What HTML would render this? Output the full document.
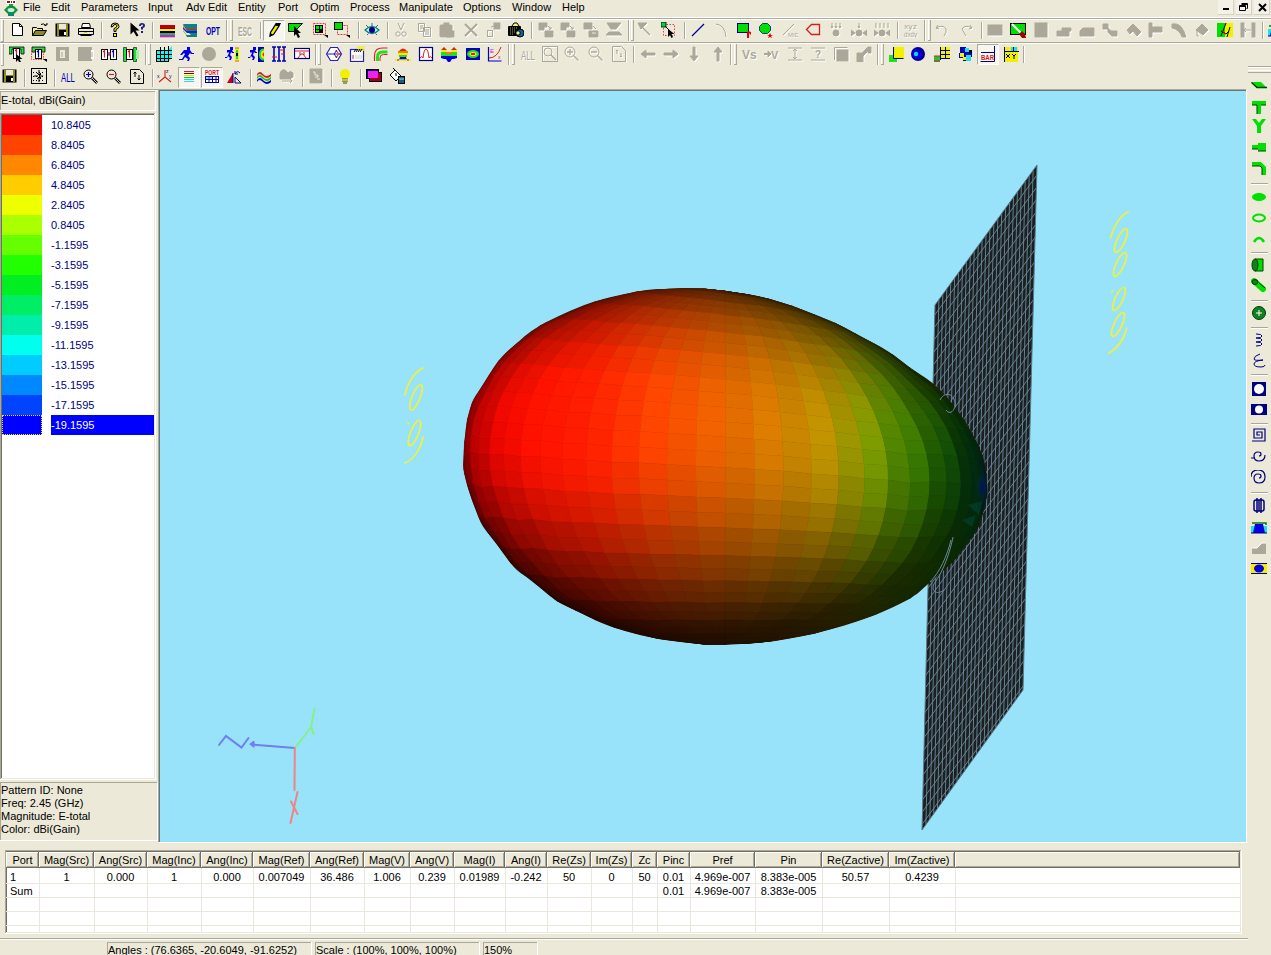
<!DOCTYPE html>
<html><head><meta charset="utf-8"><style>
html,body{margin:0;padding:0;width:1271px;height:955px;overflow:hidden;background:#ECE9D8;}
body{position:relative;font-family:"Liberation Sans",sans-serif;font-size:11px;line-height:13px;}
body div,body span,body svg{position:absolute;}
span{white-space:pre;}
</style></head><body>
<span style="left:23px;top:1px;color:#000;">File</span><span style="left:51px;top:1px;color:#000;">Edit</span><span style="left:81px;top:1px;color:#000;">Parameters</span><span style="left:148px;top:1px;color:#000;">Input</span><span style="left:186px;top:1px;color:#000;">Adv Edit</span><span style="left:238px;top:1px;color:#000;">Entity</span><span style="left:278px;top:1px;color:#000;">Port</span><span style="left:310px;top:1px;color:#000;">Optim</span><span style="left:350px;top:1px;color:#000;">Process</span><span style="left:399px;top:1px;color:#000;">Manipulate</span><span style="left:463px;top:1px;color:#000;">Options</span><span style="left:512px;top:1px;color:#000;">Window</span><span style="left:562px;top:1px;color:#000;">Help</span><div style="left:1218px;top:0px;width:16px;height:15px;background:#F3F1E8;border-right:1px solid #D5D2C4;border-bottom:1px solid #D5D2C4;box-sizing:border-box"></div><div style="left:1236px;top:0px;width:16px;height:15px;background:#F3F1E8;border-right:1px solid #D5D2C4;border-bottom:1px solid #D5D2C4;box-sizing:border-box"></div><div style="left:1254px;top:0px;width:16px;height:15px;background:#F3F1E8;border-right:1px solid #D5D2C4;border-bottom:1px solid #D5D2C4;box-sizing:border-box"></div><div style="left:1223px;top:8px;width:6px;height:2px;background:#000;"></div><svg style="left:1238px;top:2px" width="12" height="11"><path d="M3.5 1.5h6v5h-1M1.5 3.5h6v5h-6z M3.5 2.5h6 M1.5 4.5h6" stroke="#000" fill="none"/></svg><svg style="left:1257px;top:2px" width="11" height="11"><path d="M2 2L9 9M9 2L2 9" stroke="#000" stroke-width="2"/></svg><svg style="left:3px;top:0px" width="16" height="16" viewBox="0 0 16 16"><rect x="3" y="0" width="10" height="4" fill="#fff"/><path d="M4 1h3v2h-3zM8 1h1v2h-1zM10 1h2v2h-2z" fill="#a01818"/><path d="M1 10L5 6L11 6L15 10L11 14L5 14Z" fill="#109040"/><ellipse cx="8" cy="10" rx="3.5" ry="2" fill="#c8f0d8"/><rect x="5" y="14" width="6" height="2" fill="#108080"/><rect x="6" y="4" width="4" height="2" fill="#10a040"/></svg><div style="left:0px;top:17px;width:1271px;height:1px;background:#fff;"></div><div style="left:0px;top:18px;width:1271px;height:1px;background:#ACA899;"></div><div style="left:0px;top:19px;width:1271px;height:1px;background:#fff;"></div><div style="left:0px;top:42px;width:1271px;height:1px;background:#ACA899;"></div><div style="left:0px;top:43px;width:1271px;height:1px;background:#fff;"></div><div style="left:0px;top:89px;width:1246px;height:1px;background:#ACA899;"></div><div style="left:0px;top:90px;width:158px;height:1px;background:#fff;"></div><div style="left:1px;top:20px;width:1px;height:22px;background:#fff;"></div><div style="left:3px;top:20px;width:1px;height:22px;background:#ACA899;"></div><div style="left:1px;top:41px;width:3px;height:1px;background:#ACA899;"></div><div style="left:1px;top:44px;width:1px;height:22px;background:#fff;"></div><div style="left:3px;top:44px;width:1px;height:22px;background:#ACA899;"></div><div style="left:1px;top:65px;width:3px;height:1px;background:#ACA899;"></div><div style="left:263px;top:20px;width:22px;height:21px;background:#F6F5F0;box-sizing:border-box;border-top:1px solid #ACA899;border-left:1px solid #ACA899;border-bottom:1px solid #fff;border-right:1px solid #fff"></div><svg style="left:10px;top:22px" width="16" height="16" viewBox="0 0 16 16"><path d="M2.5 1.5h7l3 3v9h-10z" fill="#fff" stroke="#000"/><path d="M9.5 1.5v3h3" fill="none" stroke="#000"/></svg><svg style="left:32px;top:22px" width="16" height="16" viewBox="0 0 16 16"><path d="M0.5 5.5h4l1 1h5v3" fill="#f0f090" stroke="#000"/><path d="M0.5 5.5v8h10" fill="#f0f090" stroke="#000"/><path d="M0.5 13.5l3-5h11l-3 5z" fill="#8a8a20" stroke="#000"/><path d="M9 2.5q3-2 5 1.5" fill="none" stroke="#000"/><path d="M12 3h3v-2" fill="none" stroke="#000"/></svg><svg style="left:55px;top:22px" width="16" height="16" viewBox="0 0 16 16"><rect x="0.5" y="1.5" width="14" height="13" fill="#000"/><rect x="2" y="2" width="2" height="12" fill="#8a8a20"/><rect x="11" y="2" width="2" height="12" fill="#8a8a20"/><rect x="4" y="2" width="7" height="5" fill="#ECE9D8"/><rect x="4" y="7" width="7" height="1" fill="#8a8a20"/><rect x="9" y="10" width="2" height="3" fill="#fff"/></svg><svg style="left:78px;top:22px" width="16" height="16" viewBox="0 0 16 16"><path d="M4.5 1.5h7l1 4h-9z" fill="#fff" stroke="#000"/><path d="M0.5 6.5h15v6h-15z" fill="#ECE9D8" stroke="#000"/><rect x="1" y="9" width="14" height="1" fill="#000"/><rect x="6" y="10" width="3" height="1" fill="#e0d000"/><path d="M2.5 13.5h11" stroke="#000"/></svg><div style="left:101px;top:22px;width:1px;height:17px;background:#ACA899;"></div><div style="left:102px;top:22px;width:1px;height:17px;background:#fff;"></div><svg style="left:107px;top:22px" width="16" height="16" viewBox="0 0 16 16"><path d="M4 5q0-4 4-4q4 0 4 3.5q0 2-3 3v2h-2v-3q3-1 3-2.5q0-1.5-2-1.5q-2 0-2 2z" fill="#f8f000" stroke="#000" stroke-width="1"/><rect x="6.5" y="11.5" width="3" height="3" fill="#f8f000" stroke="#000"/></svg><svg style="left:130px;top:22px" width="16" height="16" viewBox="0 0 16 16"><path d="M0.5 0.5v12l3-3l3 5l2-1l-3-5h4z" fill="#000"/><path d="M9 4q0-3 3-3q3 0 3 2.5q0 2-2 2.5v1.5h-2v-2.5q2-.5 2-1.5q0-1-1-1q-1 0-1 1.5z" fill="#202080"/><rect x="11" y="9" width="2" height="2" fill="#202080"/></svg><div style="left:152px;top:22px;width:1px;height:17px;background:#ACA899;"></div><div style="left:153px;top:22px;width:1px;height:17px;background:#fff;"></div><svg style="left:159px;top:22px" width="16" height="16" viewBox="0 0 16 16"><rect x="1" y="3" width="15" height="3" fill="#c00000"/><rect x="1" y="6" width="15" height="1" fill="#800000"/><rect x="1" y="7" width="15" height="2" fill="#f8f000"/><rect x="1" y="9" width="15" height="2" fill="#000"/><rect x="1" y="11" width="15" height="2" fill="#40a080"/><rect x="1" y="13" width="15" height="2" fill="#a040a0"/><rect x="1" y="15" width="15" height="1" fill="#f0a0f0"/></svg><svg style="left:182px;top:22px" width="16" height="16" viewBox="0 0 16 16"><path d="M1 2h14v11h-6l-4-4z" fill="#108080"/><path d="M1 3l4 4h10v1h-10l-4-4z" fill="#e02020"/><path d="M1 5l4 4h10v2h-10l-4-4z" fill="#2020c0"/><path d="M1 8l4 5h10v1h-10l-4-5z" fill="#20e020"/><path d="M4 13h11v2h-10z" fill="#108080"/></svg><svg style="left:205px;top:22px" width="16" height="16" viewBox="0 0 16 16"><text x="1" y="12.5" font-family="Liberation Sans" font-weight="bold" font-size="11" fill="#0000c0" textLength="14" lengthAdjust="spacingAndGlyphs">OPT</text></svg><div style="left:226px;top:20px;width:1px;height:21px;background:#ACA899;"></div><div style="left:227px;top:20px;width:1px;height:21px;background:#fff;"></div><div style="left:230px;top:20px;width:1px;height:21px;background:#fff;"></div><div style="left:232px;top:20px;width:1px;height:21px;background:#ACA899;"></div><div style="left:230px;top:40px;width:3px;height:1px;background:#ACA899;"></div><svg style="left:237px;top:22px" width="16" height="16" viewBox="0 0 16 16"><text x="2" y="14.5" font-family="Liberation Sans" font-weight="bold" font-size="12" fill="#fff" textLength="14" lengthAdjust="spacingAndGlyphs">ESC</text><text x="1" y="13.5" font-family="Liberation Sans" font-weight="bold" font-size="12" fill="#ACA899" textLength="14" lengthAdjust="spacingAndGlyphs">ESC</text></svg><div style="left:260px;top:22px;width:1px;height:17px;background:#ACA899;"></div><div style="left:261px;top:22px;width:1px;height:17px;background:#fff;"></div><svg style="left:266px;top:22px" width="16" height="16" viewBox="0 0 16 16"><path d="M4 14l0.5-3.5l5.5-8.5l3 2l-5.5 8.5z" fill="#f0f000" stroke="#000" stroke-width="1.3"/><path d="M10 1h5l-1.5 3h-4z" fill="#000"/><path d="M3.5 15l1-4l2.5 1.7z" fill="#000"/></svg><svg style="left:288px;top:22px" width="16" height="16" viewBox="0 0 16 16"><path d="M0.5 1.5h14l-6 6v2h-8z" fill="#00e000" stroke="#000" stroke-width="1"/><path d="M6 4l0 0l7 7h-3l2 4l-2 1l-2-4l-2 2z" fill="#000"/></svg><svg style="left:312px;top:22px" width="16" height="16" viewBox="0 0 16 16"><rect x="1.5" y="1.5" width="12" height="11" fill="none" stroke="#e04040" stroke-dasharray="2 1"/><rect x="3" y="3" width="8" height="8" fill="#000"/><rect x="4" y="4" width="3" height="3" fill="#00e000"/><rect x="8" y="4" width="2" height="3" fill="#00e000"/><rect x="4" y="8" width="3" height="2" fill="#00e000"/><path d="M12 13h4v3z" fill="#000"/></svg><svg style="left:334px;top:22px" width="16" height="16" viewBox="0 0 16 16"><rect x="3.5" y="3.5" width="10" height="9" fill="none" stroke="#e04040" stroke-dasharray="2 1"/><rect x="0.5" y="0.5" width="8" height="7" fill="#00e000" stroke="#000"/><path d="M12 13h4v3z" fill="#000"/></svg><div style="left:358px;top:22px;width:1px;height:17px;background:#ACA899;"></div><div style="left:359px;top:22px;width:1px;height:17px;background:#fff;"></div><svg style="left:364px;top:22px" width="16" height="16" viewBox="0 0 16 16"><path d="M1 8q7-7 14 0q-7 7-14 0z" fill="#b0f0f0" stroke="#108080" stroke-width="1.2"/><ellipse cx="8" cy="8" rx="3" ry="3" fill="#000080"/><path d="M2 3l2 2M8 1v3M14 3l-2 2M3 13l1.5-1.5M13 13l-1.5-1.5" stroke="#108080"/></svg><div style="left:387px;top:22px;width:1px;height:17px;background:#ACA899;"></div><div style="left:388px;top:22px;width:1px;height:17px;background:#fff;"></div><svg style="left:393px;top:22px" width="16" height="16" viewBox="0 0 16 16"><g transform="translate(1,1)" fill="#fff" stroke="#fff"><path d="M5 1l3 7M11 1l-3 7" fill="none"/><circle cx="5" cy="12" r="2.2" fill="none"/><circle cx="11" cy="12" r="2.2" fill="none"/></g><g fill="#ACA899" stroke="#ACA899"><path d="M5 1l3 7M11 1l-3 7" fill="none"/><circle cx="5" cy="12" r="2.2" fill="none"/><circle cx="11" cy="12" r="2.2" fill="none"/></g></svg><svg style="left:417px;top:22px" width="16" height="16" viewBox="0 0 16 16"><g transform="translate(1,1)" fill="#fff" stroke="#fff"><path d="M1.5 1.5h6v8h-6zM6.5 5.5h7v9h-7z" fill="none"/><path d="M3 4h3M3 6h3M8 8h4M8 10h4M8 12h4" fill="none"/></g><g fill="#ACA899" stroke="#ACA899"><path d="M1.5 1.5h6v8h-6zM6.5 5.5h7v9h-7z" fill="none"/><path d="M3 4h3M3 6h3M8 8h4M8 10h4M8 12h4" fill="none"/></g></svg><svg style="left:439px;top:22px" width="16" height="16" viewBox="0 0 16 16"><g transform="translate(1,1)" fill="#fff" stroke="#fff"><rect x="1" y="3" width="12" height="12" rx="1"/><rect x="5" y="1" width="5" height="3"/><rect x="8" y="9" width="7" height="6"/></g><g fill="#ACA899" stroke="#ACA899"><rect x="1" y="3" width="12" height="12" rx="1"/><rect x="5" y="1" width="5" height="3"/><rect x="8" y="9" width="7" height="6"/></g></svg><svg style="left:463px;top:22px" width="16" height="16" viewBox="0 0 16 16"><g transform="translate(1,1)" fill="#fff" stroke="#fff"><path d="M2 2l12 12M14 2l-12 12" stroke-width="2" fill="none"/></g><g fill="#ACA899" stroke="#ACA899"><path d="M2 2l12 12M14 2l-12 12" stroke-width="2" fill="none"/></g></svg><svg style="left:485px;top:22px" width="16" height="16" viewBox="0 0 16 16"><g transform="translate(1,1)" fill="#fff" stroke="#fff"><rect x="9" y="1" width="6" height="6"/><rect x="2.5" y="8.5" width="5" height="6" fill="none"/><path d="M6 5l4-1" fill="none"/></g><g fill="#ACA899" stroke="#ACA899"><rect x="9" y="1" width="6" height="6"/><rect x="2.5" y="8.5" width="5" height="6" fill="none"/><path d="M6 5l4-1" fill="none"/></g></svg><svg style="left:508px;top:22px" width="16" height="16" viewBox="0 0 16 16"><rect x="0" y="4" width="13" height="10" rx="1" fill="#000"/><path d="M4 4l2-3h3l2 3" fill="#f0f080" stroke="#000"/><path d="M2 6h1M4 6h1M6 6h1M8 6h1M2 8h1M4 8h1M6 8h1M2 10h1M4 10h1M6 10h1M2 12h1M4 12h1" stroke="#a0a040"/><circle cx="12" cy="11" r="4" fill="#106090" stroke="#000"/><circle cx="10" cy="11" r="2.2" fill="#f0f0a0" stroke="#000"/></svg><div style="left:531px;top:22px;width:1px;height:17px;background:#ACA899;"></div><div style="left:532px;top:22px;width:1px;height:17px;background:#fff;"></div><svg style="left:538px;top:22px" width="16" height="16" viewBox="0 0 16 16"><g transform="translate(1,1)" fill="#fff" stroke="#fff"><path d="M1 1h8v4h-3v3h-5z"/><path d="M7 9h8v6h-8z"/><path d="M10 4l3 3M13 5v2h-2" fill="none"/></g><g fill="#ACA899" stroke="#ACA899"><path d="M1 1h8v4h-3v3h-5z"/><path d="M7 9h8v6h-8z"/><path d="M10 4l3 3M13 5v2h-2" fill="none"/></g></svg><svg style="left:560px;top:22px" width="16" height="16" viewBox="0 0 16 16"><g transform="translate(1,1)" fill="#fff" stroke="#fff"><path d="M1 1h8v4h-3v3h-5z"/><path d="M7 9h8v6h-8z"/><path d="M10 4l3 3M13 5v2h-2" fill="none"/></g><g fill="#ACA899" stroke="#ACA899"><path d="M1 1h8v4h-3v3h-5z"/><path d="M7 9h8v6h-8z"/><path d="M10 4l3 3M13 5v2h-2" fill="none"/></g></svg><svg style="left:583px;top:22px" width="16" height="16" viewBox="0 0 16 16"><g transform="translate(1,1)" fill="#fff" stroke="#fff"><path d="M1 1h8v6h-8z"/><path d="M6 9h9v6h-9z"/><path d="M9 11h4" stroke="#ECE9D8" fill="none"/><path d="M10 4l3 3" fill="none"/></g><g fill="#ACA899" stroke="#ACA899"><path d="M1 1h8v6h-8z"/><path d="M6 9h9v6h-9z"/><path d="M9 11h4" stroke="#ECE9D8" fill="none"/><path d="M10 4l3 3" fill="none"/></g></svg><svg style="left:606px;top:22px" width="16" height="16" viewBox="0 0 16 16"><g transform="translate(1,1)" fill="#fff" stroke="#fff"><path d="M1 1h14l-5 6h-5z"/><path d="M3 10h10l3 3h-16z"/></g><g fill="#ACA899" stroke="#ACA899"><path d="M1 1h14l-5 6h-5z"/><path d="M3 10h10l3 3h-16z"/></g></svg><div style="left:628px;top:20px;width:1px;height:21px;background:#ACA899;"></div><div style="left:629px;top:20px;width:1px;height:21px;background:#fff;"></div><div style="left:631px;top:20px;width:1px;height:21px;background:#fff;"></div><div style="left:633px;top:20px;width:1px;height:21px;background:#ACA899;"></div><div style="left:631px;top:40px;width:3px;height:1px;background:#ACA899;"></div><svg style="left:637px;top:22px" width="16" height="16" viewBox="0 0 16 16"><g transform="translate(1,1)" fill="#fff" stroke="#fff"><path d="M1 1h9l-3 3l-3 3z"/><path d="M4 4l9 9" stroke-width="1.5" fill="none"/></g><g fill="#ACA899" stroke="#ACA899"><path d="M1 1h9l-3 3l-3 3z"/><path d="M4 4l9 9" stroke-width="1.5" fill="none"/></g></svg><svg style="left:661px;top:22px" width="16" height="16" viewBox="0 0 16 16"><rect x="2.5" y="2.5" width="11" height="11" fill="none" stroke="#e04040" stroke-dasharray="1.5 1.5"/><rect x="0" y="0" width="5" height="5" fill="#00d040" stroke="#000" stroke-width="0.8"/><path d="M4 4l6 6" stroke="#000"/><path d="M7 7v8l2-2l1.5 3l1.5-1l-1.5-3h3z" fill="#000"/></svg><div style="left:684px;top:22px;width:1px;height:17px;background:#ACA899;"></div><div style="left:685px;top:22px;width:1px;height:17px;background:#fff;"></div><svg style="left:690px;top:22px" width="16" height="16" viewBox="0 0 16 16"><path d="M2 14L14 2" stroke="#0000a0" stroke-width="1.2"/></svg><svg style="left:713px;top:22px" width="16" height="16" viewBox="0 0 16 16"><g transform="translate(1,1)" fill="#fff" stroke="#fff"><path d="M3 2q9 1 10 13" fill="none"/></g><g fill="#ACA899" stroke="#ACA899"><path d="M3 2q9 1 10 13" fill="none"/></g></svg><svg style="left:736px;top:22px" width="16" height="16" viewBox="0 0 16 16"><rect x="1.5" y="1.5" width="11" height="9" fill="#00e000" stroke="#000080"/><path d="M11 11v5h2v-5l2 2v-3l-3-1z" fill="#e00000"/></svg><svg style="left:758px;top:22px" width="16" height="16" viewBox="0 0 16 16"><path d="M4.5 1.5h5l3 3v4l-3 3h-5l-3-3v-4z" fill="#00e000" stroke="#104080"/><path d="M12 11l1 2h2l-2 1l1 2l-2-1l-2 1l1-2l-2-1h2z" fill="#e00000"/></svg><svg style="left:782px;top:22px" width="16" height="16" viewBox="0 0 16 16"><g transform="translate(1,1)" fill="#fff" stroke="#fff"><path d="M1 13L12 2" fill="none"/><text x="6" y="15" font-size="6" font-family="Liberation Sans" stroke="none">MID</text></g><g fill="#ACA899" stroke="#ACA899"><path d="M1 13L12 2" fill="none"/><text x="6" y="15" font-size="6" font-family="Liberation Sans" stroke="none">MID</text></g></svg><svg style="left:805px;top:22px" width="16" height="16" viewBox="0 0 16 16"><path d="M1.5 7.5l5-5h8v10h-8z" fill="none" stroke="#d02020" stroke-width="1.3"/></svg><svg style="left:828px;top:22px" width="16" height="16" viewBox="0 0 16 16"><g transform="translate(1,1)" fill="#fff" stroke="#fff"><path d="M4 1v5M8 1v5M12 1v5M3 4l1 2l1-2M7 4l1 2l1-2M11 4l1 2l1-2" fill="none"/><circle cx="8" cy="11" r="3"/></g><g fill="#ACA899" stroke="#ACA899"><path d="M4 1v5M8 1v5M12 1v5M3 4l1 2l1-2M7 4l1 2l1-2M11 4l1 2l1-2" fill="none"/><circle cx="8" cy="11" r="3"/></g></svg><svg style="left:851px;top:22px" width="16" height="16" viewBox="0 0 16 16"><g transform="translate(1,1)" fill="#fff" stroke="#fff"><path d="M8 1v5M7 4l1 2l1-2" fill="none"/><circle cx="8" cy="11" r="3"/><path d="M0 8l4 3l-4 3zM16 8l-4 3l4 3z"/></g><g fill="#ACA899" stroke="#ACA899"><path d="M8 1v5M7 4l1 2l1-2" fill="none"/><circle cx="8" cy="11" r="3"/><path d="M0 8l4 3l-4 3zM16 8l-4 3l4 3z"/></g></svg><svg style="left:874px;top:22px" width="16" height="16" viewBox="0 0 16 16"><g transform="translate(1,1)" fill="#fff" stroke="#fff"><path d="M2 1v5M6 1v5M10 1v5M14 1v5" fill="none"/><circle cx="8" cy="11" r="3"/><path d="M0 8l4 3l-4 3zM16 8l-4 3l4 3z"/></g><g fill="#ACA899" stroke="#ACA899"><path d="M2 1v5M6 1v5M10 1v5M14 1v5" fill="none"/><circle cx="8" cy="11" r="3"/><path d="M0 8l4 3l-4 3zM16 8l-4 3l4 3z"/></g></svg><div style="left:897px;top:22px;width:1px;height:17px;background:#ACA899;"></div><div style="left:898px;top:22px;width:1px;height:17px;background:#fff;"></div><svg style="left:903px;top:22px" width="16" height="16" viewBox="0 0 16 16"><g transform="translate(1,1)" fill="#fff" stroke="#fff"><text x="1" y="7" font-size="8" font-family="Liberation Sans" stroke="none" textLength="13" lengthAdjust="spacingAndGlyphs">xyz</text><text x="1" y="15" font-size="8" font-family="Liberation Sans" stroke="none" textLength="13" lengthAdjust="spacingAndGlyphs">dxdy</text></g><g fill="#ACA899" stroke="#ACA899"><text x="1" y="7" font-size="8" font-family="Liberation Sans" stroke="none" textLength="13" lengthAdjust="spacingAndGlyphs">xyz</text><text x="1" y="15" font-size="8" font-family="Liberation Sans" stroke="none" textLength="13" lengthAdjust="spacingAndGlyphs">dxdy</text></g></svg><div style="left:924px;top:20px;width:1px;height:21px;background:#ACA899;"></div><div style="left:925px;top:20px;width:1px;height:21px;background:#fff;"></div><div style="left:928px;top:20px;width:1px;height:21px;background:#fff;"></div><div style="left:930px;top:20px;width:1px;height:21px;background:#ACA899;"></div><div style="left:928px;top:40px;width:3px;height:1px;background:#ACA899;"></div><svg style="left:934px;top:22px" width="16" height="16" viewBox="0 0 16 16"><g transform="translate(1,1)" fill="#fff" stroke="#fff"><path d="M4 3l-2 3l3 1" fill="none"/><path d="M2 6q7-4 10 1q1 3-2 7" fill="none"/></g><g fill="#ACA899" stroke="#ACA899"><path d="M4 3l-2 3l3 1" fill="none"/><path d="M2 6q7-4 10 1q1 3-2 7" fill="none"/></g></svg><svg style="left:958px;top:22px" width="16" height="16" viewBox="0 0 16 16"><g transform="translate(1,1)" fill="#fff" stroke="#fff"><path d="M12 3l2 3l-3 1" fill="none"/><path d="M14 6q-7-4-10 1l4 7" fill="none"/></g><g fill="#ACA899" stroke="#ACA899"><path d="M12 3l2 3l-3 1" fill="none"/><path d="M14 6q-7-4-10 1l4 7" fill="none"/></g></svg><div style="left:981px;top:22px;width:1px;height:17px;background:#ACA899;"></div><div style="left:982px;top:22px;width:1px;height:17px;background:#fff;"></div><svg style="left:987px;top:22px" width="16" height="16" viewBox="0 0 16 16"><g transform="translate(1,1)" fill="#fff" stroke="#fff"><rect x="1" y="3" width="14" height="10"/></g><g fill="#ACA899" stroke="#ACA899"><rect x="1" y="3" width="14" height="10"/></g></svg><svg style="left:1010px;top:22px" width="16" height="16" viewBox="0 0 16 16"><rect x="0.5" y="1.5" width="15" height="11" fill="#00e000" stroke="#000"/><path d="M2 2l12 12" stroke="#fff" stroke-width="2"/><path d="M9 12l3-3l3 3l1 4h-4z" fill="#a00000"/></svg><svg style="left:1033px;top:22px" width="16" height="16" viewBox="0 0 16 16"><g transform="translate(1,1)" fill="#fff" stroke="#fff"><rect x="2" y="1" width="12" height="14"/></g><g fill="#ACA899" stroke="#ACA899"><rect x="2" y="1" width="12" height="14"/></g></svg><svg style="left:1056px;top:22px" width="16" height="16" viewBox="0 0 16 16"><g transform="translate(1,1)" fill="#fff" stroke="#fff"><path d="M1 9h5v-3h9v3h-2v5h-12z"/></g><g fill="#ACA899" stroke="#ACA899"><path d="M1 9h5v-3h9v3h-2v5h-12z"/></g></svg><svg style="left:1079px;top:22px" width="16" height="16" viewBox="0 0 16 16"><g transform="translate(1,1)" fill="#fff" stroke="#fff"><path d="M1 9l3-3h11v8h-14z"/></g><g fill="#ACA899" stroke="#ACA899"><path d="M1 9l3-3h11v8h-14z"/></g></svg><svg style="left:1102px;top:22px" width="16" height="16" viewBox="0 0 16 16"><g transform="translate(1,1)" fill="#fff" stroke="#fff"><path d="M1 2h5v4l3 3h6v5h-5l-4-4v-3h-5z"/></g><g fill="#ACA899" stroke="#ACA899"><path d="M1 2h5v4l3 3h6v5h-5l-4-4v-3h-5z"/></g></svg><svg style="left:1126px;top:22px" width="16" height="16" viewBox="0 0 16 16"><g transform="translate(1,1)" fill="#fff" stroke="#fff"><path d="M1 8l6-6l8 8l-4 4l-4-5l-3 3z"/></g><g fill="#ACA899" stroke="#ACA899"><path d="M1 8l6-6l8 8l-4 4l-4-5l-3 3z"/></g></svg><svg style="left:1147px;top:22px" width="16" height="16" viewBox="0 0 16 16"><g transform="translate(1,1)" fill="#fff" stroke="#fff"><path d="M2 1h3v4h10v5h-10v5h-3z"/></g><g fill="#ACA899" stroke="#ACA899"><path d="M2 1h3v4h10v5h-10v5h-3z"/></g></svg><svg style="left:1171px;top:22px" width="16" height="16" viewBox="0 0 16 16"><g transform="translate(1,1)" fill="#fff" stroke="#fff"><path d="M1 2q10-2 14 13h-4q-2-7-10-9z"/></g><g fill="#ACA899" stroke="#ACA899"><path d="M1 2q10-2 14 13h-4q-2-7-10-9z"/></g></svg><svg style="left:1194px;top:22px" width="16" height="16" viewBox="0 0 16 16"><g transform="translate(1,1)" fill="#fff" stroke="#fff"><path d="M2 8l6-6l6 6l-5 5z"/><path d="M3 9v5h2" fill="none"/></g><g fill="#ACA899" stroke="#ACA899"><path d="M2 8l6-6l6 6l-5 5z"/><path d="M3 9v5h2" fill="none"/></g></svg><svg style="left:1217px;top:22px" width="16" height="16" viewBox="0 0 16 16"><rect x="0" y="1" width="8" height="14" fill="#00e000"/><rect x="8" y="1" width="8" height="14" fill="#f0f000"/><path d="M9 1l-5 13M4 9l5 3l3-3M13 5l-3 10" stroke="#000" fill="none"/><path d="M5 9l4 3" stroke="#e00000"/></svg><svg style="left:1240px;top:22px" width="16" height="16" viewBox="0 0 16 16"><g transform="translate(1,1)" fill="#fff" stroke="#fff"><rect x="1" y="1" width="3" height="14"/><rect x="12" y="1" width="3" height="14"/><path d="M5 8h6M6 6l-2 2l2 2" fill="none"/></g><g fill="#ACA899" stroke="#ACA899"><rect x="1" y="1" width="3" height="14"/><rect x="12" y="1" width="3" height="14"/><path d="M5 8h6M6 6l-2 2l2 2" fill="none"/></g></svg><div style="left:1262px;top:22px;width:1px;height:17px;background:#ACA899;"></div><div style="left:1263px;top:22px;width:1px;height:17px;background:#fff;"></div><svg style="left:1268px;top:22px" width="16" height="16" viewBox="0 0 16 16"><rect x="0" y="7" width="16" height="7" fill="#20e0f0"/><path d="M4 5h8l2 9h-12z" fill="#0000e0"/><path d="M1 4h14v2" stroke="#008000" fill="none" stroke-width="1.5"/><path d="M0 14h16" stroke="#000080"/></svg><div style="left:977px;top:44px;width:22px;height:21px;background:#F6F5F0;box-sizing:border-box;border-top:1px solid #ACA899;border-left:1px solid #ACA899;border-bottom:1px solid #fff;border-right:1px solid #fff"></div><svg style="left:9px;top:46px" width="16" height="16" viewBox="0 0 16 16"><path d="M0 1h15v7h-3v-5h-9v5h-3z" fill="#20e040" stroke="#000" stroke-width="0.8"/><rect x="4.5" y="2.5" width="6" height="10" fill="#fff" stroke="#000"/><path d="M6 5l1.5-1.5v7" stroke="#d02020" fill="none" stroke-width="1.2"/><path d="M7 8v8l2-2l1.5 3l1.5-1l-1.5-3h3z" fill="#000"/></svg><svg style="left:31px;top:46px" width="16" height="16" viewBox="0 0 16 16"><path d="M1 1h13v5h-13z" fill="#20e040" stroke="#000" stroke-width="0.8"/><rect x="0.5" y="4.5" width="12" height="9" fill="none" stroke="#e04040" stroke-dasharray="1.5 1"/><rect x="4.5" y="3.5" width="6" height="9" fill="#fff" stroke="#000"/><path d="M6 6l1.5-1.5v7" stroke="#0000c0" fill="none" stroke-width="1.2"/><path d="M12 13h4v3z" fill="#000"/></svg><svg style="left:54px;top:46px" width="16" height="16" viewBox="0 0 16 16"><rect x="2" y="1" width="13" height="14" fill="#ACA899"/><rect x="6" y="4" width="5" height="8" fill="#ECE9D8"/><path d="M8 6v5" stroke="#ACA899"/></svg><svg style="left:78px;top:46px" width="16" height="16" viewBox="0 0 16 16"><rect x="0" y="1" width="14" height="14" fill="#ACA899"/><rect x="13" y="4" width="3" height="9" fill="#fff"/><path d="M14 6v5" stroke="#ACA899"/></svg><svg style="left:101px;top:46px" width="16" height="16" viewBox="0 0 16 16"><rect x="0.5" y="3.5" width="6" height="10" fill="#fff" stroke="#000"/><path d="M2 6l1.5-1.5v7" stroke="#d02020" fill="none" stroke-width="1.2"/><rect x="9.5" y="3.5" width="6" height="10" fill="#fff" stroke="#000"/><path d="M11 6l1.5-1.5v7" stroke="#0000c0" fill="none" stroke-width="1.2"/><path d="M6 8h4M8 6v4" stroke="#a020a0" stroke-width="1.2"/></svg><svg style="left:123px;top:46px" width="16" height="16" viewBox="0 0 16 16"><path d="M0.5 1.5h3v14h-3z" fill="#20e040" stroke="#000" stroke-width="0.6"/><path d="M10.5 1.5h3v14h-3z" fill="#20e040" stroke="#000" stroke-width="0.6"/><rect x="13" y="4" width="3" height="9" fill="#a0f0a0"/><rect x="3.5" y="3.5" width="6" height="10" fill="#fff" stroke="#000"/><path d="M5 6l1.5-1.5v7" stroke="#d02020" fill="none" stroke-width="1.2"/></svg><div style="left:145px;top:44px;width:1px;height:21px;background:#ACA899;"></div><div style="left:146px;top:44px;width:1px;height:21px;background:#fff;"></div><div style="left:148px;top:44px;width:1px;height:21px;background:#fff;"></div><div style="left:150px;top:44px;width:1px;height:21px;background:#ACA899;"></div><div style="left:148px;top:64px;width:3px;height:1px;background:#ACA899;"></div><svg style="left:156px;top:46px" width="16" height="16" viewBox="0 0 16 16"><path d="M0 4h12l4-4v12l-4 4h-12z" fill="#20f0f0"/><path d="M0.5 4v12M4.5 1v15M8.5 1v15M12.5 0v16M0 4.5h16M0 8.5h16M0 12.5h16M0 15.5h12" stroke="#000"/></svg><svg style="left:178px;top:46px" width="16" height="16" viewBox="0 0 16 16"><path d="M9 1h3v3h-3z M6 4h6l2 3l2 0v1h-3l-1-1l-2 3l2 2l-1 3h-2l1-2l-3-2l-2 3h-4v-1h3l3-5l-1-1l-2 2h-2z" fill="#0000e0"/></svg><svg style="left:201px;top:46px" width="16" height="16" viewBox="0 0 16 16"><circle cx="8" cy="8" r="7" fill="#ACA899"/></svg><svg style="left:225px;top:46px" width="16" height="16" viewBox="0 0 16 16"><path d="M5 1h3v3h-3z M2 4h5l1 2l1 0v1h-2l-1-1l-1 3l2 2l-1 3h-2l1-2l-2-2l-1 2h-2v-1h2l2-4l-1-1l-1 1z" fill="#0000e0"/><rect x="10" y="2" width="4" height="13" fill="#f0f000"/><rect x="11" y="4" width="2" height="9" fill="#20e020"/><rect x="11" y="7" width="2" height="3" fill="#000"/><path d="M10 2h4M10 15h4" stroke="#f06000"/></svg><svg style="left:248px;top:46px" width="16" height="16" viewBox="0 0 16 16"><path d="M5 1h3v3h-3z M2 4h5l1 2l1 0v1h-2l-1-1l-1 3l2 2l-1 3h-2l1-2l-2-2l-1 2h-2v-1h2l2-4l-1-1l-1 1z" fill="#0000e0"/><rect x="10" y="1" width="6" height="15" fill="#0000c0"/><ellipse cx="15" cy="8.5" rx="4" ry="6" fill="#20e020"/><ellipse cx="15.5" cy="8.5" rx="2.5" ry="4" fill="#f0f000"/><ellipse cx="16" cy="8.5" rx="1.5" ry="2" fill="#f02020"/></svg><svg style="left:271px;top:46px" width="16" height="16" viewBox="0 0 16 16"><path d="M1 1h4M3 1v14M1 15h4M6 1h4M8 1v14M6 15h4M11 1h4M13 1v14M11 15h4" stroke="#0000c0" stroke-width="1.6"/><path d="M1 11h5M9 4h5M10 8h4" stroke="#d02020"/></svg><svg style="left:294px;top:46px" width="16" height="16" viewBox="0 0 16 16"><rect x="0.5" y="2.5" width="15" height="10" fill="#fff" stroke="#000080" stroke-width="1.2"/><path d="M1 5h14M4 12l3-4h2l3 4M6 6v3M10 6v3" stroke="#d02020" fill="none"/></svg><div style="left:315px;top:44px;width:1px;height:21px;background:#ACA899;"></div><div style="left:316px;top:44px;width:1px;height:21px;background:#fff;"></div><div style="left:318px;top:44px;width:1px;height:21px;background:#fff;"></div><div style="left:320px;top:44px;width:1px;height:21px;background:#ACA899;"></div><div style="left:318px;top:64px;width:3px;height:1px;background:#ACA899;"></div><svg style="left:326px;top:46px" width="16" height="16" viewBox="0 0 16 16"><path d="M4.5 1.5h7l4 6.5l-4 6.5h-7l-4-6.5z" fill="#fff" stroke="#2020c0" stroke-width="1.2"/><path d="M1 8h14M8 8l3-4M8 8l3 4" stroke="#2020c0" fill="none"/><path d="M9 5q3 0 3 2M9 11q3 0 3-2M12 8l3 0" stroke="#d02020" fill="none"/></svg><svg style="left:349px;top:46px" width="16" height="16" viewBox="0 0 16 16"><rect x="1.5" y="3.5" width="13" height="12" fill="#fff" stroke="#2020c0" stroke-width="1.2"/><rect x="8" y="0" width="8" height="5" fill="#f0f040" opacity="0.8"/><path d="M5 6l2-3M7 6l2-3M9 6l2-3M11 6l2-3" stroke="#000"/><path d="M3 10h2M3 12h2" stroke="#d02020"/><path d="M6 10h7M6 12h7" stroke="#ccc"/></svg><svg style="left:373px;top:46px" width="16" height="16" viewBox="0 0 16 16"><path d="M1.5 15v-5q0-8 8-8h5" fill="none" stroke="#e02020" stroke-width="1.2"/><path d="M4.5 15v-4q0-5 5-5h5" fill="none" stroke="#20e020" stroke-width="3"/><path d="M7 15v-3q0-3.5 3.5-3.5h4" fill="none" stroke="#e02020" stroke-width="1"/></svg><svg style="left:395px;top:46px" width="16" height="16" viewBox="0 0 16 16"><path d="M4 5q4-5 8 0z" fill="#e02020"/><rect x="3" y="5" width="10" height="2" fill="#f08000"/><rect x="3" y="7" width="10" height="2" fill="#f0f000"/><rect x="4" y="9" width="8" height="2" fill="#20e020"/><path d="M5 11h6l1 3h-8z" fill="#0000e0"/><path d="M0 14h16" stroke="#f0f000" stroke-width="1.5"/><path d="M2 14h2M12 14h2" stroke="#e06000" stroke-width="1.5"/></svg><svg style="left:418px;top:46px" width="16" height="16" viewBox="0 0 16 16"><rect x="1.5" y="1.5" width="13" height="13" fill="#fff" stroke="#000080" stroke-width="1.2"/><path d="M2 12q2-3 3 0q1-9 3-9q2 0 3 9q1-3 3 0" fill="none" stroke="#d02020"/></svg><svg style="left:441px;top:46px" width="16" height="16" viewBox="0 0 16 16"><path d="M0 4l3-3l3 3zM10 4l3-3l3 3z" fill="#e02020"/><rect x="0" y="4" width="6" height="3" fill="#f0f000"/><rect x="10" y="4" width="6" height="3" fill="#f0f000"/><rect x="0" y="6" width="16" height="4" fill="#20e020"/><rect x="5" y="6" width="6" height="2" fill="#f08000"/><path d="M0 10h16v2l-3 1h-2l-2 3h-2l-2-3h-2l-3-1z" fill="#0000e0"/></svg><svg style="left:465px;top:46px" width="16" height="16" viewBox="0 0 16 16"><rect x="1" y="2" width="14" height="12" fill="#0000c0"/><ellipse cx="8" cy="8" rx="6" ry="4" fill="#20e020"/><ellipse cx="8" cy="8" rx="3.5" ry="2" fill="#f0f000"/><rect x="6" y="7" width="4" height="2" fill="#e02020"/></svg><svg style="left:487px;top:46px" width="16" height="16" viewBox="0 0 16 16"><path d="M1.5 1v14h13" fill="none" stroke="#0000c0" stroke-width="1.2"/><path d="M2 12q8 0 12-11" fill="none" stroke="#d02020"/><text x="3" y="7" font-size="6" font-family="Liberation Sans" fill="#c020c0">E</text><text x="11" y="13" font-size="5" font-family="Liberation Sans" fill="#c020c0">x</text></svg><div style="left:508px;top:44px;width:1px;height:21px;background:#ACA899;"></div><div style="left:509px;top:44px;width:1px;height:21px;background:#fff;"></div><div style="left:512px;top:44px;width:1px;height:21px;background:#fff;"></div><div style="left:514px;top:44px;width:1px;height:21px;background:#ACA899;"></div><div style="left:512px;top:64px;width:3px;height:1px;background:#ACA899;"></div><svg style="left:520px;top:46px" width="16" height="16" viewBox="0 0 16 16"><g transform="translate(1,1)" fill="#fff" stroke="#fff"><text x="1" y="14" font-size="13" font-family="Liberation Sans" stroke="none" textLength="14" lengthAdjust="spacingAndGlyphs">ALL</text></g><g fill="#ACA899" stroke="#ACA899"><text x="1" y="14" font-size="13" font-family="Liberation Sans" stroke="none" textLength="14" lengthAdjust="spacingAndGlyphs">ALL</text></g></svg><svg style="left:542px;top:46px" width="16" height="16" viewBox="0 0 16 16"><g transform="translate(1,1)" fill="#fff" stroke="#fff"><rect x="0.5" y="0.5" width="15" height="15" fill="none"/><circle cx="6" cy="6" r="4" fill="none"/><path d="M9 9l5 5" stroke-width="1.5" fill="none"/></g><g fill="#ACA899" stroke="#ACA899"><rect x="0.5" y="0.5" width="15" height="15" fill="none"/><circle cx="6" cy="6" r="4" fill="none"/><path d="M9 9l5 5" stroke-width="1.5" fill="none"/></g></svg><svg style="left:564px;top:46px" width="16" height="16" viewBox="0 0 16 16"><g transform="translate(1,1)" fill="#fff" stroke="#fff"><circle cx="6" cy="6" r="5" fill="none"/><path d="M9.5 9.5l5 5M3 6h6M6 3v6" stroke-width="1.3" fill="none"/></g><g fill="#ACA899" stroke="#ACA899"><circle cx="6" cy="6" r="5" fill="none"/><path d="M9.5 9.5l5 5M3 6h6M6 3v6" stroke-width="1.3" fill="none"/></g></svg><svg style="left:588px;top:46px" width="16" height="16" viewBox="0 0 16 16"><g transform="translate(1,1)" fill="#fff" stroke="#fff"><circle cx="6" cy="6" r="5" fill="none"/><path d="M9.5 9.5l5 5M3 6h6" stroke-width="1.3" fill="none"/></g><g fill="#ACA899" stroke="#ACA899"><circle cx="6" cy="6" r="5" fill="none"/><path d="M9.5 9.5l5 5M3 6h6" stroke-width="1.3" fill="none"/></g></svg><svg style="left:611px;top:46px" width="16" height="16" viewBox="0 0 16 16"><g transform="translate(1,1)" fill="#fff" stroke="#fff"><path d="M1.5 0.5h9l4 4v11h-13z" fill="none"/><path d="M6 4v4M5 5l1-1l1 1M10 7v4M9 10l1 1l1-1" fill="none"/></g><g fill="#ACA899" stroke="#ACA899"><path d="M1.5 0.5h9l4 4v11h-13z" fill="none"/><path d="M6 4v4M5 5l1-1l1 1M10 7v4M9 10l1 1l1-1" fill="none"/></g></svg><div style="left:633px;top:46px;width:1px;height:17px;background:#ACA899;"></div><div style="left:634px;top:46px;width:1px;height:17px;background:#fff;"></div><svg style="left:640px;top:46px" width="16" height="16" viewBox="0 0 16 16"><g transform="translate(1,1)" fill="#fff" stroke="#fff"><path d="M1 8l5-4v3h9v2h-9v3z"/></g><g fill="#ACA899" stroke="#ACA899"><path d="M1 8l5-4v3h9v2h-9v3z"/></g></svg><svg style="left:663px;top:46px" width="16" height="16" viewBox="0 0 16 16"><g transform="translate(1,1)" fill="#fff" stroke="#fff"><path d="M15 8l-5-4v3h-9v2h9v3z"/></g><g fill="#ACA899" stroke="#ACA899"><path d="M15 8l-5-4v3h-9v2h9v3z"/></g></svg><svg style="left:686px;top:46px" width="16" height="16" viewBox="0 0 16 16"><g transform="translate(1,1)" fill="#fff" stroke="#fff"><path d="M8 15l-4-5h3v-9h2v9h3z"/></g><g fill="#ACA899" stroke="#ACA899"><path d="M8 15l-4-5h3v-9h2v9h3z"/></g></svg><svg style="left:710px;top:46px" width="16" height="16" viewBox="0 0 16 16"><g transform="translate(1,1)" fill="#fff" stroke="#fff"><path d="M8 1l-4 5h3v9h2v-9h3z"/></g><g fill="#ACA899" stroke="#ACA899"><path d="M8 1l-4 5h3v9h2v-9h3z"/></g></svg><div style="left:730px;top:44px;width:1px;height:21px;background:#ACA899;"></div><div style="left:731px;top:44px;width:1px;height:21px;background:#fff;"></div><div style="left:734px;top:44px;width:1px;height:21px;background:#fff;"></div><div style="left:736px;top:44px;width:1px;height:21px;background:#ACA899;"></div><div style="left:734px;top:64px;width:3px;height:1px;background:#ACA899;"></div><svg style="left:742px;top:46px" width="16" height="16" viewBox="0 0 16 16"><g transform="translate(1,1)" fill="#fff" stroke="#fff"><text x="0" y="13" font-size="12" font-weight="bold" font-family="Liberation Sans" stroke="none">Vs</text></g><g fill="#ACA899" stroke="#ACA899"><text x="0" y="13" font-size="12" font-weight="bold" font-family="Liberation Sans" stroke="none">Vs</text></g></svg><svg style="left:764px;top:46px" width="16" height="16" viewBox="0 0 16 16"><g transform="translate(1,1)" fill="#fff" stroke="#fff"><path d="M0 8h4" stroke-width="2" fill="none"/><path d="M4 5l3 3l-3 3z"/><text x="7" y="13" font-size="11" font-weight="bold" font-family="Liberation Sans" stroke="none">V</text></g><g fill="#ACA899" stroke="#ACA899"><path d="M0 8h4" stroke-width="2" fill="none"/><path d="M4 5l3 3l-3 3z"/><text x="7" y="13" font-size="11" font-weight="bold" font-family="Liberation Sans" stroke="none">V</text></g></svg><svg style="left:787px;top:46px" width="16" height="16" viewBox="0 0 16 16"><g transform="translate(1,1)" fill="#fff" stroke="#fff"><path d="M1 2h14M1 14h14M8 3v10M6 5l2-2l2 2M6 11l2 2l2-2" fill="none"/></g><g fill="#ACA899" stroke="#ACA899"><path d="M1 2h14M1 14h14M8 3v10M6 5l2-2l2 2M6 11l2 2l2-2" fill="none"/></g></svg><svg style="left:810px;top:46px" width="16" height="16" viewBox="0 0 16 16"><g transform="translate(1,1)" fill="#fff" stroke="#fff"><path d="M1 2h14M1 14h14" fill="none"/><text x="5" y="12" font-size="10" font-weight="bold" font-family="Liberation Sans" stroke="none">?</text></g><g fill="#ACA899" stroke="#ACA899"><path d="M1 2h14M1 14h14" fill="none"/><text x="5" y="12" font-size="10" font-weight="bold" font-family="Liberation Sans" stroke="none">?</text></g></svg><svg style="left:834px;top:46px" width="16" height="16" viewBox="0 0 16 16"><g transform="translate(1,1)" fill="#fff" stroke="#fff"><path d="M0.5 14v-12.5h13" fill="none"/><rect x="3" y="4" width="11" height="11"/></g><g fill="#ACA899" stroke="#ACA899"><path d="M0.5 14v-12.5h13" fill="none"/><rect x="3" y="4" width="11" height="11"/></g></svg><svg style="left:856px;top:46px" width="16" height="16" viewBox="0 0 16 16"><g transform="translate(1,1)" fill="#fff" stroke="#fff"><path d="M1 7h6v-1l5-5h3v6h-3v-2l-5 5v10h-6z"/></g><g fill="#ACA899" stroke="#ACA899"><path d="M1 7h6v-1l5-5h3v6h-3v-2l-5 5v10h-6z"/></g></svg><div style="left:877px;top:44px;width:1px;height:21px;background:#ACA899;"></div><div style="left:878px;top:44px;width:1px;height:21px;background:#fff;"></div><div style="left:881px;top:44px;width:1px;height:21px;background:#fff;"></div><div style="left:883px;top:44px;width:1px;height:21px;background:#ACA899;"></div><div style="left:881px;top:64px;width:3px;height:1px;background:#ACA899;"></div><svg style="left:888px;top:46px" width="16" height="16" viewBox="0 0 16 16"><rect x="1" y="9" width="8" height="7" fill="#20e020"/><rect x="6" y="1" width="10" height="11" fill="#f0f000"/><path d="M5.5 1v11.5h10" fill="none" stroke="#000080"/></svg><svg style="left:910px;top:46px" width="16" height="16" viewBox="0 0 16 16"><circle cx="8" cy="8" r="7" fill="#000090"/><circle cx="7" cy="8" r="5" fill="#0000e0"/><circle cx="6" cy="8" r="2.2" fill="#20d0f0"/></svg><svg style="left:934px;top:46px" width="16" height="16" viewBox="0 0 16 16"><rect x="6" y="1" width="10" height="12" fill="#f0f000"/><path d="M6.5 1v13M11.5 1v12M6 4.5h10M6 8.5h10M1 12.5h15" stroke="#000080"/><rect x="0" y="10" width="6" height="6" fill="#20c040"/><path d="M0 10h6M0 15h6" stroke="#e02020"/></svg><svg style="left:957px;top:46px" width="16" height="16" viewBox="0 0 16 16"><path d="M3 1h6v3h3v3h3v4h-3v4h-6v-3h-4v-5h1z" fill="#0000c0"/><rect x="8" y="2" width="4" height="4" fill="#20e0f0"/><rect x="12" y="4" width="3" height="3" fill="#000"/><rect x="3" y="7" width="4" height="4" fill="#f0f000"/><rect x="9" y="9" width="5" height="6" fill="#20e0f0"/><rect x="6" y="11" width="3" height="3" fill="#f0f000"/></svg><svg style="left:980px;top:46px" width="16" height="16" viewBox="0 0 16 16"><path d="M1 6.5h13M14.5 0v15.5h-14" stroke="#000080" fill="none"/><text x="1" y="14" font-size="7" font-weight="bold" font-family="Liberation Sans" fill="#d02020" textLength="13" lengthAdjust="spacingAndGlyphs">BAR</text></svg><svg style="left:1003px;top:46px" width="16" height="16" viewBox="0 0 16 16"><rect x="1" y="1" width="14" height="15" fill="#f0f000"/><path d="M1.5 1v15" stroke="#000080"/><path d="M8 1h6v4h-6z" fill="#20e0e0"/><path d="M10.5 1v4M2 5.5h14" stroke="#000080"/><path d="M3 8l4 4M7 8l-4 4M9 8l2 2l2-2M11 10v3" stroke="#000" fill="none"/></svg><div style="left:1023px;top:46px;width:1px;height:17px;background:#ACA899;"></div><div style="left:1024px;top:46px;width:1px;height:17px;background:#fff;"></div><div style="left:178px;top:67px;width:22px;height:21px;background:#F6F5F0;box-sizing:border-box;border-top:1px solid #ACA899;border-left:1px solid #ACA899;border-bottom:1px solid #fff;border-right:1px solid #fff"></div><div style="left:201px;top:67px;width:22px;height:21px;background:#F6F5F0;box-sizing:border-box;border-top:1px solid #ACA899;border-left:1px solid #ACA899;border-bottom:1px solid #fff;border-right:1px solid #fff"></div><svg style="left:2px;top:68px" width="16" height="16" viewBox="0 0 16 16"><rect x="0.5" y="1.5" width="14" height="13" fill="#000"/><rect x="2" y="2" width="2" height="12" fill="#8a8a20"/><rect x="11" y="2" width="2" height="12" fill="#8a8a20"/><rect x="4" y="2" width="7" height="5" fill="#ECE9D8"/><rect x="4" y="7" width="7" height="1" fill="#8a8a20"/><rect x="9" y="10" width="2" height="3" fill="#fff"/></svg><div style="left:24px;top:69px;width:1px;height:18px;background:#ACA899;"></div><div style="left:25px;top:69px;width:1px;height:18px;background:#fff;"></div><svg style="left:31px;top:68px" width="16" height="16" viewBox="0 0 16 16"><rect x="0.5" y="0.5" width="15" height="15" fill="none" stroke="#000"/><path d="M2 4.5h12M2 8.5h12M2 12.5h12" stroke="#000" stroke-dasharray="1 2"/><path d="M8 2v5M6 5l2 2l2-2M8 14v-5M6 11l2-2l2 2M3 8h4M12 8h-4M10 6l-2 2l2 2" fill="none" stroke="#000"/></svg><div style="left:54px;top:69px;width:1px;height:18px;background:#ACA899;"></div><div style="left:55px;top:69px;width:1px;height:18px;background:#fff;"></div><svg style="left:60px;top:68px" width="16" height="16" viewBox="0 0 16 16"><text x="1" y="14" font-size="13" font-family="Liberation Sans" fill="#0000c0" textLength="14" lengthAdjust="spacingAndGlyphs">ALL</text></svg><svg style="left:82px;top:68px" width="16" height="16" viewBox="0 0 16 16"><circle cx="6.5" cy="6.5" r="4.5" fill="none" stroke="#000"/><path d="M10 10l5 5" stroke="#000" stroke-width="2.6"/><path d="M10 10l5 5" stroke="#fff" stroke-width="0.8"/><path d="M4 6.5h5M6.5 4v5" stroke="#0000c0" stroke-width="1.2"/></svg><svg style="left:105px;top:68px" width="16" height="16" viewBox="0 0 16 16"><circle cx="6.5" cy="6.5" r="4.5" fill="none" stroke="#000"/><path d="M10 10l5 5" stroke="#000" stroke-width="2.6"/><path d="M10 10l5 5" stroke="#fff" stroke-width="0.8"/><path d="M4 6.5h5" stroke="#d02020" stroke-width="1.2"/></svg><svg style="left:129px;top:68px" width="16" height="16" viewBox="0 0 16 16"><path d="M1.5 1.5h9l4 4v10h-13z" fill="none" stroke="#000"/><path d="M6 4v5M4.5 5.5l1.5-1.5l1.5 1.5M10 7v5M8.5 10.5l1.5 1.5l1.5-1.5" fill="none" stroke="#000"/></svg><div style="left:152px;top:69px;width:1px;height:18px;background:#ACA899;"></div><div style="left:153px;top:69px;width:1px;height:18px;background:#fff;"></div><svg style="left:157px;top:68px" width="16" height="16" viewBox="0 0 16 16"><path d="M8 2v7M8 9l-6 5M8 9l6 5" stroke="#d02020" fill="none" stroke-width="1.1"/><text x="9" y="5" font-size="5" fill="#000080" font-family="Liberation Sans">z</text><text x="0" y="10" font-size="5" fill="#000080" font-family="Liberation Sans">x</text><text x="12" y="10" font-size="5" fill="#000080" font-family="Liberation Sans">y</text></svg><svg style="left:181px;top:68px" width="16" height="16" viewBox="0 0 16 16"><rect x="3" y="3" width="10" height="1" fill="#d02020"/><rect x="3" y="5" width="10" height="1" fill="#800000"/><rect x="3" y="7" width="10" height="1" fill="#e0e000"/><rect x="3" y="9" width="10" height="1" fill="#20c020"/><rect x="3" y="11" width="10" height="1" fill="#20e0a0"/><rect x="3" y="13" width="10" height="1" fill="#20e0f0"/></svg><svg style="left:204px;top:68px" width="16" height="16" viewBox="0 0 16 16"><text x="1" y="7" font-size="8" font-weight="bold" font-family="Liberation Sans" fill="#d02020" textLength="14" lengthAdjust="spacingAndGlyphs">PORT</text><rect x="1.5" y="8.5" width="13" height="6" fill="#fff" stroke="#0000a0"/><path d="M1 11.5h14M5 8v7M8.5 8v7M12 8v7" stroke="#0000a0"/><path d="M2 10h2M6 10h2" stroke="#20c020"/></svg><svg style="left:226px;top:68px" width="16" height="16" viewBox="0 0 16 16"><path d="M1 15l6-10v10z" fill="#c00020"/><path d="M7 5v10" stroke="#000080"/><path d="M9 15v-6l6 6z" fill="none" stroke="#000080"/><path d="M9 6q2-4 5-1M9 6h3M9 6v-3" fill="none" stroke="#000080"/></svg><div style="left:250px;top:69px;width:1px;height:18px;background:#ACA899;"></div><div style="left:251px;top:69px;width:1px;height:18px;background:#fff;"></div><svg style="left:256px;top:68px" width="16" height="16" viewBox="0 0 16 16"><path d="M1 6q3-4 6 0t8 0v2q-4 4-8 0t-6 0z" fill="#d02020"/><path d="M1 9q3-4 6 0t8 0v2q-4 4-8 0t-6 0z" fill="#20c020"/><path d="M1 12q3-4 6 0t8 0v2q-4 4-8 0t-6 0z" fill="#0000c0"/></svg><svg style="left:279px;top:68px" width="16" height="16" viewBox="0 0 16 16"><g transform="translate(1,1)" fill="#fff" stroke="#fff"><path d="M1 6q1-5 5-4l3 3q2-3 5 0v4l-3 2h-10z"/><path d="M3 13h10M11 11l2 2l-2 2" fill="none"/></g><g fill="#ACA899" stroke="#ACA899"><path d="M1 6q1-5 5-4l3 3q2-3 5 0v4l-3 2h-10z"/><path d="M3 13h10M11 11l2 2l-2 2" fill="none"/></g></svg><div style="left:302px;top:69px;width:1px;height:18px;background:#ACA899;"></div><div style="left:303px;top:69px;width:1px;height:18px;background:#fff;"></div><svg style="left:308px;top:68px" width="16" height="16" viewBox="0 0 16 16"><g transform="translate(1,1)" fill="#fff" stroke="#fff"><path d="M2 1h12v14h-12z"/></g><g fill="#ACA899" stroke="#ACA899"><path d="M2 1h12v14h-12z"/></g><path d="M5 4h2v3h3v2h-3M9 11h3" stroke="#ECE9D8" fill="none"/></svg><div style="left:331px;top:69px;width:1px;height:18px;background:#ACA899;"></div><div style="left:332px;top:69px;width:1px;height:18px;background:#fff;"></div><svg style="left:337px;top:68px" width="16" height="16" viewBox="0 0 16 16"><circle cx="8" cy="6" r="5" fill="#f0f000"/><path d="M5 11h6M5 13h6M6 15h4" stroke="#404000"/><path d="M5 12l6 0" stroke="#f0f000"/></svg><div style="left:360px;top:69px;width:1px;height:18px;background:#ACA899;"></div><div style="left:361px;top:69px;width:1px;height:18px;background:#fff;"></div><svg style="left:366px;top:68px" width="16" height="16" viewBox="0 0 16 16"><rect x="0.5" y="1.5" width="12" height="9" fill="#000080" stroke="#000"/><rect x="3.5" y="4.5" width="12" height="9" fill="#a00020" stroke="#000"/><rect x="2" y="3" width="10" height="7" fill="#f020f0"/></svg><svg style="left:389px;top:68px" width="16" height="16" viewBox="0 0 16 16"><path d="M1 7l5-5l6 6l-5 5z" fill="#fff" stroke="#000"/><path d="M6 2l-2-2M7 5v3" stroke="#000"/><rect x="9.5" y="8.5" width="6" height="7" fill="#106080" stroke="#000"/><path d="M10 11h5" stroke="#a0e0f0"/></svg><div style="left:1px;top:20px;width:1px;height:22px;background:#fff;"></div><div style="left:3px;top:20px;width:1px;height:22px;background:#ACA899;"></div><div style="left:1px;top:41px;width:3px;height:1px;background:#ACA899;"></div><div style="left:1px;top:44px;width:1px;height:22px;background:#fff;"></div><div style="left:3px;top:44px;width:1px;height:22px;background:#ACA899;"></div><div style="left:1px;top:65px;width:3px;height:1px;background:#ACA899;"></div><div style="left:0px;top:91px;width:156px;height:1px;background:#ACA899;"></div><div style="left:0px;top:91px;width:1px;height:20px;background:#ACA899;"></div><div style="left:0px;top:110px;width:156px;height:1px;background:#fff;"></div><div style="left:155px;top:91px;width:1px;height:20px;background:#fff;"></div><span style="left:1px;top:94px;color:#000;">E-total, dBi(Gain)</span><div style="left:0px;top:113px;width:156px;height:667px;background:#fff;"></div><div style="left:0px;top:113px;width:156px;height:1px;background:#ACA899;"></div><div style="left:0px;top:113px;width:1px;height:667px;background:#ACA899;"></div><div style="left:0px;top:779px;width:156px;height:1px;background:#fff;"></div><div style="left:155px;top:113px;width:1px;height:667px;background:#fff;"></div><div style="left:1px;top:114px;width:154px;height:1px;background:#716F64;"></div><div style="left:1px;top:114px;width:1px;height:665px;background:#716F64;"></div><div style="left:154px;top:114px;width:1px;height:665px;background:#ECE9D8;"></div><div style="left:1px;top:778px;width:154px;height:1px;background:#ECE9D8;"></div><div style="left:2px;top:115px;width:40px;height:20px;background:#FF0000;"></div><span style="left:51px;top:119px;color:#000080;">10.8405</span><div style="left:2px;top:135px;width:40px;height:20px;background:#FF4400;"></div><span style="left:51px;top:139px;color:#000080;">8.8405</span><div style="left:2px;top:155px;width:40px;height:20px;background:#FF8800;"></div><span style="left:51px;top:159px;color:#000080;">6.8405</span><div style="left:2px;top:175px;width:40px;height:20px;background:#FFCC00;"></div><span style="left:51px;top:179px;color:#000080;">4.8405</span><div style="left:2px;top:195px;width:40px;height:20px;background:#EEFF00;"></div><span style="left:51px;top:199px;color:#000080;">2.8405</span><div style="left:2px;top:215px;width:40px;height:20px;background:#AAFF00;"></div><span style="left:51px;top:219px;color:#000080;">0.8405</span><div style="left:2px;top:235px;width:40px;height:20px;background:#66FF00;"></div><span style="left:51px;top:239px;color:#000080;">-1.1595</span><div style="left:2px;top:255px;width:40px;height:20px;background:#22FF00;"></div><span style="left:51px;top:259px;color:#000080;">-3.1595</span><div style="left:2px;top:275px;width:40px;height:20px;background:#00EE22;"></div><span style="left:51px;top:279px;color:#000080;">-5.1595</span><div style="left:2px;top:295px;width:40px;height:20px;background:#00EE66;"></div><span style="left:51px;top:299px;color:#000080;">-7.1595</span><div style="left:2px;top:315px;width:40px;height:20px;background:#00EEAA;"></div><span style="left:51px;top:319px;color:#000080;">-9.1595</span><div style="left:2px;top:335px;width:40px;height:20px;background:#00FFEE;"></div><span style="left:51px;top:339px;color:#000080;">-11.1595</span><div style="left:2px;top:355px;width:40px;height:20px;background:#00CCFF;"></div><span style="left:51px;top:359px;color:#000080;">-13.1595</span><div style="left:2px;top:375px;width:40px;height:20px;background:#0088FF;"></div><span style="left:51px;top:379px;color:#000080;">-15.1595</span><div style="left:2px;top:395px;width:40px;height:20px;background:#0044FF;"></div><span style="left:51px;top:399px;color:#000080;">-17.1595</span><div style="left:2px;top:415px;width:40px;height:20px;background:#0000FF;"></div><div style="left:2px;top:415px;width:40px;height:20px;background:transparent;border:1px dotted #E8E090;box-sizing:border-box"></div><div style="left:51px;top:415px;width:103px;height:20px;background:#0000FF;"></div><span style="left:51px;top:419px;color:#fff;">-19.1595</span><div style="left:0px;top:782px;width:158px;height:1px;background:#ACA899;"></div><div style="left:0px;top:782px;width:1px;height:59px;background:#ACA899;"></div><div style="left:157px;top:782px;width:1px;height:59px;background:#fff;"></div><div style="left:0px;top:840px;width:158px;height:1px;background:#fff;"></div><span style="left:1px;top:784px;color:#000;">Pattern ID: None</span><span style="left:1px;top:797px;color:#000;">Freq: 2.45 (GHz)</span><span style="left:1px;top:810px;color:#000;">Magnitude: E-total</span><span style="left:1px;top:823px;color:#000;">Color: dBi(Gain)</span><div style="left:158px;top:90px;width:1px;height:752px;background:#ACA899;"></div><div style="left:159px;top:90px;width:1088px;height:1px;background:#5E7A7A;"></div><div style="left:159px;top:90px;width:1px;height:752px;background:#5E7A7A;"></div><div style="left:160px;top:91px;width:1086px;height:751px;background:#99E3FA;"></div><div style="left:159px;top:842px;width:1089px;height:1px;background:#fff;"></div><div style="left:1246px;top:90px;width:1px;height:753px;background:#fff;"></div><svg style="left:160px;top:91px" width="1086" height="751" viewBox="160 91 1086 751"><clipPath id="pc"><polygon points="1037.0,165.0 935.0,305.0 922.0,830.0 1023.0,690.0"/></clipPath><polygon points="1037.0,165.0 935.0,305.0 922.0,830.0 1023.0,690.0" fill="#1c1f22"/><g clip-path="url(#pc)"><path d="M938.9,299.6L925.9,824.6M942.8,294.2L929.8,819.2M946.8,288.8L933.7,813.8M950.7,283.5L937.5,808.5M954.6,278.1L941.4,803.1M958.5,272.7L945.3,797.7M962.5,267.3L949.2,792.3M966.4,261.9L953.1,786.9M970.3,256.5L957.0,781.5M974.2,251.2L960.8,776.2M978.2,245.8L964.7,770.8M982.1,240.4L968.6,765.4M986.0,235.0L972.5,760.0M989.9,229.6L976.4,754.6M993.8,224.2L980.3,749.2M997.8,218.8L984.2,743.8M1001.7,213.5L988.0,738.5M1005.6,208.1L991.9,733.1M1009.5,202.7L995.8,727.7M1013.5,197.3L999.7,722.3M1017.4,191.9L1003.6,716.9M1021.3,186.5L1007.5,711.5M1025.2,181.2L1011.3,706.2M1029.2,175.8L1015.2,700.8M1033.1,170.4L1019.1,695.4M915,150.0L1045,-28.1M915,162.0L1045,-16.1M915,174.0L1045,-4.1M915,186.0L1045,7.9M915,198.0L1045,19.9M915,210.0L1045,31.9M915,222.0L1045,43.9M915,234.0L1045,55.9M915,246.0L1045,67.9M915,258.0L1045,79.9M915,270.0L1045,91.9M915,282.0L1045,103.9M915,294.0L1045,115.9M915,306.0L1045,127.9M915,318.0L1045,139.9M915,330.0L1045,151.9M915,342.0L1045,163.9M915,354.0L1045,175.9M915,366.0L1045,187.9M915,378.0L1045,199.9M915,390.0L1045,211.9M915,402.0L1045,223.9M915,414.0L1045,235.9M915,426.0L1045,247.9M915,438.0L1045,259.9M915,450.0L1045,271.9M915,462.0L1045,283.9M915,474.0L1045,295.9M915,486.0L1045,307.9M915,498.0L1045,319.9M915,510.0L1045,331.9M915,522.0L1045,343.9M915,534.0L1045,355.9M915,546.0L1045,367.9M915,558.0L1045,379.9M915,570.0L1045,391.9M915,582.0L1045,403.9M915,594.0L1045,415.9M915,606.0L1045,427.9M915,618.0L1045,439.9M915,630.0L1045,451.9M915,642.0L1045,463.9M915,654.0L1045,475.9M915,666.0L1045,487.9M915,678.0L1045,499.9M915,690.0L1045,511.9M915,702.0L1045,523.9M915,714.0L1045,535.9M915,726.0L1045,547.9M915,738.0L1045,559.9M915,750.0L1045,571.9M915,762.0L1045,583.9M915,774.0L1045,595.9M915,786.0L1045,607.9M915,798.0L1045,619.9M915,810.0L1045,631.9M915,822.0L1045,643.9M915,834.0L1045,655.9M915,846.0L1045,667.9M915,858.0L1045,679.9M915,870.0L1045,691.9M915,882.0L1045,703.9M915,894.0L1045,715.9M915,906.0L1045,727.9M915,918.0L1045,739.9M915,930.0L1045,751.9M915,942.0L1045,763.9M915,954.0L1045,775.9M915,966.0L1045,787.9M915,978.0L1045,799.9M915,990.0L1045,811.9M915,1002.0L1045,823.9M915,1014.0L1045,835.9M915,1026.0L1045,847.9M915,1038.0L1045,859.9" stroke="#6a8c9c" stroke-width="0.9" fill="none"/></g><polygon points="1037.0,165.0 935.0,305.0 922.0,830.0 1023.0,690.0" fill="none" stroke="#5a7a8a" stroke-width="1"/><path d="M463.5,466.0C463.5,462.5 463.6,455.7 463.9,450.0C464.2,444.3 464.9,437.2 465.5,432.0C466.1,426.8 466.3,424.0 467.5,418.8C468.7,413.6 470.4,406.3 472.8,401.0C475.2,395.7 477.6,393.3 481.7,386.8C485.8,380.3 492.4,368.7 497.7,361.9C503.0,355.1 506.6,351.9 513.7,345.8C520.8,339.7 527.6,332.5 540.4,325.4C553.1,318.3 573.3,308.9 590.2,303.1C607.1,297.3 627.4,293.1 641.8,290.7C656.2,288.3 665.7,289.0 676.8,288.7C687.9,288.4 699.0,288.5 708.2,289.1C717.4,289.7 723.1,291.1 731.8,292.3C740.4,293.5 750.1,294.2 760.1,296.5C770.1,298.8 783.0,303.1 791.6,306.0C800.2,308.9 803.9,310.6 812.0,313.8C820.1,317.0 831.8,321.4 840.0,325.2C848.2,329.0 853.0,332.4 861.0,336.8C869.0,341.2 879.5,345.8 888.2,351.4C896.9,357.0 906.0,365.1 913.3,370.3C920.6,375.5 926.2,377.9 932.1,382.8C938.0,387.7 943.3,393.0 948.9,399.6C954.5,406.2 960.8,414.9 965.7,422.6C970.6,430.3 975.1,439.1 978.2,445.7C981.3,452.3 983.1,456.7 984.5,462.4C985.9,468.1 986.2,474.6 986.6,480.0C987.0,485.4 987.3,491.0 987.0,495.0C986.7,499.0 985.7,499.1 984.6,503.8C983.5,508.5 982.9,517.0 980.5,523.0C978.1,529.0 974.6,533.6 970.0,540.0C965.4,546.4 960.0,554.3 953.0,561.6C946.0,568.9 935.1,577.6 928.2,583.6C921.3,589.6 921.2,591.9 911.6,597.4C902.0,602.9 886.4,610.7 870.3,616.7C854.2,622.7 833.6,628.9 815.2,633.2C796.8,637.6 778.4,641.0 760.0,642.8C741.6,644.6 722.9,645.0 705.0,644.2C687.1,643.4 668.8,640.9 652.8,637.8C636.8,634.7 621.3,630.1 608.8,625.7C596.3,621.3 586.8,615.6 578.0,611.4C569.2,607.2 563.7,605.5 556.0,600.4C548.3,595.3 538.9,586.2 531.9,580.7C524.9,575.2 520.5,574.1 514.3,567.5C508.1,560.9 499.9,548.1 494.6,541.1C489.3,534.1 485.6,530.8 482.5,525.7C479.4,520.6 478.3,516.5 475.9,510.3C473.5,504.1 470.2,495.0 468.2,488.4C466.2,481.8 464.6,474.5 463.8,470.8C463.0,467.1 463.5,469.5 463.5,466.0Z" fill="#3a1a00"/><polygon points="725.2,291.4 725.2,291.4 702.6,289.0 702.4,289.0" fill="#411a00" stroke="#411a00" stroke-width="0.5"/><polygon points="702.4,289.0 702.6,289.0 680.1,288.8 679.8,288.7" fill="#431800" stroke="#431800" stroke-width="0.5"/><polygon points="679.8,288.7 680.1,288.8 657.9,289.9 657.5,289.8" fill="#4c1700" stroke="#4c1700" stroke-width="0.5"/><polygon points="657.5,289.8 657.9,289.9 636.3,292.2 635.7,292.2" fill="#4f1300" stroke="#4f1300" stroke-width="0.5"/><polygon points="635.7,292.2 636.3,292.2 615.3,297.3 614.6,297.2" fill="#571100" stroke="#571100" stroke-width="0.5"/><polygon points="614.6,297.2 615.3,297.3 595.2,302.2 594.4,302.1" fill="#5a0d00" stroke="#5a0d00" stroke-width="0.5"/><polygon points="594.4,302.1 595.2,302.2 576.1,309.9 575.1,309.9" fill="#630b00" stroke="#630b00" stroke-width="0.5"/><polygon points="575.1,309.9 576.1,309.9 558.1,318.1 557.0,318.0" fill="#660a00" stroke="#660a00" stroke-width="0.5"/><polygon points="557.0,318.0 558.1,318.1 541.3,325.8 540.2,325.6" fill="#6f0900" stroke="#6f0900" stroke-width="0.5"/><polygon points="540.2,325.6 541.3,325.8 526.0,337.5 524.7,337.4" fill="#720700" stroke="#720700" stroke-width="0.5"/><polygon points="524.7,337.4 526.0,337.5 512.2,348.7 510.8,348.7" fill="#7a0600" stroke="#7a0600" stroke-width="0.5"/><polygon points="510.8,348.7 512.2,348.7 500.0,361.3 498.6,361.0" fill="#7d0400" stroke="#7d0400" stroke-width="0.5"/><polygon points="498.6,361.0 500.0,361.3 489.5,376.8 488.0,377.0" fill="#830300" stroke="#830300" stroke-width="0.5"/><polygon points="488.0,377.0 489.5,376.8 480.8,391.1 479.3,390.7" fill="#840200" stroke="#840200" stroke-width="0.5"/><polygon points="479.3,390.7 480.8,391.1 474.0,403.2 472.4,402.3" fill="#850100" stroke="#850100" stroke-width="0.5"/><polygon points="472.4,402.3 474.0,403.2 469.1,419.5 467.5,419.0" fill="#840000" stroke="#840000" stroke-width="0.5"/><polygon points="467.5,419.0 469.1,419.5 466.1,437.9 464.5,443.3" fill="#7f0000" stroke="#7f0000" stroke-width="0.5"/><polygon points="464.5,443.3 466.1,437.9 465.1,456.1 463.5,466.0" fill="#7b0000" stroke="#7b0000" stroke-width="0.5"/><polygon points="463.5,466.0 465.1,456.1 466.1,470.1 464.5,473.6" fill="#700000" stroke="#700000" stroke-width="0.5"/><polygon points="464.5,473.6 466.1,470.1 469.1,484.9 467.5,485.5" fill="#6a0000" stroke="#6a0000" stroke-width="0.5"/><polygon points="467.5,485.5 469.1,484.9 474.0,500.8 472.4,500.4" fill="#5b0000" stroke="#5b0000" stroke-width="0.5"/><polygon points="472.4,500.4 474.0,500.8 480.8,518.9 479.3,518.2" fill="#550100" stroke="#550100" stroke-width="0.5"/><polygon points="479.3,518.2 480.8,518.9 489.5,532.4 488.0,532.7" fill="#460100" stroke="#460100" stroke-width="0.5"/><polygon points="488.0,532.7 489.5,532.4 500.0,546.6 498.6,546.4" fill="#410100" stroke="#410100" stroke-width="0.5"/><polygon points="498.6,546.4 500.0,546.6 512.2,563.3 510.8,562.9" fill="#350200" stroke="#350200" stroke-width="0.5"/><polygon points="510.8,562.9 512.2,563.3 526.0,575.2 524.7,575.3" fill="#320200" stroke="#320200" stroke-width="0.5"/><polygon points="524.7,575.3 526.0,575.2 541.3,587.6 540.2,587.5" fill="#290200" stroke="#290200" stroke-width="0.5"/><polygon points="540.2,587.5 541.3,587.6 558.1,600.8 557.0,600.9" fill="#270300" stroke="#270300" stroke-width="0.5"/><polygon points="557.0,600.9 558.1,600.8 576.1,610.0 575.1,610.0" fill="#230300" stroke="#230300" stroke-width="0.5"/><polygon points="575.1,610.0 576.1,610.0 595.2,619.1 594.4,619.0" fill="#230400" stroke="#230400" stroke-width="0.5"/><polygon points="594.4,619.0 595.2,619.1 615.3,627.3 614.6,627.3" fill="#230500" stroke="#230500" stroke-width="0.5"/><polygon points="614.6,627.3 615.3,627.3 636.3,633.1 635.7,633.1" fill="#230700" stroke="#230700" stroke-width="0.5"/><polygon points="635.7,633.1 636.3,633.1 657.9,638.4 657.5,638.4" fill="#230800" stroke="#230800" stroke-width="0.5"/><polygon points="657.5,638.4 657.9,638.4 680.1,641.1 679.8,641.1" fill="#230a00" stroke="#230a00" stroke-width="0.5"/><polygon points="679.8,641.1 680.1,641.1 702.6,643.9 702.4,643.9" fill="#230c00" stroke="#230c00" stroke-width="0.5"/><polygon points="702.4,643.9 702.6,643.9 725.2,643.7 725.2,643.7" fill="#230e00" stroke="#230e00" stroke-width="0.5"/><polygon points="725.2,291.4 725.2,291.4 703.0,289.1 702.6,289.0" fill="#411b00" stroke="#411b00" stroke-width="0.5"/><polygon points="702.6,289.0 703.0,289.1 680.9,288.9 680.1,288.8" fill="#451800" stroke="#451800" stroke-width="0.5"/><polygon points="680.1,288.8 680.9,288.9 659.2,290.0 657.9,289.9" fill="#4e1700" stroke="#4e1700" stroke-width="0.5"/><polygon points="657.9,289.9 659.2,290.0 638.0,292.2 636.3,292.2" fill="#521400" stroke="#521400" stroke-width="0.5"/><polygon points="636.3,292.2 638.0,292.2 617.4,297.4 615.3,297.3" fill="#5c1200" stroke="#5c1200" stroke-width="0.5"/><polygon points="615.3,297.3 617.4,297.4 597.7,302.6 595.2,302.2" fill="#600e00" stroke="#600e00" stroke-width="0.5"/><polygon points="595.2,302.2 597.7,302.6 578.9,310.0 576.1,309.9" fill="#6a0c00" stroke="#6a0c00" stroke-width="0.5"/><polygon points="576.1,309.9 578.9,310.0 561.2,318.5 558.1,318.1" fill="#6f0b00" stroke="#6f0b00" stroke-width="0.5"/><polygon points="558.1,318.1 561.2,318.5 544.8,326.6 541.3,325.8" fill="#790a00" stroke="#790a00" stroke-width="0.5"/><polygon points="541.3,325.8 544.8,326.6 529.8,337.6 526.0,337.5" fill="#7d0800" stroke="#7d0800" stroke-width="0.5"/><polygon points="526.0,337.5 529.8,337.6 516.2,349.2 512.2,348.7" fill="#870700" stroke="#870700" stroke-width="0.5"/><polygon points="512.2,348.7 516.2,349.2 504.3,362.0 500.0,361.3" fill="#8b0500" stroke="#8b0500" stroke-width="0.5"/><polygon points="500.0,361.3 504.3,362.0 494.0,376.1 489.5,376.8" fill="#920400" stroke="#920400" stroke-width="0.5"/><polygon points="489.5,376.8 494.0,376.1 485.5,391.9 480.8,391.1" fill="#940300" stroke="#940300" stroke-width="0.5"/><polygon points="480.8,391.1 485.5,391.9 478.8,406.0 474.0,403.2" fill="#970200" stroke="#970200" stroke-width="0.5"/><polygon points="474.0,403.2 478.8,406.0 473.9,419.2 469.1,419.5" fill="#960100" stroke="#960100" stroke-width="0.5"/><polygon points="469.1,419.5 473.9,419.2 471.0,435.3 466.1,437.9" fill="#910000" stroke="#910000" stroke-width="0.5"/><polygon points="466.1,437.9 471.0,435.3 470.1,451.9 465.1,456.1" fill="#8e0000" stroke="#8e0000" stroke-width="0.5"/><polygon points="465.1,456.1 470.1,451.9 471.0,468.1 466.1,470.1" fill="#820000" stroke="#820000" stroke-width="0.5"/><polygon points="466.1,470.1 471.0,468.1 473.9,484.7 469.1,484.9" fill="#7c0000" stroke="#7c0000" stroke-width="0.5"/><polygon points="469.1,484.9 473.9,484.7 478.8,502.5 474.0,500.8" fill="#6b0100" stroke="#6b0100" stroke-width="0.5"/><polygon points="474.0,500.8 478.8,502.5 485.5,518.6 480.8,518.9" fill="#640100" stroke="#640100" stroke-width="0.5"/><polygon points="480.8,518.9 485.5,518.6 494.0,531.9 489.5,532.4" fill="#520100" stroke="#520100" stroke-width="0.5"/><polygon points="489.5,532.4 494.0,531.9 504.3,547.4 500.0,546.6" fill="#4c0200" stroke="#4c0200" stroke-width="0.5"/><polygon points="500.0,546.6 504.3,547.4 516.2,563.6 512.2,563.3" fill="#3d0200" stroke="#3d0200" stroke-width="0.5"/><polygon points="512.2,563.3 516.2,563.6 529.8,575.0 526.0,575.2" fill="#380300" stroke="#380300" stroke-width="0.5"/><polygon points="526.0,575.2 529.8,575.0 544.8,588.1 541.3,587.6" fill="#2e0300" stroke="#2e0300" stroke-width="0.5"/><polygon points="541.3,587.6 544.8,588.1 561.2,600.6 558.1,600.8" fill="#2b0300" stroke="#2b0300" stroke-width="0.5"/><polygon points="558.1,600.8 561.2,600.6 578.9,610.0 576.1,610.0" fill="#250300" stroke="#250300" stroke-width="0.5"/><polygon points="576.1,610.0 578.9,610.0 597.7,619.2 595.2,619.1" fill="#240400" stroke="#240400" stroke-width="0.5"/><polygon points="595.2,619.1 597.7,619.2 617.4,627.2 615.3,627.3" fill="#230500" stroke="#230500" stroke-width="0.5"/><polygon points="615.3,627.3 617.4,627.2 638.0,633.2 636.3,633.1" fill="#230700" stroke="#230700" stroke-width="0.5"/><polygon points="636.3,633.1 638.0,633.2 659.2,638.3 657.9,638.4" fill="#230900" stroke="#230900" stroke-width="0.5"/><polygon points="657.9,638.4 659.2,638.3 680.9,641.1 680.1,641.1" fill="#230a00" stroke="#230a00" stroke-width="0.5"/><polygon points="680.1,641.1 680.9,641.1 703.0,643.9 702.6,643.9" fill="#230c00" stroke="#230c00" stroke-width="0.5"/><polygon points="702.6,643.9 703.0,643.9 725.2,643.7 725.2,643.7" fill="#230e00" stroke="#230e00" stroke-width="0.5"/><polygon points="725.2,291.4 725.2,291.4 703.7,289.1 703.0,289.1" fill="#431b00" stroke="#431b00" stroke-width="0.5"/><polygon points="703.0,289.1 703.7,289.1 682.3,289.1 680.9,288.9" fill="#471900" stroke="#471900" stroke-width="0.5"/><polygon points="680.9,288.9 682.3,289.1 661.3,290.3 659.2,290.0" fill="#541a00" stroke="#541a00" stroke-width="0.5"/><polygon points="659.2,290.0 661.3,290.3 640.8,292.2 638.0,292.2" fill="#591700" stroke="#591700" stroke-width="0.5"/><polygon points="638.0,292.2 640.8,292.2 620.8,297.7 617.4,297.4" fill="#681500" stroke="#681500" stroke-width="0.5"/><polygon points="617.4,297.4 620.8,297.7 601.7,303.2 597.7,302.6" fill="#6d1100" stroke="#6d1100" stroke-width="0.5"/><polygon points="597.7,302.6 601.7,303.2 583.5,310.0 578.9,310.0" fill="#7d0f00" stroke="#7d0f00" stroke-width="0.5"/><polygon points="578.9,310.0 583.5,310.0 566.4,319.0 561.2,318.5" fill="#830d00" stroke="#830d00" stroke-width="0.5"/><polygon points="561.2,318.5 566.4,319.0 550.6,327.8 544.8,326.6" fill="#930c00" stroke="#930c00" stroke-width="0.5"/><polygon points="544.8,326.6 550.6,327.8 536.0,337.6 529.8,337.6" fill="#990b00" stroke="#990b00" stroke-width="0.5"/><polygon points="529.8,337.6 536.0,337.6 522.9,350.0 516.2,349.2" fill="#a80a00" stroke="#a80a00" stroke-width="0.5"/><polygon points="516.2,349.2 522.9,350.0 511.3,362.4 504.3,362.0" fill="#ad0800" stroke="#ad0800" stroke-width="0.5"/><polygon points="504.3,362.0 511.3,362.4 501.3,375.9 494.0,376.1" fill="#ba0600" stroke="#ba0600" stroke-width="0.5"/><polygon points="494.0,376.1 501.3,375.9 493.1,391.1 485.5,391.9" fill="#bd0500" stroke="#bd0500" stroke-width="0.5"/><polygon points="485.5,391.9 493.1,391.1 486.6,407.2 478.8,406.0" fill="#c30400" stroke="#c30400" stroke-width="0.5"/><polygon points="478.8,406.0 486.6,407.2 481.9,422.9 473.9,419.2" fill="#c30300" stroke="#c30300" stroke-width="0.5"/><polygon points="473.9,419.2 481.9,422.9 479.1,438.1 471.0,435.3" fill="#c00200" stroke="#c00200" stroke-width="0.5"/><polygon points="471.0,435.3 479.1,438.1 478.2,454.0 470.1,451.9" fill="#bc0100" stroke="#bc0100" stroke-width="0.5"/><polygon points="470.1,451.9 478.2,454.0 479.1,470.6 471.0,468.1" fill="#af0100" stroke="#af0100" stroke-width="0.5"/><polygon points="471.0,468.1 479.1,470.6 481.9,487.9 473.9,484.7" fill="#a80100" stroke="#a80100" stroke-width="0.5"/><polygon points="473.9,484.7 481.9,487.9 486.6,502.9 478.8,502.5" fill="#930200" stroke="#930200" stroke-width="0.5"/><polygon points="478.8,502.5 486.6,502.9 493.1,517.1 485.5,518.6" fill="#8a0200" stroke="#8a0200" stroke-width="0.5"/><polygon points="485.5,518.6 493.1,517.1 501.3,532.5 494.0,531.9" fill="#720300" stroke="#720300" stroke-width="0.5"/><polygon points="494.0,531.9 501.3,532.5 511.3,549.3 504.3,547.4" fill="#6a0300" stroke="#6a0300" stroke-width="0.5"/><polygon points="504.3,547.4 511.3,549.3 522.9,562.7 516.2,563.6" fill="#550400" stroke="#550400" stroke-width="0.5"/><polygon points="516.2,563.6 522.9,562.7 536.0,575.2 529.8,575.0" fill="#4e0400" stroke="#4e0400" stroke-width="0.5"/><polygon points="529.8,575.0 536.0,575.2 550.6,589.0 544.8,588.1" fill="#3d0400" stroke="#3d0400" stroke-width="0.5"/><polygon points="544.8,588.1 550.6,589.0 566.4,600.3 561.2,600.6" fill="#380400" stroke="#380400" stroke-width="0.5"/><polygon points="561.2,600.6 566.4,600.3 583.5,610.0 578.9,610.0" fill="#2c0400" stroke="#2c0400" stroke-width="0.5"/><polygon points="578.9,610.0 583.5,610.0 601.7,619.6 597.7,619.2" fill="#290500" stroke="#290500" stroke-width="0.5"/><polygon points="597.7,619.2 601.7,619.6 620.8,627.1 617.4,627.2" fill="#230500" stroke="#230500" stroke-width="0.5"/><polygon points="617.4,627.2 620.8,627.1 640.8,633.3 638.0,633.2" fill="#230700" stroke="#230700" stroke-width="0.5"/><polygon points="638.0,633.2 640.8,633.3 661.3,638.2 659.2,638.3" fill="#230900" stroke="#230900" stroke-width="0.5"/><polygon points="659.2,638.3 661.3,638.2 682.3,641.1 680.9,641.1" fill="#230b00" stroke="#230b00" stroke-width="0.5"/><polygon points="680.9,641.1 682.3,641.1 703.7,644.0 703.0,643.9" fill="#230c00" stroke="#230c00" stroke-width="0.5"/><polygon points="703.0,643.9 703.7,644.0 725.2,643.7 725.2,643.7" fill="#230e00" stroke="#230e00" stroke-width="0.5"/><polygon points="725.2,291.4 725.2,291.4 704.7,289.2 703.7,289.1" fill="#431b00" stroke="#431b00" stroke-width="0.5"/><polygon points="703.7,289.1 704.7,289.2 684.3,289.3 682.3,289.1" fill="#481a00" stroke="#481a00" stroke-width="0.5"/><polygon points="682.3,289.1 684.3,289.3 664.2,290.6 661.3,290.3" fill="#561b00" stroke="#561b00" stroke-width="0.5"/><polygon points="661.3,290.3 664.2,290.6 644.6,292.7 640.8,292.2" fill="#5c1800" stroke="#5c1800" stroke-width="0.5"/><polygon points="640.8,292.2 644.6,292.7 625.6,297.9 620.8,297.7" fill="#6c1700" stroke="#6c1700" stroke-width="0.5"/><polygon points="620.8,297.7 625.6,297.9 607.3,303.9 601.7,303.2" fill="#721300" stroke="#721300" stroke-width="0.5"/><polygon points="601.7,303.2 607.3,303.9 590.0,310.0 583.5,310.0" fill="#831000" stroke="#831000" stroke-width="0.5"/><polygon points="583.5,310.0 590.0,310.0 573.7,319.5 566.4,319.0" fill="#8a0f00" stroke="#8a0f00" stroke-width="0.5"/><polygon points="566.4,319.0 573.7,319.5 558.5,329.0 550.6,327.8" fill="#9c0e00" stroke="#9c0e00" stroke-width="0.5"/><polygon points="550.6,327.8 558.5,329.0 544.6,338.5 536.0,337.6" fill="#a30d00" stroke="#a30d00" stroke-width="0.5"/><polygon points="536.0,337.6 544.6,338.5 532.1,350.4 522.9,350.0" fill="#b30c00" stroke="#b30c00" stroke-width="0.5"/><polygon points="522.9,350.0 532.1,350.4 521.0,363.5 511.3,362.4" fill="#b90a00" stroke="#b90a00" stroke-width="0.5"/><polygon points="511.3,362.4 521.0,363.5 511.5,376.9 501.3,375.9" fill="#c70900" stroke="#c70900" stroke-width="0.5"/><polygon points="501.3,375.9 511.5,376.9 503.6,391.2 493.1,391.1" fill="#cb0700" stroke="#cb0700" stroke-width="0.5"/><polygon points="493.1,391.1 503.6,391.2 497.5,405.6 486.6,407.2" fill="#d10600" stroke="#d10600" stroke-width="0.5"/><polygon points="486.6,407.2 497.5,405.6 493.0,422.2 481.9,422.9" fill="#d20500" stroke="#d20500" stroke-width="0.5"/><polygon points="481.9,422.9 493.0,422.2 490.3,438.5 479.1,438.1" fill="#cf0400" stroke="#cf0400" stroke-width="0.5"/><polygon points="479.1,438.1 490.3,438.5 489.4,454.6 478.2,454.0" fill="#cc0300" stroke="#cc0300" stroke-width="0.5"/><polygon points="478.2,454.0 489.4,454.6 490.3,470.6 479.1,470.6" fill="#be0300" stroke="#be0300" stroke-width="0.5"/><polygon points="479.1,470.6 490.3,470.6 493.0,486.1 481.9,487.9" fill="#b60300" stroke="#b60300" stroke-width="0.5"/><polygon points="481.9,487.9 493.0,486.1 497.5,501.6 486.6,502.9" fill="#a00300" stroke="#a00300" stroke-width="0.5"/><polygon points="486.6,502.9 497.5,501.6 503.6,518.0 493.1,517.1" fill="#970400" stroke="#970400" stroke-width="0.5"/><polygon points="493.1,517.1 503.6,518.0 511.5,534.9 501.3,532.5" fill="#7e0400" stroke="#7e0400" stroke-width="0.5"/><polygon points="501.3,532.5 511.5,534.9 521.0,549.2 511.3,549.3" fill="#750500" stroke="#750500" stroke-width="0.5"/><polygon points="511.3,549.3 521.0,549.2 532.1,562.2 522.9,562.7" fill="#5e0500" stroke="#5e0500" stroke-width="0.5"/><polygon points="522.9,562.7 532.1,562.2 544.6,576.1 536.0,575.2" fill="#550500" stroke="#550500" stroke-width="0.5"/><polygon points="536.0,575.2 544.6,576.1 558.5,589.9 550.6,589.0" fill="#430500" stroke="#430500" stroke-width="0.5"/><polygon points="550.6,589.0 558.5,589.9 573.7,600.2 566.4,600.3" fill="#3c0500" stroke="#3c0500" stroke-width="0.5"/><polygon points="566.4,600.3 573.7,600.2 590.0,610.2 583.5,610.0" fill="#2f0500" stroke="#2f0500" stroke-width="0.5"/><polygon points="583.5,610.0 590.0,610.2 607.3,620.1 601.7,619.6" fill="#2b0500" stroke="#2b0500" stroke-width="0.5"/><polygon points="601.7,619.6 607.3,620.1 625.6,627.0 620.8,627.1" fill="#250600" stroke="#250600" stroke-width="0.5"/><polygon points="620.8,627.1 625.6,627.0 644.6,633.4 640.8,633.3" fill="#230700" stroke="#230700" stroke-width="0.5"/><polygon points="640.8,633.3 644.6,633.4 664.2,638.0 661.3,638.2" fill="#230900" stroke="#230900" stroke-width="0.5"/><polygon points="661.3,638.2 664.2,638.0 684.3,641.1 682.3,641.1" fill="#230b00" stroke="#230b00" stroke-width="0.5"/><polygon points="682.3,641.1 684.3,641.1 704.7,644.0 703.7,644.0" fill="#230c00" stroke="#230c00" stroke-width="0.5"/><polygon points="703.7,644.0 704.7,644.0 725.2,643.7 725.2,643.7" fill="#230e00" stroke="#230e00" stroke-width="0.5"/><polygon points="725.2,291.4 725.2,291.4 705.9,289.3 704.7,289.2" fill="#441c00" stroke="#441c00" stroke-width="0.5"/><polygon points="704.7,289.2 705.9,289.3 686.8,289.6 684.3,289.3" fill="#4a1b00" stroke="#4a1b00" stroke-width="0.5"/><polygon points="684.3,289.3 686.8,289.6 667.9,291.0 664.2,290.6" fill="#5c1d00" stroke="#5c1d00" stroke-width="0.5"/><polygon points="664.2,290.6 667.9,291.0 649.4,293.4 644.6,292.7" fill="#631b00" stroke="#631b00" stroke-width="0.5"/><polygon points="644.6,292.7 649.4,293.4 631.6,298.1 625.6,297.9" fill="#761b00" stroke="#761b00" stroke-width="0.5"/><polygon points="625.6,297.9 631.6,298.1 614.4,304.5 607.3,303.9" fill="#7e1700" stroke="#7e1700" stroke-width="0.5"/><polygon points="607.3,303.9 614.4,304.5 598.1,311.2 590.0,310.0" fill="#931500" stroke="#931500" stroke-width="0.5"/><polygon points="590.0,310.0 598.1,311.2 582.8,319.8 573.7,319.5" fill="#9b1200" stroke="#9b1200" stroke-width="0.5"/><polygon points="573.7,319.5 582.8,319.8 568.5,330.0 558.5,329.0" fill="#b11200" stroke="#b11200" stroke-width="0.5"/><polygon points="558.5,329.0 568.5,330.0 555.5,340.5 544.6,338.5" fill="#b91000" stroke="#b91000" stroke-width="0.5"/><polygon points="544.6,338.5 555.5,340.5 543.7,351.1 532.1,350.4" fill="#cd0f00" stroke="#cd0f00" stroke-width="0.5"/><polygon points="532.1,350.4 543.7,351.1 533.3,364.0 521.0,363.5" fill="#d30d00" stroke="#d30d00" stroke-width="0.5"/><polygon points="521.0,363.5 533.3,364.0 524.4,378.1 511.5,376.9" fill="#e30c00" stroke="#e30c00" stroke-width="0.5"/><polygon points="511.5,376.9 524.4,378.1 517.0,392.5 503.6,391.2" fill="#e80b00" stroke="#e80b00" stroke-width="0.5"/><polygon points="503.6,391.2 517.0,392.5 511.2,407.5 497.5,405.6" fill="#f00900" stroke="#f00900" stroke-width="0.5"/><polygon points="497.5,405.6 511.2,407.5 507.0,422.9 493.0,422.2" fill="#f10800" stroke="#f10800" stroke-width="0.5"/><polygon points="493.0,422.2 507.0,422.9 504.5,438.5 490.3,438.5" fill="#ee0700" stroke="#ee0700" stroke-width="0.5"/><polygon points="490.3,438.5 504.5,438.5 503.6,454.6 489.4,454.6" fill="#eb0700" stroke="#eb0700" stroke-width="0.5"/><polygon points="489.4,454.6 503.6,454.6 504.5,470.9 490.3,470.6" fill="#dd0600" stroke="#dd0600" stroke-width="0.5"/><polygon points="490.3,470.6 504.5,470.9 507.0,487.4 493.0,486.1" fill="#d50700" stroke="#d50700" stroke-width="0.5"/><polygon points="493.0,486.1 507.0,487.4 511.2,504.2 497.5,501.6" fill="#be0600" stroke="#be0600" stroke-width="0.5"/><polygon points="497.5,501.6 511.2,504.2 517.0,520.3 503.6,518.0" fill="#b40700" stroke="#b40700" stroke-width="0.5"/><polygon points="503.6,518.0 517.0,520.3 524.4,534.6 511.5,534.9" fill="#990700" stroke="#990700" stroke-width="0.5"/><polygon points="511.5,534.9 524.4,534.6 533.3,548.6 521.0,549.2" fill="#8e0800" stroke="#8e0800" stroke-width="0.5"/><polygon points="521.0,549.2 533.3,548.6 543.7,563.2 532.1,562.2" fill="#730700" stroke="#730700" stroke-width="0.5"/><polygon points="532.1,562.2 543.7,563.2 555.5,578.1 544.6,576.1" fill="#6a0800" stroke="#6a0800" stroke-width="0.5"/><polygon points="544.6,576.1 555.5,578.1 568.5,589.5 558.5,589.9" fill="#520700" stroke="#520700" stroke-width="0.5"/><polygon points="558.5,589.9 568.5,589.5 582.8,600.3 573.7,600.2" fill="#4a0700" stroke="#4a0700" stroke-width="0.5"/><polygon points="573.7,600.2 582.8,600.3 598.1,610.7 590.0,610.2" fill="#380600" stroke="#380600" stroke-width="0.5"/><polygon points="590.0,610.2 598.1,610.7 614.4,620.0 607.3,620.1" fill="#330700" stroke="#330700" stroke-width="0.5"/><polygon points="607.3,620.1 614.4,620.0 631.6,627.0 625.6,627.0" fill="#280700" stroke="#280700" stroke-width="0.5"/><polygon points="625.6,627.0 631.6,627.0 649.4,633.7 644.6,633.4" fill="#250800" stroke="#250800" stroke-width="0.5"/><polygon points="644.6,633.4 649.4,633.7 667.9,637.9 664.2,638.0" fill="#230900" stroke="#230900" stroke-width="0.5"/><polygon points="664.2,638.0 667.9,637.9 686.8,641.2 684.3,641.1" fill="#230b00" stroke="#230b00" stroke-width="0.5"/><polygon points="684.3,641.1 686.8,641.2 705.9,644.0 704.7,644.0" fill="#230d00" stroke="#230d00" stroke-width="0.5"/><polygon points="704.7,644.0 705.9,644.0 725.2,643.7 725.2,643.7" fill="#230e00" stroke="#230e00" stroke-width="0.5"/><polygon points="725.2,291.4 725.2,291.4 707.4,289.4 705.9,289.3" fill="#451c00" stroke="#451c00" stroke-width="0.5"/><polygon points="705.9,289.3 707.4,289.4 689.7,289.9 686.8,289.6" fill="#4b1c00" stroke="#4b1c00" stroke-width="0.5"/><polygon points="686.8,289.6 689.7,289.9 672.3,291.4 667.9,291.0" fill="#5d1e00" stroke="#5d1e00" stroke-width="0.5"/><polygon points="667.9,291.0 672.3,291.4 655.3,294.2 649.4,293.4" fill="#651c00" stroke="#651c00" stroke-width="0.5"/><polygon points="649.4,293.4 655.3,294.2 638.8,298.2 631.6,298.1" fill="#7a1d00" stroke="#7a1d00" stroke-width="0.5"/><polygon points="631.6,298.1 638.8,298.2 622.9,305.1 614.4,304.5" fill="#821a00" stroke="#821a00" stroke-width="0.5"/><polygon points="614.4,304.5 622.9,305.1 607.9,312.5 598.1,311.2" fill="#981900" stroke="#981900" stroke-width="0.5"/><polygon points="598.1,311.2 607.9,312.5 593.7,320.3 582.8,319.8" fill="#a11400" stroke="#a11400" stroke-width="0.5"/><polygon points="582.8,319.8 593.7,320.3 580.5,330.5 568.5,330.0" fill="#b71400" stroke="#b71400" stroke-width="0.5"/><polygon points="568.5,330.0 580.5,330.5 568.5,341.8 555.5,340.5" fill="#c01300" stroke="#c01300" stroke-width="0.5"/><polygon points="555.5,340.5 568.5,341.8 557.6,353.6 543.7,351.1" fill="#d41200" stroke="#d41200" stroke-width="0.5"/><polygon points="543.7,351.1 557.6,353.6 548.0,365.6 533.3,364.0" fill="#db1100" stroke="#db1100" stroke-width="0.5"/><polygon points="533.3,364.0 548.0,365.6 539.8,378.3 524.4,378.1" fill="#eb1000" stroke="#eb1000" stroke-width="0.5"/><polygon points="524.4,378.1 539.8,378.3 532.9,393.2 517.0,392.5" fill="#f00e00" stroke="#f00e00" stroke-width="0.5"/><polygon points="517.0,392.5 532.9,393.2 527.6,408.5 511.2,407.5" fill="#f80d00" stroke="#f80d00" stroke-width="0.5"/><polygon points="511.2,407.5 527.6,408.5 523.7,424.2 507.0,422.9" fill="#f90c00" stroke="#f90c00" stroke-width="0.5"/><polygon points="507.0,422.9 523.7,424.2 521.4,440.2 504.5,438.5" fill="#f70b00" stroke="#f70b00" stroke-width="0.5"/><polygon points="504.5,438.5 521.4,440.2 520.6,456.4 503.6,454.6" fill="#f30b00" stroke="#f30b00" stroke-width="0.5"/><polygon points="503.6,454.6 520.6,456.4 521.4,472.6 504.5,470.9" fill="#e50a00" stroke="#e50a00" stroke-width="0.5"/><polygon points="504.5,470.9 521.4,472.6 523.7,488.5 507.0,487.4" fill="#de0a00" stroke="#de0a00" stroke-width="0.5"/><polygon points="507.0,487.4 523.7,488.5 527.6,504.2 511.2,504.2" fill="#c70a00" stroke="#c70a00" stroke-width="0.5"/><polygon points="511.2,504.2 527.6,504.2 532.9,519.5 517.0,520.3" fill="#bd0a00" stroke="#bd0a00" stroke-width="0.5"/><polygon points="517.0,520.3 532.9,519.5 539.8,534.7 524.4,534.6" fill="#a10900" stroke="#a10900" stroke-width="0.5"/><polygon points="524.4,534.6 539.8,534.7 548.0,550.3 533.3,548.6" fill="#960a00" stroke="#960a00" stroke-width="0.5"/><polygon points="533.3,548.6 548.0,550.3 557.6,565.3 543.7,563.2" fill="#7a0900" stroke="#7a0900" stroke-width="0.5"/><polygon points="543.7,563.2 557.6,565.3 568.5,577.7 555.5,578.1" fill="#700900" stroke="#700900" stroke-width="0.5"/><polygon points="555.5,578.1 568.5,577.7 580.5,589.5 568.5,589.5" fill="#580800" stroke="#580800" stroke-width="0.5"/><polygon points="568.5,589.5 580.5,589.5 593.7,600.7 582.8,600.3" fill="#4f0800" stroke="#4f0800" stroke-width="0.5"/><polygon points="582.8,600.3 593.7,600.7 607.9,611.6 598.1,610.7" fill="#3c0700" stroke="#3c0700" stroke-width="0.5"/><polygon points="598.1,610.7 607.9,611.6 622.9,619.7 614.4,620.0" fill="#360800" stroke="#360800" stroke-width="0.5"/><polygon points="614.4,620.0 622.9,619.7 638.8,627.1 631.6,627.0" fill="#290800" stroke="#290800" stroke-width="0.5"/><polygon points="631.6,627.0 638.8,627.1 655.3,633.8 649.4,633.7" fill="#260900" stroke="#260900" stroke-width="0.5"/><polygon points="649.4,633.7 655.3,633.8 672.3,637.8 667.9,637.9" fill="#230a00" stroke="#230a00" stroke-width="0.5"/><polygon points="667.9,637.9 672.3,637.8 689.7,641.3 686.8,641.2" fill="#230b00" stroke="#230b00" stroke-width="0.5"/><polygon points="686.8,641.2 689.7,641.3 707.4,643.9 705.9,644.0" fill="#230d00" stroke="#230d00" stroke-width="0.5"/><polygon points="705.9,644.0 707.4,643.9 725.2,643.7 725.2,643.7" fill="#230e00" stroke="#230e00" stroke-width="0.5"/><polygon points="725.2,291.4 725.2,291.4 709.1,289.6 707.4,289.4" fill="#461d00" stroke="#461d00" stroke-width="0.5"/><polygon points="707.4,289.4 709.1,289.6 693.1,290.3 689.7,289.9" fill="#4d1d00" stroke="#4d1d00" stroke-width="0.5"/><polygon points="689.7,289.9 693.1,290.3 677.3,291.8 672.3,291.4" fill="#622100" stroke="#622100" stroke-width="0.5"/><polygon points="672.3,291.4 677.3,291.8 661.9,295.1 655.3,294.2" fill="#6a1f00" stroke="#6a1f00" stroke-width="0.5"/><polygon points="655.3,294.2 661.9,295.1 647.0,299.1 638.8,298.2" fill="#822100" stroke="#822100" stroke-width="0.5"/><polygon points="638.8,298.2 647.0,299.1 632.7,305.5 622.9,305.1" fill="#8b1f00" stroke="#8b1f00" stroke-width="0.5"/><polygon points="622.9,305.1 632.7,305.5 619.1,313.4 607.9,312.5" fill="#a31e00" stroke="#a31e00" stroke-width="0.5"/><polygon points="607.9,312.5 619.1,313.4 606.3,322.0 593.7,320.3" fill="#ad1a00" stroke="#ad1a00" stroke-width="0.5"/><polygon points="593.7,320.3 606.3,322.0 594.4,331.2 580.5,330.5" fill="#c51800" stroke="#c51800" stroke-width="0.5"/><polygon points="580.5,330.5 594.4,331.2 583.5,342.3 568.5,341.8" fill="#ce1700" stroke="#ce1700" stroke-width="0.5"/><polygon points="568.5,341.8 583.5,342.3 573.6,354.8 557.6,353.6" fill="#e31700" stroke="#e31700" stroke-width="0.5"/><polygon points="557.6,353.6 573.6,354.8 565.0,367.8 548.0,365.6" fill="#eb1500" stroke="#eb1500" stroke-width="0.5"/><polygon points="548.0,365.6 565.0,367.8 557.5,381.4 539.8,378.3" fill="#fb1500" stroke="#fb1500" stroke-width="0.5"/><polygon points="539.8,378.3 557.5,381.4 551.3,395.4 532.9,393.2" fill="#ff1300" stroke="#ff1300" stroke-width="0.5"/><polygon points="532.9,393.2 551.3,395.4 546.5,409.8 527.6,408.5" fill="#ff1300" stroke="#ff1300" stroke-width="0.5"/><polygon points="527.6,408.5 546.5,409.8 543.0,424.9 523.7,424.2" fill="#ff1200" stroke="#ff1200" stroke-width="0.5"/><polygon points="523.7,424.2 543.0,424.9 540.9,440.5 521.4,440.2" fill="#ff1100" stroke="#ff1100" stroke-width="0.5"/><polygon points="521.4,440.2 540.9,440.5 540.2,456.5 520.6,456.4" fill="#ff1000" stroke="#ff1000" stroke-width="0.5"/><polygon points="520.6,456.4 540.2,456.5 540.9,472.7 521.4,472.6" fill="#f40f00" stroke="#f40f00" stroke-width="0.5"/><polygon points="521.4,472.6 540.9,472.7 543.0,489.1 523.7,488.5" fill="#ed0f00" stroke="#ed0f00" stroke-width="0.5"/><polygon points="523.7,488.5 543.0,489.1 546.5,505.5 527.6,504.2" fill="#d70e00" stroke="#d70e00" stroke-width="0.5"/><polygon points="527.6,504.2 546.5,505.5 551.3,521.7 532.9,519.5" fill="#cd0e00" stroke="#cd0e00" stroke-width="0.5"/><polygon points="532.9,519.5 551.3,521.7 557.5,537.5 539.8,534.7" fill="#b10d00" stroke="#b10d00" stroke-width="0.5"/><polygon points="539.8,534.7 557.5,537.5 565.0,551.5 548.0,550.3" fill="#a60e00" stroke="#a60e00" stroke-width="0.5"/><polygon points="548.0,550.3 565.0,551.5 573.6,565.0 557.6,565.3" fill="#890c00" stroke="#890c00" stroke-width="0.5"/><polygon points="557.6,565.3 573.6,565.0 583.5,577.7 568.5,577.7" fill="#7e0d00" stroke="#7e0d00" stroke-width="0.5"/><polygon points="568.5,577.7 583.5,577.7 594.4,589.9 580.5,589.5" fill="#630b00" stroke="#630b00" stroke-width="0.5"/><polygon points="580.5,589.5 594.4,589.9 606.3,601.8 593.7,600.7" fill="#5a0b00" stroke="#5a0b00" stroke-width="0.5"/><polygon points="593.7,600.7 606.3,601.8 619.1,611.3 607.9,611.6" fill="#440a00" stroke="#440a00" stroke-width="0.5"/><polygon points="607.9,611.6 619.1,611.3 632.7,619.7 622.9,619.7" fill="#3d0b00" stroke="#3d0b00" stroke-width="0.5"/><polygon points="622.9,619.7 632.7,619.7 647.0,627.5 638.8,627.1" fill="#2d0a00" stroke="#2d0a00" stroke-width="0.5"/><polygon points="638.8,627.1 647.0,627.5 661.9,633.4 655.3,633.8" fill="#290a00" stroke="#290a00" stroke-width="0.5"/><polygon points="655.3,633.8 661.9,633.4 677.3,637.7 672.3,637.8" fill="#230a00" stroke="#230a00" stroke-width="0.5"/><polygon points="672.3,637.8 677.3,637.7 693.1,641.4 689.7,641.3" fill="#230c00" stroke="#230c00" stroke-width="0.5"/><polygon points="689.7,641.3 693.1,641.4 709.1,643.8 707.4,643.9" fill="#230d00" stroke="#230d00" stroke-width="0.5"/><polygon points="707.4,643.9 709.1,643.8 725.2,643.7 725.2,643.7" fill="#230e00" stroke="#230e00" stroke-width="0.5"/><polygon points="725.2,291.4 725.2,291.4 711.0,289.9 709.1,289.6" fill="#461d00" stroke="#461d00" stroke-width="0.5"/><polygon points="709.1,289.6 711.0,289.9 696.9,290.6 693.1,290.3" fill="#4d1d00" stroke="#4d1d00" stroke-width="0.5"/><polygon points="693.1,290.3 696.9,290.6 683.0,292.5 677.3,291.8" fill="#632200" stroke="#632200" stroke-width="0.5"/><polygon points="677.3,291.8 683.0,292.5 669.4,295.8 661.9,295.1" fill="#6c2100" stroke="#6c2100" stroke-width="0.5"/><polygon points="661.9,295.1 669.4,295.8 656.3,300.4 647.0,299.1" fill="#842400" stroke="#842400" stroke-width="0.5"/><polygon points="647.0,299.1 656.3,300.4 643.7,305.9 632.7,305.5" fill="#8d2200" stroke="#8d2200" stroke-width="0.5"/><polygon points="632.7,305.5 643.7,305.9 631.6,314.0 619.1,313.4" fill="#a72300" stroke="#a72300" stroke-width="0.5"/><polygon points="619.1,313.4 631.6,314.0 620.3,323.1 606.3,322.0" fill="#b02000" stroke="#b02000" stroke-width="0.5"/><polygon points="606.3,322.0 620.3,323.1 609.9,333.1 594.4,331.2" fill="#c91f00" stroke="#c91f00" stroke-width="0.5"/><polygon points="594.4,331.2 609.9,333.1 600.2,343.8 583.5,342.3" fill="#d21b00" stroke="#d21b00" stroke-width="0.5"/><polygon points="583.5,342.3 600.2,343.8 591.6,355.2 573.6,354.8" fill="#e71b00" stroke="#e71b00" stroke-width="0.5"/><polygon points="573.6,354.8 591.6,355.2 583.9,368.5 565.0,367.8" fill="#ee1a00" stroke="#ee1a00" stroke-width="0.5"/><polygon points="565.0,367.8 583.9,368.5 577.3,382.6 557.5,381.4" fill="#fe1a00" stroke="#fe1a00" stroke-width="0.5"/><polygon points="557.5,381.4 577.3,382.6 571.9,397.1 551.3,395.4" fill="#ff1900" stroke="#ff1900" stroke-width="0.5"/><polygon points="551.3,395.4 571.9,397.1 567.6,412.2 546.5,409.8" fill="#ff1800" stroke="#ff1800" stroke-width="0.5"/><polygon points="546.5,409.8 567.6,412.2 564.5,427.7 543.0,424.9" fill="#ff1700" stroke="#ff1700" stroke-width="0.5"/><polygon points="543.0,424.9 564.5,427.7 562.7,443.6 540.9,440.5" fill="#ff1600" stroke="#ff1600" stroke-width="0.5"/><polygon points="540.9,440.5 562.7,443.6 562.1,459.6 540.2,456.5" fill="#ff1500" stroke="#ff1500" stroke-width="0.5"/><polygon points="540.2,456.5 562.1,459.6 562.7,475.6 540.9,472.7" fill="#f81400" stroke="#f81400" stroke-width="0.5"/><polygon points="540.9,472.7 562.7,475.6 564.5,491.5 543.0,489.1" fill="#f11400" stroke="#f11400" stroke-width="0.5"/><polygon points="543.0,489.1 564.5,491.5 567.6,507.2 546.5,505.5" fill="#db1300" stroke="#db1300" stroke-width="0.5"/><polygon points="546.5,505.5 567.6,507.2 571.9,522.5 551.3,521.7" fill="#d11300" stroke="#d11300" stroke-width="0.5"/><polygon points="551.3,521.7 571.9,522.5 577.3,537.4 557.5,537.5" fill="#b51100" stroke="#b51100" stroke-width="0.5"/><polygon points="557.5,537.5 577.3,537.4 583.9,551.6 565.0,551.5" fill="#ab1100" stroke="#ab1100" stroke-width="0.5"/><polygon points="565.0,551.5 583.9,551.6 591.6,565.3 573.6,565.0" fill="#8d0f00" stroke="#8d0f00" stroke-width="0.5"/><polygon points="573.6,565.0 591.6,565.3 600.2,578.6 583.5,577.7" fill="#820f00" stroke="#820f00" stroke-width="0.5"/><polygon points="583.5,577.7 600.2,578.6 609.9,591.2 594.4,589.9" fill="#670d00" stroke="#670d00" stroke-width="0.5"/><polygon points="594.4,589.9 609.9,591.2 620.3,601.6 606.3,601.8" fill="#5d0e00" stroke="#5d0e00" stroke-width="0.5"/><polygon points="606.3,601.8 620.3,601.6 631.6,611.2 619.1,611.3" fill="#460d00" stroke="#460d00" stroke-width="0.5"/><polygon points="619.1,611.3 631.6,611.2 643.7,620.0 632.7,619.7" fill="#3f0d00" stroke="#3f0d00" stroke-width="0.5"/><polygon points="632.7,619.7 643.7,620.0 656.3,627.7 647.0,627.5" fill="#2e0b00" stroke="#2e0b00" stroke-width="0.5"/><polygon points="647.0,627.5 656.3,627.7 669.4,633.1 661.9,633.4" fill="#2a0b00" stroke="#2a0b00" stroke-width="0.5"/><polygon points="661.9,633.4 669.4,633.1 683.0,637.8 677.3,637.7" fill="#230b00" stroke="#230b00" stroke-width="0.5"/><polygon points="677.3,637.7 683.0,637.8 696.9,641.5 693.1,641.4" fill="#230c00" stroke="#230c00" stroke-width="0.5"/><polygon points="693.1,641.4 696.9,641.5 711.0,643.6 709.1,643.8" fill="#230d00" stroke="#230d00" stroke-width="0.5"/><polygon points="709.1,643.8 711.0,643.6 725.2,643.7 725.2,643.7" fill="#230f00" stroke="#230f00" stroke-width="0.5"/><polygon points="725.2,291.4 725.2,291.4 713.1,290.3 711.0,289.9" fill="#471e00" stroke="#471e00" stroke-width="0.5"/><polygon points="711.0,289.9 713.1,290.3 701.1,291.0 696.9,290.6" fill="#4e1e00" stroke="#4e1e00" stroke-width="0.5"/><polygon points="696.9,290.6 701.1,291.0 689.2,293.2 683.0,292.5" fill="#662400" stroke="#662400" stroke-width="0.5"/><polygon points="683.0,292.5 689.2,293.2 677.6,296.5 669.4,295.8" fill="#6f2400" stroke="#6f2400" stroke-width="0.5"/><polygon points="669.4,295.8 677.6,296.5 666.4,301.5 656.3,300.4" fill="#882900" stroke="#882900" stroke-width="0.5"/><polygon points="656.3,300.4 666.4,301.5 655.6,307.6 643.7,305.9" fill="#922700" stroke="#922700" stroke-width="0.5"/><polygon points="643.7,305.9 655.6,307.6 645.4,314.6 631.6,314.0" fill="#ad2a00" stroke="#ad2a00" stroke-width="0.5"/><polygon points="631.6,314.0 645.4,314.6 635.7,323.7 620.3,323.1" fill="#b72700" stroke="#b72700" stroke-width="0.5"/><polygon points="620.3,323.1 635.7,323.7 626.8,334.1 609.9,333.1" fill="#cf2800" stroke="#cf2800" stroke-width="0.5"/><polygon points="609.9,333.1 626.8,334.1 618.6,345.5 600.2,343.8" fill="#d82500" stroke="#d82500" stroke-width="0.5"/><polygon points="600.2,343.8 618.6,345.5 611.2,357.6 591.6,355.2" fill="#ed2300" stroke="#ed2300" stroke-width="0.5"/><polygon points="591.6,355.2 611.2,357.6 604.6,370.4 583.9,368.5" fill="#f42000" stroke="#f42000" stroke-width="0.5"/><polygon points="583.9,368.5 604.6,370.4 599.0,383.8 577.3,382.6" fill="#ff1f00" stroke="#ff1f00" stroke-width="0.5"/><polygon points="577.3,382.6 599.0,383.8 594.4,398.0 571.9,397.1" fill="#ff1e00" stroke="#ff1e00" stroke-width="0.5"/><polygon points="571.9,397.1 594.4,398.0 590.7,412.7 567.6,412.2" fill="#ff1e00" stroke="#ff1e00" stroke-width="0.5"/><polygon points="567.6,412.2 590.7,412.7 588.1,428.3 564.5,427.7" fill="#ff1d00" stroke="#ff1d00" stroke-width="0.5"/><polygon points="564.5,427.7 588.1,428.3 586.5,444.1 562.7,443.6" fill="#ff1c00" stroke="#ff1c00" stroke-width="0.5"/><polygon points="562.7,443.6 586.5,444.1 586.0,460.0 562.1,459.6" fill="#ff1b00" stroke="#ff1b00" stroke-width="0.5"/><polygon points="562.1,459.6 586.0,460.0 586.5,476.0 562.7,475.6" fill="#fb1a00" stroke="#fb1a00" stroke-width="0.5"/><polygon points="562.7,475.6 586.5,476.0 588.1,491.9 564.5,491.5" fill="#f41a00" stroke="#f41a00" stroke-width="0.5"/><polygon points="564.5,491.5 588.1,491.9 590.7,507.6 567.6,507.2" fill="#df1800" stroke="#df1800" stroke-width="0.5"/><polygon points="567.6,507.2 590.7,507.6 594.4,523.1 571.9,522.5" fill="#d61800" stroke="#d61800" stroke-width="0.5"/><polygon points="571.9,522.5 594.4,523.1 599.0,538.3 577.3,537.4" fill="#bc1500" stroke="#bc1500" stroke-width="0.5"/><polygon points="577.3,537.4 599.0,538.3 604.6,553.0 583.9,551.6" fill="#b11500" stroke="#b11500" stroke-width="0.5"/><polygon points="583.9,551.6 604.6,553.0 611.2,566.8 591.6,565.3" fill="#951300" stroke="#951300" stroke-width="0.5"/><polygon points="591.6,565.3 611.2,566.8 618.6,579.2 600.2,578.6" fill="#8a1400" stroke="#8a1400" stroke-width="0.5"/><polygon points="600.2,578.6 618.6,579.2 626.8,590.8 609.9,591.2" fill="#6e1200" stroke="#6e1200" stroke-width="0.5"/><polygon points="609.9,591.2 626.8,590.8 635.7,601.6 620.3,601.6" fill="#641300" stroke="#641300" stroke-width="0.5"/><polygon points="620.3,601.6 635.7,601.6 645.4,611.6 631.6,611.2" fill="#4b1000" stroke="#4b1000" stroke-width="0.5"/><polygon points="631.6,611.2 645.4,611.6 655.6,620.5 643.7,620.0" fill="#431000" stroke="#431000" stroke-width="0.5"/><polygon points="643.7,620.0 655.6,620.5 666.4,627.2 656.3,627.7" fill="#310d00" stroke="#310d00" stroke-width="0.5"/><polygon points="656.3,627.7 666.4,627.2 677.6,633.0 669.4,633.1" fill="#2c0d00" stroke="#2c0d00" stroke-width="0.5"/><polygon points="669.4,633.1 677.6,633.0 689.2,637.9 683.0,637.8" fill="#240b00" stroke="#240b00" stroke-width="0.5"/><polygon points="683.0,637.8 689.2,637.9 701.1,641.8 696.9,641.5" fill="#230c00" stroke="#230c00" stroke-width="0.5"/><polygon points="696.9,641.5 701.1,641.8 713.1,643.5 711.0,643.6" fill="#230d00" stroke="#230d00" stroke-width="0.5"/><polygon points="711.0,643.6 713.1,643.5 725.2,643.7 725.2,643.7" fill="#230f00" stroke="#230f00" stroke-width="0.5"/><polygon points="725.2,291.4 725.2,291.4 715.4,290.6 713.1,290.3" fill="#471e00" stroke="#471e00" stroke-width="0.5"/><polygon points="713.1,290.3 715.4,290.6 705.5,291.3 701.1,291.0" fill="#4f1f00" stroke="#4f1f00" stroke-width="0.5"/><polygon points="701.1,291.0 705.5,291.3 695.9,293.9 689.2,293.2" fill="#662600" stroke="#662600" stroke-width="0.5"/><polygon points="689.2,293.2 695.9,293.9 686.4,297.6 677.6,296.5" fill="#702700" stroke="#702700" stroke-width="0.5"/><polygon points="677.6,296.5 686.4,297.6 677.3,302.4 666.4,301.5" fill="#8a2c00" stroke="#8a2c00" stroke-width="0.5"/><polygon points="666.4,301.5 677.3,302.4 668.5,309.0 655.6,307.6" fill="#942c00" stroke="#942c00" stroke-width="0.5"/><polygon points="655.6,307.6 668.5,309.0 660.1,316.6 645.4,314.6" fill="#ae3000" stroke="#ae3000" stroke-width="0.5"/><polygon points="645.4,314.6 660.1,316.6 652.2,325.3 635.7,323.7" fill="#b82e00" stroke="#b82e00" stroke-width="0.5"/><polygon points="635.7,323.7 652.2,325.3 644.9,334.9 626.8,334.1" fill="#d13000" stroke="#d13000" stroke-width="0.5"/><polygon points="626.8,334.1 644.9,334.9 638.3,346.0 618.6,345.5" fill="#d92e00" stroke="#d92e00" stroke-width="0.5"/><polygon points="618.6,345.5 638.3,346.0 632.2,358.5 611.2,357.6" fill="#ee2f00" stroke="#ee2f00" stroke-width="0.5"/><polygon points="611.2,357.6 632.2,358.5 626.9,371.7 604.6,370.4" fill="#f42c00" stroke="#f42c00" stroke-width="0.5"/><polygon points="604.6,370.4 626.9,371.7 622.3,385.6 599.0,383.8" fill="#ff2c00" stroke="#ff2c00" stroke-width="0.5"/><polygon points="599.0,383.8 622.3,385.6 618.5,400.1 594.4,398.0" fill="#ff2900" stroke="#ff2900" stroke-width="0.5"/><polygon points="594.4,398.0 618.5,400.1 615.6,415.2 590.7,412.7" fill="#ff2800" stroke="#ff2800" stroke-width="0.5"/><polygon points="590.7,412.7 615.6,415.2 613.4,430.6 588.1,428.3" fill="#ff2600" stroke="#ff2600" stroke-width="0.5"/><polygon points="588.1,428.3 613.4,430.6 612.1,446.3 586.5,444.1" fill="#ff2400" stroke="#ff2400" stroke-width="0.5"/><polygon points="586.5,444.1 612.1,446.3 611.7,462.2 586.0,460.0" fill="#ff2300" stroke="#ff2300" stroke-width="0.5"/><polygon points="586.0,460.0 611.7,462.2 612.1,478.1 586.5,476.0" fill="#fa2200" stroke="#fa2200" stroke-width="0.5"/><polygon points="586.5,476.0 612.1,478.1 613.4,493.9 588.1,491.9" fill="#f42100" stroke="#f42100" stroke-width="0.5"/><polygon points="588.1,491.9 613.4,493.9 615.6,509.4 590.7,507.6" fill="#df1f00" stroke="#df1f00" stroke-width="0.5"/><polygon points="590.7,507.6 615.6,509.4 618.5,524.5 594.4,523.1" fill="#d62000" stroke="#d62000" stroke-width="0.5"/><polygon points="594.4,523.1 618.5,524.5 622.3,539.2 599.0,538.3" fill="#bd1e00" stroke="#bd1e00" stroke-width="0.5"/><polygon points="599.0,538.3 622.3,539.2 626.9,553.2 604.6,553.0" fill="#b21e00" stroke="#b21e00" stroke-width="0.5"/><polygon points="604.6,553.0 626.9,553.2 632.2,566.6 611.2,566.8" fill="#961b00" stroke="#961b00" stroke-width="0.5"/><polygon points="611.2,566.8 632.2,566.6 638.3,579.3 618.6,579.2" fill="#8b1b00" stroke="#8b1b00" stroke-width="0.5"/><polygon points="618.6,579.2 638.3,579.3 644.9,591.3 626.8,590.8" fill="#6f1800" stroke="#6f1800" stroke-width="0.5"/><polygon points="626.8,590.8 644.9,591.3 652.2,602.5 635.7,601.6" fill="#651700" stroke="#651700" stroke-width="0.5"/><polygon points="635.7,601.6 652.2,602.5 660.1,611.8 645.4,611.6" fill="#4d1300" stroke="#4d1300" stroke-width="0.5"/><polygon points="645.4,611.6 660.1,611.8 668.5,619.9 655.6,620.5" fill="#441300" stroke="#441300" stroke-width="0.5"/><polygon points="655.6,620.5 668.5,619.9 677.3,627.1 666.4,627.2" fill="#320f00" stroke="#320f00" stroke-width="0.5"/><polygon points="666.4,627.2 677.3,627.1 686.4,633.1 677.6,633.0" fill="#2c0e00" stroke="#2c0e00" stroke-width="0.5"/><polygon points="677.6,633.0 686.4,633.1 695.9,638.1 689.2,637.9" fill="#240c00" stroke="#240c00" stroke-width="0.5"/><polygon points="689.2,637.9 695.9,638.1 705.5,642.0 701.1,641.8" fill="#230d00" stroke="#230d00" stroke-width="0.5"/><polygon points="701.1,641.8 705.5,642.0 715.4,643.4 713.1,643.5" fill="#230e00" stroke="#230e00" stroke-width="0.5"/><polygon points="713.1,643.5 715.4,643.4 725.2,643.7 725.2,643.7" fill="#230f00" stroke="#230f00" stroke-width="0.5"/><polygon points="725.2,291.4 725.2,291.4 717.7,291.0 715.4,290.6" fill="#471e00" stroke="#471e00" stroke-width="0.5"/><polygon points="715.4,290.6 717.7,291.0 710.2,291.8 705.5,291.3" fill="#4f2000" stroke="#4f2000" stroke-width="0.5"/><polygon points="705.5,291.3 710.2,291.8 702.9,294.4 695.9,293.9" fill="#672800" stroke="#672800" stroke-width="0.5"/><polygon points="695.9,293.9 702.9,294.4 695.7,298.5 686.4,297.6" fill="#712900" stroke="#712900" stroke-width="0.5"/><polygon points="686.4,297.6 695.7,298.5 688.7,303.8 677.3,302.4" fill="#8b3000" stroke="#8b3000" stroke-width="0.5"/><polygon points="677.3,302.4 688.7,303.8 682.0,310.3 668.5,309.0" fill="#953100" stroke="#953100" stroke-width="0.5"/><polygon points="668.5,309.0 682.0,310.3 675.7,317.9 660.1,316.6" fill="#af3600" stroke="#af3600" stroke-width="0.5"/><polygon points="660.1,316.6 675.7,317.9 669.7,327.0 652.2,325.3" fill="#b93600" stroke="#b93600" stroke-width="0.5"/><polygon points="652.2,325.3 669.7,327.0 664.1,337.1 644.9,334.9" fill="#d03900" stroke="#d03900" stroke-width="0.5"/><polygon points="644.9,334.9 664.1,337.1 659.0,348.3 638.3,346.0" fill="#d93800" stroke="#d93800" stroke-width="0.5"/><polygon points="638.3,346.0 659.0,348.3 654.4,360.3 632.2,358.5" fill="#ec3a00" stroke="#ec3a00" stroke-width="0.5"/><polygon points="632.2,358.5 654.4,360.3 650.4,373.2 626.9,371.7" fill="#f23900" stroke="#f23900" stroke-width="0.5"/><polygon points="626.9,371.7 650.4,373.2 646.9,386.7 622.3,385.6" fill="#ff3900" stroke="#ff3900" stroke-width="0.5"/><polygon points="622.3,385.6 646.9,386.7 644.0,400.9 618.5,400.1" fill="#ff3800" stroke="#ff3800" stroke-width="0.5"/><polygon points="618.5,400.1 644.0,400.9 641.7,415.8 615.6,415.2" fill="#ff3700" stroke="#ff3700" stroke-width="0.5"/><polygon points="615.6,415.2 641.7,415.8 640.1,431.2 613.4,430.6" fill="#ff3500" stroke="#ff3500" stroke-width="0.5"/><polygon points="613.4,430.6 640.1,431.2 639.1,446.9 612.1,446.3" fill="#ff3400" stroke="#ff3400" stroke-width="0.5"/><polygon points="612.1,446.3 639.1,446.9 638.8,462.7 611.7,462.2" fill="#ff3300" stroke="#ff3300" stroke-width="0.5"/><polygon points="611.7,462.2 638.8,462.7 639.1,478.5 612.1,478.1" fill="#f53000" stroke="#f53000" stroke-width="0.5"/><polygon points="612.1,478.1 639.1,478.5 640.1,494.2 613.4,493.9" fill="#ef3000" stroke="#ef3000" stroke-width="0.5"/><polygon points="613.4,493.9 640.1,494.2 641.7,509.7 615.6,509.4" fill="#dc2d00" stroke="#dc2d00" stroke-width="0.5"/><polygon points="615.6,509.4 641.7,509.7 644.0,525.0 618.5,524.5" fill="#d32c00" stroke="#d32c00" stroke-width="0.5"/><polygon points="618.5,524.5 644.0,525.0 646.9,539.9 622.3,539.2" fill="#bb2800" stroke="#bb2800" stroke-width="0.5"/><polygon points="622.3,539.2 646.9,539.9 650.4,554.2 626.9,553.2" fill="#b12800" stroke="#b12800" stroke-width="0.5"/><polygon points="626.9,553.2 650.4,554.2 654.4,567.7 632.2,566.6" fill="#962300" stroke="#962300" stroke-width="0.5"/><polygon points="632.2,566.6 654.4,567.7 659.0,580.0 638.3,579.3" fill="#8c2200" stroke="#8c2200" stroke-width="0.5"/><polygon points="638.3,579.3 659.0,580.0 664.1,591.5 644.9,591.3" fill="#711d00" stroke="#711d00" stroke-width="0.5"/><polygon points="644.9,591.3 664.1,591.5 669.7,602.0 652.2,602.5" fill="#671c00" stroke="#671c00" stroke-width="0.5"/><polygon points="652.2,602.5 669.7,602.0 675.7,611.4 660.1,611.8" fill="#4e1700" stroke="#4e1700" stroke-width="0.5"/><polygon points="660.1,611.8 675.7,611.4 682.0,619.9 668.5,619.9" fill="#461500" stroke="#461500" stroke-width="0.5"/><polygon points="668.5,619.9 682.0,619.9 688.7,627.2 677.3,627.1" fill="#331000" stroke="#331000" stroke-width="0.5"/><polygon points="677.3,627.1 688.7,627.2 695.7,633.5 686.4,633.1" fill="#2d0f00" stroke="#2d0f00" stroke-width="0.5"/><polygon points="686.4,633.1 695.7,633.5 702.9,638.5 695.9,638.1" fill="#240d00" stroke="#240d00" stroke-width="0.5"/><polygon points="695.9,638.1 702.9,638.5 710.2,641.7 705.5,642.0" fill="#230d00" stroke="#230d00" stroke-width="0.5"/><polygon points="705.5,642.0 710.2,641.7 717.7,643.3 715.4,643.4" fill="#230e00" stroke="#230e00" stroke-width="0.5"/><polygon points="715.4,643.4 717.7,643.3 725.2,643.7 725.2,643.7" fill="#230f00" stroke="#230f00" stroke-width="0.5"/><polygon points="725.2,291.4 725.2,291.4 720.2,291.4 717.7,291.0" fill="#471e00" stroke="#471e00" stroke-width="0.5"/><polygon points="717.7,291.0 720.2,291.4 715.1,292.6 710.2,291.8" fill="#4f2100" stroke="#4f2100" stroke-width="0.5"/><polygon points="710.2,291.8 715.1,292.6 710.2,295.1 702.9,294.4" fill="#672900" stroke="#672900" stroke-width="0.5"/><polygon points="702.9,294.4 710.2,295.1 705.3,299.3 695.7,298.5" fill="#712b00" stroke="#712b00" stroke-width="0.5"/><polygon points="695.7,298.5 705.3,299.3 700.6,304.9 688.7,303.8" fill="#8b3300" stroke="#8b3300" stroke-width="0.5"/><polygon points="688.7,303.8 700.6,304.9 696.1,311.7 682.0,310.3" fill="#953500" stroke="#953500" stroke-width="0.5"/><polygon points="682.0,310.3 696.1,311.7 691.8,319.7 675.7,317.9" fill="#af3c00" stroke="#af3c00" stroke-width="0.5"/><polygon points="675.7,317.9 691.8,319.7 687.8,328.8 669.7,327.0" fill="#b83d00" stroke="#b83d00" stroke-width="0.5"/><polygon points="669.7,327.0 687.8,328.8 684.1,338.9 664.1,337.1" fill="#cf4200" stroke="#cf4200" stroke-width="0.5"/><polygon points="664.1,337.1 684.1,338.9 680.6,350.0 659.0,348.3" fill="#d74300" stroke="#d74300" stroke-width="0.5"/><polygon points="659.0,348.3 680.6,350.0 677.5,362.1 654.4,360.3" fill="#ea4600" stroke="#ea4600" stroke-width="0.5"/><polygon points="654.4,360.3 677.5,362.1 674.8,375.1 650.4,373.2" fill="#f04600" stroke="#f04600" stroke-width="0.5"/><polygon points="650.4,373.2 674.8,375.1 672.5,388.8 646.9,386.7" fill="#fc4800" stroke="#fc4800" stroke-width="0.5"/><polygon points="646.9,386.7 672.5,388.8 670.5,403.1 644.0,400.9" fill="#ff4700" stroke="#ff4700" stroke-width="0.5"/><polygon points="644.0,400.9 670.5,403.1 669.0,418.0 641.7,415.8" fill="#ff4700" stroke="#ff4700" stroke-width="0.5"/><polygon points="641.7,415.8 669.0,418.0 667.9,433.2 640.1,431.2" fill="#ff4600" stroke="#ff4600" stroke-width="0.5"/><polygon points="640.1,431.2 667.9,433.2 667.2,448.8 639.1,446.9" fill="#ff4400" stroke="#ff4400" stroke-width="0.5"/><polygon points="639.1,446.9 667.2,448.8 667.0,464.4 638.8,462.7" fill="#fd4300" stroke="#fd4300" stroke-width="0.5"/><polygon points="638.8,462.7 667.0,464.4 667.2,480.1 639.1,478.5" fill="#f14000" stroke="#f14000" stroke-width="0.5"/><polygon points="639.1,478.5 667.2,480.1 667.9,495.6 640.1,494.2" fill="#ec3f00" stroke="#ec3f00" stroke-width="0.5"/><polygon points="640.1,494.2 667.9,495.6 669.0,510.9 641.7,509.7" fill="#d93a00" stroke="#d93a00" stroke-width="0.5"/><polygon points="641.7,509.7 669.0,510.9 670.5,525.9 644.0,525.0" fill="#d13900" stroke="#d13900" stroke-width="0.5"/><polygon points="644.0,525.0 670.5,525.9 672.5,540.4 646.9,539.9" fill="#b93300" stroke="#b93300" stroke-width="0.5"/><polygon points="646.9,539.9 672.5,540.4 674.8,554.3 650.4,554.2" fill="#af3200" stroke="#af3200" stroke-width="0.5"/><polygon points="650.4,554.2 674.8,554.3 677.5,567.5 654.4,567.7" fill="#952b00" stroke="#952b00" stroke-width="0.5"/><polygon points="654.4,567.7 677.5,567.5 680.6,579.9 659.0,580.0" fill="#8b2900" stroke="#8b2900" stroke-width="0.5"/><polygon points="659.0,580.0 680.6,579.9 684.1,591.5 664.1,591.5" fill="#702300" stroke="#702300" stroke-width="0.5"/><polygon points="664.1,591.5 684.1,591.5 687.8,602.2 669.7,602.0" fill="#662100" stroke="#662100" stroke-width="0.5"/><polygon points="669.7,602.0 687.8,602.2 691.8,611.8 675.7,611.4" fill="#4e1a00" stroke="#4e1a00" stroke-width="0.5"/><polygon points="675.7,611.4 691.8,611.8 696.1,620.3 682.0,619.9" fill="#461800" stroke="#461800" stroke-width="0.5"/><polygon points="682.0,619.9 696.1,620.3 700.6,627.8 688.7,627.2" fill="#331200" stroke="#331200" stroke-width="0.5"/><polygon points="688.7,627.2 700.6,627.8 705.3,634.0 695.7,633.5" fill="#2d1100" stroke="#2d1100" stroke-width="0.5"/><polygon points="695.7,633.5 705.3,634.0 710.2,638.3 702.9,638.5" fill="#240e00" stroke="#240e00" stroke-width="0.5"/><polygon points="702.9,638.5 710.2,638.3 715.1,641.4 710.2,641.7" fill="#230e00" stroke="#230e00" stroke-width="0.5"/><polygon points="710.2,641.7 715.1,641.4 720.2,643.2 717.7,643.3" fill="#230e00" stroke="#230e00" stroke-width="0.5"/><polygon points="717.7,643.3 720.2,643.2 725.2,643.7 725.2,643.7" fill="#230f00" stroke="#230f00" stroke-width="0.5"/><polygon points="725.2,291.4 725.2,291.4 722.7,291.7 720.2,291.4" fill="#471e00" stroke="#471e00" stroke-width="0.5"/><polygon points="720.2,291.4 722.7,291.7 720.2,293.4 715.1,292.6" fill="#4f2100" stroke="#4f2100" stroke-width="0.5"/><polygon points="715.1,292.6 720.2,293.4 717.7,296.3 710.2,295.1" fill="#662a00" stroke="#662a00" stroke-width="0.5"/><polygon points="710.2,295.1 717.7,296.3 715.2,300.6 705.3,299.3" fill="#6f2d00" stroke="#6f2d00" stroke-width="0.5"/><polygon points="705.3,299.3 715.2,300.6 712.9,306.1 700.6,304.9" fill="#893600" stroke="#893600" stroke-width="0.5"/><polygon points="700.6,304.9 712.9,306.1 710.6,312.9 696.1,311.7" fill="#923900" stroke="#923900" stroke-width="0.5"/><polygon points="696.1,311.7 710.6,312.9 708.4,320.9 691.8,319.7" fill="#ab4100" stroke="#ab4100" stroke-width="0.5"/><polygon points="691.8,319.7 708.4,320.9 706.4,330.3 687.8,328.8" fill="#b44300" stroke="#b44300" stroke-width="0.5"/><polygon points="687.8,328.8 706.4,330.3 704.5,340.7 684.1,338.9" fill="#ca4a00" stroke="#ca4a00" stroke-width="0.5"/><polygon points="684.1,338.9 704.5,340.7 702.8,352.0 680.6,350.0" fill="#d14b00" stroke="#d14b00" stroke-width="0.5"/><polygon points="680.6,350.0 702.8,352.0 701.2,364.2 677.5,362.1" fill="#e25000" stroke="#e25000" stroke-width="0.5"/><polygon points="677.5,362.1 701.2,364.2 699.9,377.2 674.8,375.1" fill="#e75100" stroke="#e75100" stroke-width="0.5"/><polygon points="674.8,375.1 699.9,377.2 698.7,390.9 672.5,388.8" fill="#f25300" stroke="#f25300" stroke-width="0.5"/><polygon points="672.5,388.8 698.7,390.9 697.7,405.2 670.5,403.1" fill="#f55300" stroke="#f55300" stroke-width="0.5"/><polygon points="670.5,403.1 697.7,405.2 696.9,420.0 669.0,418.0" fill="#f85400" stroke="#f85400" stroke-width="0.5"/><polygon points="669.0,418.0 696.9,420.0 696.4,435.1 667.9,433.2" fill="#f85300" stroke="#f85300" stroke-width="0.5"/><polygon points="667.9,433.2 696.4,435.1 696.1,450.5 667.2,448.8" fill="#f45200" stroke="#f45200" stroke-width="0.5"/><polygon points="667.2,448.8 696.1,450.5 695.9,466.0 667.0,464.4" fill="#f15000" stroke="#f15000" stroke-width="0.5"/><polygon points="667.0,464.4 695.9,466.0 696.1,481.6 667.2,480.1" fill="#e64d00" stroke="#e64d00" stroke-width="0.5"/><polygon points="667.2,480.1 696.1,481.6 696.4,497.0 667.9,495.6" fill="#e14b00" stroke="#e14b00" stroke-width="0.5"/><polygon points="667.9,495.6 696.4,497.0 696.9,512.2 669.0,510.9" fill="#cf4500" stroke="#cf4500" stroke-width="0.5"/><polygon points="669.0,510.9 696.9,512.2 697.7,527.1 670.5,525.9" fill="#c74300" stroke="#c74300" stroke-width="0.5"/><polygon points="670.5,525.9 697.7,527.1 698.7,541.5 672.5,540.4" fill="#b13c00" stroke="#b13c00" stroke-width="0.5"/><polygon points="672.5,540.4 698.7,541.5 699.9,555.3 674.8,554.3" fill="#a83a00" stroke="#a83a00" stroke-width="0.5"/><polygon points="674.8,554.3 699.9,555.3 701.2,568.5 677.5,567.5" fill="#8f3200" stroke="#8f3200" stroke-width="0.5"/><polygon points="677.5,567.5 701.2,568.5 702.8,581.0 680.6,579.9" fill="#862f00" stroke="#862f00" stroke-width="0.5"/><polygon points="680.6,579.9 702.8,581.0 704.5,592.5 684.1,591.5" fill="#6c2700" stroke="#6c2700" stroke-width="0.5"/><polygon points="684.1,591.5 704.5,592.5 706.4,603.0 687.8,602.2" fill="#632400" stroke="#632400" stroke-width="0.5"/><polygon points="687.8,602.2 706.4,603.0 708.4,612.3 691.8,611.8" fill="#4c1c00" stroke="#4c1c00" stroke-width="0.5"/><polygon points="691.8,611.8 708.4,612.3 710.6,620.5 696.1,620.3" fill="#441a00" stroke="#441a00" stroke-width="0.5"/><polygon points="696.1,620.3 710.6,620.5 712.9,627.6 700.6,627.8" fill="#321300" stroke="#321300" stroke-width="0.5"/><polygon points="700.6,627.8 712.9,627.6 715.2,633.4 705.3,634.0" fill="#2d1100" stroke="#2d1100" stroke-width="0.5"/><polygon points="705.3,634.0 715.2,633.4 717.7,637.9 710.2,638.3" fill="#240e00" stroke="#240e00" stroke-width="0.5"/><polygon points="710.2,638.3 717.7,637.9 720.2,641.2 715.1,641.4" fill="#230e00" stroke="#230e00" stroke-width="0.5"/><polygon points="715.1,641.4 720.2,641.2 722.7,643.1 720.2,643.2" fill="#230f00" stroke="#230f00" stroke-width="0.5"/><polygon points="720.2,643.2 722.7,643.1 725.2,643.7 725.2,643.7" fill="#230f00" stroke="#230f00" stroke-width="0.5"/><polygon points="725.2,291.4 725.2,291.4 725.2,292.1 722.7,291.7" fill="#471f00" stroke="#471f00" stroke-width="0.5"/><polygon points="722.7,291.7 725.2,292.1 725.2,294.1 720.2,293.4" fill="#4f2200" stroke="#4f2200" stroke-width="0.5"/><polygon points="720.2,293.4 725.2,294.1 725.2,297.4 717.7,296.3" fill="#652c00" stroke="#652c00" stroke-width="0.5"/><polygon points="717.7,296.3 725.2,297.4 725.2,302.0 715.2,300.6" fill="#6f2f00" stroke="#6f2f00" stroke-width="0.5"/><polygon points="715.2,300.6 725.2,302.0 725.2,307.9 712.9,306.1" fill="#873900" stroke="#873900" stroke-width="0.5"/><polygon points="712.9,306.1 725.2,307.9 725.2,315.0 710.6,312.9" fill="#913d00" stroke="#913d00" stroke-width="0.5"/><polygon points="710.6,312.9 725.2,315.0 725.2,323.3 708.4,320.9" fill="#a94700" stroke="#a94700" stroke-width="0.5"/><polygon points="708.4,320.9 725.2,323.3 725.2,332.6 706.4,330.3" fill="#b14a00" stroke="#b14a00" stroke-width="0.5"/><polygon points="706.4,330.3 725.2,332.6 725.2,343.0 704.5,340.7" fill="#c75200" stroke="#c75200" stroke-width="0.5"/><polygon points="704.5,340.7 725.2,343.0 725.2,354.3 702.8,352.0" fill="#ce5500" stroke="#ce5500" stroke-width="0.5"/><polygon points="702.8,352.0 725.2,354.3 725.2,366.5 701.2,364.2" fill="#de5b00" stroke="#de5b00" stroke-width="0.5"/><polygon points="701.2,364.2 725.2,366.5 725.2,379.5 699.9,377.2" fill="#e35d00" stroke="#e35d00" stroke-width="0.5"/><polygon points="699.9,377.2 725.2,379.5 725.2,393.1 698.7,390.9" fill="#ee6100" stroke="#ee6100" stroke-width="0.5"/><polygon points="698.7,390.9 725.2,393.1 725.2,407.3 697.7,405.2" fill="#f06100" stroke="#f06100" stroke-width="0.5"/><polygon points="697.7,405.2 725.2,407.3 725.2,422.0 696.9,420.0" fill="#f36200" stroke="#f36200" stroke-width="0.5"/><polygon points="696.9,420.0 725.2,422.0 725.2,437.0 696.4,435.1" fill="#f36200" stroke="#f36200" stroke-width="0.5"/><polygon points="696.4,435.1 725.2,437.0 725.2,452.2 696.1,450.5" fill="#ef6000" stroke="#ef6000" stroke-width="0.5"/><polygon points="696.1,450.5 725.2,452.2 725.2,467.5 695.9,466.0" fill="#ec5f00" stroke="#ec5f00" stroke-width="0.5"/><polygon points="695.9,466.0 725.2,467.5 725.2,482.9 696.1,481.6" fill="#e15b00" stroke="#e15b00" stroke-width="0.5"/><polygon points="696.1,481.6 725.2,482.9 725.2,498.1 696.4,497.0" fill="#dc5800" stroke="#dc5800" stroke-width="0.5"/><polygon points="696.4,497.0 725.2,498.1 725.2,513.1 696.9,512.2" fill="#ca5200" stroke="#ca5200" stroke-width="0.5"/><polygon points="696.9,512.2 725.2,513.1 725.2,527.8 697.7,527.1" fill="#c34f00" stroke="#c34f00" stroke-width="0.5"/><polygon points="697.7,527.1 725.2,527.8 725.2,542.0 698.7,541.5" fill="#ad4600" stroke="#ad4600" stroke-width="0.5"/><polygon points="698.7,541.5 725.2,542.0 725.2,555.6 699.9,555.3" fill="#a44300" stroke="#a44300" stroke-width="0.5"/><polygon points="699.9,555.3 725.2,555.6 725.2,568.6 701.2,568.5" fill="#8c3900" stroke="#8c3900" stroke-width="0.5"/><polygon points="701.2,568.5 725.2,568.6 725.2,580.8 702.8,581.0" fill="#833500" stroke="#833500" stroke-width="0.5"/><polygon points="702.8,581.0 725.2,580.8 725.2,592.1 704.5,592.5" fill="#6a2c00" stroke="#6a2c00" stroke-width="0.5"/><polygon points="704.5,592.5 725.2,592.1 725.2,602.5 706.4,603.0" fill="#612800" stroke="#612800" stroke-width="0.5"/><polygon points="706.4,603.0 725.2,602.5 725.2,611.8 708.4,612.3" fill="#4b1f00" stroke="#4b1f00" stroke-width="0.5"/><polygon points="708.4,612.3 725.2,611.8 725.2,620.1 710.6,620.5" fill="#431c00" stroke="#431c00" stroke-width="0.5"/><polygon points="710.6,620.5 725.2,620.1 725.2,627.2 712.9,627.6" fill="#311500" stroke="#311500" stroke-width="0.5"/><polygon points="712.9,627.6 725.2,627.2 725.2,633.1 715.2,633.4" fill="#2c1200" stroke="#2c1200" stroke-width="0.5"/><polygon points="715.2,633.4 725.2,633.1 725.2,637.7 717.7,637.9" fill="#240f00" stroke="#240f00" stroke-width="0.5"/><polygon points="717.7,637.9 725.2,637.7 725.2,641.0 720.2,641.2" fill="#230f00" stroke="#230f00" stroke-width="0.5"/><polygon points="720.2,641.2 725.2,641.0 725.2,643.0 722.7,643.1" fill="#230f00" stroke="#230f00" stroke-width="0.5"/><polygon points="722.7,643.1 725.2,643.0 725.2,643.7 725.2,643.7" fill="#230f00" stroke="#230f00" stroke-width="0.5"/><polygon points="725.2,291.4 725.2,291.4 727.8,292.4 725.2,292.1" fill="#461f00" stroke="#461f00" stroke-width="0.5"/><polygon points="725.2,292.1 727.8,292.4 730.3,294.7 725.2,294.1" fill="#4e2200" stroke="#4e2200" stroke-width="0.5"/><polygon points="725.2,294.1 730.3,294.7 732.8,298.4 725.2,297.4" fill="#632c00" stroke="#632c00" stroke-width="0.5"/><polygon points="725.2,297.4 732.8,298.4 735.3,303.3 725.2,302.0" fill="#6c3000" stroke="#6c3000" stroke-width="0.5"/><polygon points="725.2,302.0 735.3,303.3 737.6,309.4 725.2,307.9" fill="#823b00" stroke="#823b00" stroke-width="0.5"/><polygon points="725.2,307.9 737.6,309.4 739.9,316.7 725.2,315.0" fill="#8b4000" stroke="#8b4000" stroke-width="0.5"/><polygon points="725.2,315.0 739.9,316.7 742.1,325.1 725.2,323.3" fill="#a14a00" stroke="#a14a00" stroke-width="0.5"/><polygon points="725.2,323.3 742.1,325.1 744.1,334.6 725.2,332.6" fill="#a94f00" stroke="#a94f00" stroke-width="0.5"/><polygon points="725.2,332.6 744.1,334.6 746.0,345.1 725.2,343.0" fill="#bc5800" stroke="#bc5800" stroke-width="0.5"/><polygon points="725.2,343.0 746.0,345.1 747.7,356.5 725.2,354.3" fill="#c35c00" stroke="#c35c00" stroke-width="0.5"/><polygon points="725.2,354.3 747.7,356.5 749.3,368.7 725.2,366.5" fill="#d26300" stroke="#d26300" stroke-width="0.5"/><polygon points="725.2,366.5 749.3,368.7 750.6,381.7 725.2,379.5" fill="#d66600" stroke="#d66600" stroke-width="0.5"/><polygon points="725.2,379.5 750.6,381.7 751.8,395.3 725.2,393.1" fill="#df6a00" stroke="#df6a00" stroke-width="0.5"/><polygon points="725.2,393.1 751.8,395.3 752.8,409.4 725.2,407.3" fill="#e16c00" stroke="#e16c00" stroke-width="0.5"/><polygon points="725.2,407.3 752.8,409.4 753.6,424.0 725.2,422.0" fill="#e46d00" stroke="#e46d00" stroke-width="0.5"/><polygon points="725.2,422.0 753.6,424.0 754.1,438.9 725.2,437.0" fill="#e46d00" stroke="#e46d00" stroke-width="0.5"/><polygon points="725.2,437.0 754.1,438.9 754.4,454.1 725.2,452.2" fill="#df6b00" stroke="#df6b00" stroke-width="0.5"/><polygon points="725.2,452.2 754.4,454.1 754.6,469.3 725.2,467.5" fill="#dc6a00" stroke="#dc6a00" stroke-width="0.5"/><polygon points="725.2,467.5 754.6,469.3 754.4,484.5 725.2,482.9" fill="#d26500" stroke="#d26500" stroke-width="0.5"/><polygon points="725.2,482.9 754.4,484.5 754.1,499.6 725.2,498.1" fill="#cc6200" stroke="#cc6200" stroke-width="0.5"/><polygon points="725.2,498.1 754.1,499.6 753.6,514.5 725.2,513.1" fill="#bc5a00" stroke="#bc5a00" stroke-width="0.5"/><polygon points="725.2,513.1 753.6,514.5 752.8,529.0 725.2,527.8" fill="#b55700" stroke="#b55700" stroke-width="0.5"/><polygon points="725.2,527.8 752.8,529.0 751.8,543.0 725.2,542.0" fill="#a14d00" stroke="#a14d00" stroke-width="0.5"/><polygon points="725.2,542.0 751.8,543.0 750.6,556.5 725.2,555.6" fill="#984900" stroke="#984900" stroke-width="0.5"/><polygon points="725.2,555.6 750.6,556.5 749.3,569.3 725.2,568.6" fill="#823e00" stroke="#823e00" stroke-width="0.5"/><polygon points="725.2,568.6 749.3,569.3 747.7,581.3 725.2,580.8" fill="#793900" stroke="#793900" stroke-width="0.5"/><polygon points="725.2,580.8 747.7,581.3 746.0,592.5 725.2,592.1" fill="#622e00" stroke="#622e00" stroke-width="0.5"/><polygon points="725.2,592.1 746.0,592.5 744.1,602.7 725.2,602.5" fill="#5a2a00" stroke="#5a2a00" stroke-width="0.5"/><polygon points="725.2,602.5 744.1,602.7 742.1,612.0 725.2,611.8" fill="#462000" stroke="#462000" stroke-width="0.5"/><polygon points="725.2,611.8 742.1,612.0 739.9,620.1 725.2,620.1" fill="#3e1d00" stroke="#3e1d00" stroke-width="0.5"/><polygon points="725.2,620.1 739.9,620.1 737.6,627.1 725.2,627.2" fill="#2f1500" stroke="#2f1500" stroke-width="0.5"/><polygon points="725.2,627.2 737.6,627.1 735.3,633.0 725.2,633.1" fill="#2a1300" stroke="#2a1300" stroke-width="0.5"/><polygon points="725.2,633.1 735.3,633.0 732.8,637.6 725.2,637.7" fill="#231000" stroke="#231000" stroke-width="0.5"/><polygon points="725.2,637.7 732.8,637.6 730.3,640.9 725.2,641.0" fill="#231000" stroke="#231000" stroke-width="0.5"/><polygon points="725.2,641.0 730.3,640.9 727.8,643.0 725.2,643.0" fill="#230f00" stroke="#230f00" stroke-width="0.5"/><polygon points="725.2,643.0 727.8,643.0 725.2,643.7 725.2,643.7" fill="#230f00" stroke="#230f00" stroke-width="0.5"/><polygon points="725.2,291.4 725.2,291.4 730.3,292.7 727.8,292.4" fill="#461f00" stroke="#461f00" stroke-width="0.5"/><polygon points="727.8,292.4 730.3,292.7 735.4,295.4 730.3,294.7" fill="#4d2300" stroke="#4d2300" stroke-width="0.5"/><polygon points="730.3,294.7 735.4,295.4 740.3,299.2 732.8,298.4" fill="#622d00" stroke="#622d00" stroke-width="0.5"/><polygon points="732.8,298.4 740.3,299.2 745.2,304.3 735.3,303.3" fill="#6a3200" stroke="#6a3200" stroke-width="0.5"/><polygon points="735.3,303.3 745.2,304.3 749.9,310.6 737.6,309.4" fill="#803e00" stroke="#803e00" stroke-width="0.5"/><polygon points="737.6,309.4 749.9,310.6 754.4,318.0 739.9,316.7" fill="#884400" stroke="#884400" stroke-width="0.5"/><polygon points="739.9,316.7 754.4,318.0 758.7,326.5 742.1,325.1" fill="#9e5000" stroke="#9e5000" stroke-width="0.5"/><polygon points="742.1,325.1 758.7,326.5 762.7,336.3 744.1,334.6" fill="#a55600" stroke="#a55600" stroke-width="0.5"/><polygon points="744.1,334.6 762.7,336.3 766.4,347.2 746.0,345.1" fill="#b86100" stroke="#b86100" stroke-width="0.5"/><polygon points="746.0,345.1 766.4,347.2 769.9,358.8 747.7,356.5" fill="#be6600" stroke="#be6600" stroke-width="0.5"/><polygon points="747.7,356.5 769.9,358.8 773.0,371.2 749.3,368.7" fill="#cd6f00" stroke="#cd6f00" stroke-width="0.5"/><polygon points="749.3,368.7 773.0,371.2 775.7,384.3 750.6,381.7" fill="#d17300" stroke="#d17300" stroke-width="0.5"/><polygon points="750.6,381.7 775.7,384.3 778.0,397.9 751.8,395.3" fill="#da7900" stroke="#da7900" stroke-width="0.5"/><polygon points="751.8,395.3 778.0,397.9 780.0,412.0 752.8,409.4" fill="#dc7b00" stroke="#dc7b00" stroke-width="0.5"/><polygon points="752.8,409.4 780.0,412.0 781.5,426.5 753.6,424.0" fill="#de7d00" stroke="#de7d00" stroke-width="0.5"/><polygon points="753.6,424.0 781.5,426.5 782.6,441.2 754.1,438.9" fill="#de7e00" stroke="#de7e00" stroke-width="0.5"/><polygon points="754.1,438.9 782.6,441.2 783.3,456.1 754.4,454.1" fill="#d97b00" stroke="#d97b00" stroke-width="0.5"/><polygon points="754.4,454.1 783.3,456.1 783.5,471.1 754.6,469.3" fill="#d67a00" stroke="#d67a00" stroke-width="0.5"/><polygon points="754.6,469.3 783.5,471.1 783.3,486.1 754.4,484.5" fill="#cc7400" stroke="#cc7400" stroke-width="0.5"/><polygon points="754.4,484.5 783.3,486.1 782.6,500.9 754.1,499.6" fill="#c77100" stroke="#c77100" stroke-width="0.5"/><polygon points="754.1,499.6 782.6,500.9 781.5,515.5 753.6,514.5" fill="#b76700" stroke="#b76700" stroke-width="0.5"/><polygon points="753.6,514.5 781.5,515.5 780.0,529.8 752.8,529.0" fill="#b06300" stroke="#b06300" stroke-width="0.5"/><polygon points="752.8,529.0 780.0,529.8 778.0,543.7 751.8,543.0" fill="#9c5700" stroke="#9c5700" stroke-width="0.5"/><polygon points="751.8,543.0 778.0,543.7 775.7,557.0 750.6,556.5" fill="#945200" stroke="#945200" stroke-width="0.5"/><polygon points="750.6,556.5 775.7,557.0 773.0,569.7 749.3,569.3" fill="#7e4500" stroke="#7e4500" stroke-width="0.5"/><polygon points="749.3,569.3 773.0,569.7 769.9,581.7 747.7,581.3" fill="#754000" stroke="#754000" stroke-width="0.5"/><polygon points="747.7,581.3 769.9,581.7 766.4,592.9 746.0,592.5" fill="#5f3300" stroke="#5f3300" stroke-width="0.5"/><polygon points="746.0,592.5 766.4,592.9 762.7,603.3 744.1,602.7" fill="#572e00" stroke="#572e00" stroke-width="0.5"/><polygon points="744.1,602.7 762.7,603.3 758.7,612.7 742.1,612.0" fill="#432300" stroke="#432300" stroke-width="0.5"/><polygon points="742.1,612.0 758.7,612.7 754.4,620.6 739.9,620.1" fill="#3d1f00" stroke="#3d1f00" stroke-width="0.5"/><polygon points="739.9,620.1 754.4,620.6 749.9,627.5 737.6,627.1" fill="#2e1700" stroke="#2e1700" stroke-width="0.5"/><polygon points="737.6,627.1 749.9,627.5 745.2,633.1 735.3,633.0" fill="#291400" stroke="#291400" stroke-width="0.5"/><polygon points="735.3,633.0 745.2,633.1 740.3,637.6 732.8,637.6" fill="#231100" stroke="#231100" stroke-width="0.5"/><polygon points="732.8,637.6 740.3,637.6 735.4,640.9 730.3,640.9" fill="#231000" stroke="#231000" stroke-width="0.5"/><polygon points="730.3,640.9 735.4,640.9 730.3,642.9 727.8,643.0" fill="#231000" stroke="#231000" stroke-width="0.5"/><polygon points="727.8,643.0 730.3,642.9 725.2,643.7 725.2,643.7" fill="#230f00" stroke="#230f00" stroke-width="0.5"/><polygon points="725.2,291.4 725.2,291.4 732.8,293.0 730.3,292.7" fill="#451f00" stroke="#451f00" stroke-width="0.5"/><polygon points="730.3,292.7 732.8,293.0 740.3,295.9 735.4,295.4" fill="#4b2300" stroke="#4b2300" stroke-width="0.5"/><polygon points="735.4,295.4 740.3,295.9 747.6,300.0 740.3,299.2" fill="#5e2d00" stroke="#5e2d00" stroke-width="0.5"/><polygon points="740.3,299.2 747.6,300.0 754.8,305.1 745.2,304.3" fill="#653300" stroke="#653300" stroke-width="0.5"/><polygon points="745.2,304.3 754.8,305.1 761.8,311.6 749.9,310.6" fill="#783f00" stroke="#783f00" stroke-width="0.5"/><polygon points="749.9,310.6 761.8,311.6 768.5,319.9 754.4,318.0" fill="#804500" stroke="#804500" stroke-width="0.5"/><polygon points="754.4,318.0 768.5,319.9 774.8,329.1 758.7,326.5" fill="#935100" stroke="#935100" stroke-width="0.5"/><polygon points="758.7,326.5 774.8,329.1 780.8,339.1 762.7,336.3" fill="#9a5800" stroke="#9a5800" stroke-width="0.5"/><polygon points="762.7,336.3 780.8,339.1 786.4,350.0 766.4,347.2" fill="#aa6300" stroke="#aa6300" stroke-width="0.5"/><polygon points="766.4,347.2 786.4,350.0 791.5,361.6 769.9,358.8" fill="#b06900" stroke="#b06900" stroke-width="0.5"/><polygon points="769.9,358.8 791.5,361.6 796.1,374.2 773.0,371.2" fill="#bc7300" stroke="#bc7300" stroke-width="0.5"/><polygon points="773.0,371.2 796.1,374.2 800.1,387.3 775.7,384.3" fill="#c07800" stroke="#c07800" stroke-width="0.5"/><polygon points="775.7,384.3 800.1,387.3 803.6,401.0 778.0,397.9" fill="#c77f00" stroke="#c77f00" stroke-width="0.5"/><polygon points="778.0,397.9 803.6,401.0 806.5,415.1 780.0,412.0" fill="#c98200" stroke="#c98200" stroke-width="0.5"/><polygon points="780.0,412.0 806.5,415.1 808.8,429.5 781.5,426.5" fill="#cb8500" stroke="#cb8500" stroke-width="0.5"/><polygon points="781.5,426.5 808.8,429.5 810.4,444.2 782.6,441.2" fill="#ca8600" stroke="#ca8600" stroke-width="0.5"/><polygon points="782.6,441.2 810.4,444.2 811.4,458.9 783.3,456.1" fill="#c68400" stroke="#c68400" stroke-width="0.5"/><polygon points="783.3,456.1 811.4,458.9 811.7,473.7 783.5,471.1" fill="#c38200" stroke="#c38200" stroke-width="0.5"/><polygon points="783.5,471.1 811.7,473.7 811.4,488.5 783.3,486.1" fill="#b97b00" stroke="#b97b00" stroke-width="0.5"/><polygon points="783.3,486.1 811.4,488.5 810.4,503.1 782.6,500.9" fill="#b47700" stroke="#b47700" stroke-width="0.5"/><polygon points="782.6,500.9 810.4,503.1 808.8,517.4 781.5,515.5" fill="#a46d00" stroke="#a46d00" stroke-width="0.5"/><polygon points="781.5,515.5 808.8,517.4 806.5,531.3 780.0,529.8" fill="#9e6700" stroke="#9e6700" stroke-width="0.5"/><polygon points="780.0,529.8 806.5,531.3 803.6,544.8 778.0,543.7" fill="#8b5a00" stroke="#8b5a00" stroke-width="0.5"/><polygon points="778.0,543.7 803.6,544.8 800.1,557.7 775.7,557.0" fill="#845400" stroke="#845400" stroke-width="0.5"/><polygon points="775.7,557.0 800.1,557.7 796.1,570.1 773.0,569.7" fill="#704600" stroke="#704600" stroke-width="0.5"/><polygon points="773.0,569.7 796.1,570.1 791.5,581.7 769.9,581.7" fill="#684000" stroke="#684000" stroke-width="0.5"/><polygon points="769.9,581.7 791.5,581.7 786.4,592.7 766.4,592.9" fill="#553300" stroke="#553300" stroke-width="0.5"/><polygon points="766.4,592.9 786.4,592.7 780.8,602.8 762.7,603.3" fill="#4d2d00" stroke="#4d2d00" stroke-width="0.5"/><polygon points="762.7,603.3 780.8,602.8 774.8,612.1 758.7,612.7" fill="#3d2200" stroke="#3d2200" stroke-width="0.5"/><polygon points="758.7,612.7 774.8,612.1 768.5,620.5 754.4,620.6" fill="#371e00" stroke="#371e00" stroke-width="0.5"/><polygon points="754.4,620.6 768.5,620.5 761.8,627.9 749.9,627.5" fill="#2a1700" stroke="#2a1700" stroke-width="0.5"/><polygon points="749.9,627.5 761.8,627.9 754.8,633.5 745.2,633.1" fill="#271400" stroke="#271400" stroke-width="0.5"/><polygon points="745.2,633.1 754.8,633.5 747.6,637.8 740.3,637.6" fill="#231200" stroke="#231200" stroke-width="0.5"/><polygon points="740.3,637.6 747.6,637.8 740.3,640.9 735.4,640.9" fill="#231100" stroke="#231100" stroke-width="0.5"/><polygon points="735.4,640.9 740.3,640.9 732.8,642.9 730.3,642.9" fill="#231000" stroke="#231000" stroke-width="0.5"/><polygon points="730.3,642.9 732.8,642.9 725.2,643.7 725.2,643.7" fill="#231000" stroke="#231000" stroke-width="0.5"/><polygon points="725.2,291.4 725.2,291.4 735.1,293.3 732.8,293.0" fill="#451f00" stroke="#451f00" stroke-width="0.5"/><polygon points="732.8,293.0 735.1,293.3 745.0,296.4 740.3,295.9" fill="#4b2300" stroke="#4b2300" stroke-width="0.5"/><polygon points="740.3,295.9 745.0,296.4 754.6,300.5 747.6,300.0" fill="#5c2e00" stroke="#5c2e00" stroke-width="0.5"/><polygon points="747.6,300.0 754.6,300.5 764.1,306.3 754.8,305.1" fill="#633400" stroke="#633400" stroke-width="0.5"/><polygon points="754.8,305.1 764.1,306.3 773.2,313.7 761.8,311.6" fill="#764100" stroke="#764100" stroke-width="0.5"/><polygon points="761.8,311.6 773.2,313.7 782.0,322.1 768.5,319.9" fill="#7c4800" stroke="#7c4800" stroke-width="0.5"/><polygon points="768.5,319.9 782.0,322.1 790.4,331.2 774.8,329.1" fill="#8e5500" stroke="#8e5500" stroke-width="0.5"/><polygon points="774.8,329.1 790.4,331.2 798.3,341.7 780.8,339.1" fill="#955d00" stroke="#955d00" stroke-width="0.5"/><polygon points="780.8,339.1 798.3,341.7 805.6,352.9 786.4,350.0" fill="#a46b00" stroke="#a46b00" stroke-width="0.5"/><polygon points="786.4,350.0 805.6,352.9 812.2,364.8 791.5,361.6" fill="#aa7200" stroke="#aa7200" stroke-width="0.5"/><polygon points="791.5,361.6 812.2,364.8 818.3,377.4 796.1,374.2" fill="#b67e00" stroke="#b67e00" stroke-width="0.5"/><polygon points="796.1,374.2 818.3,377.4 823.6,390.4 800.1,387.3" fill="#b98400" stroke="#b98400" stroke-width="0.5"/><polygon points="800.1,387.3 823.6,390.4 828.2,403.9 803.6,401.0" fill="#c08c00" stroke="#c08c00" stroke-width="0.5"/><polygon points="803.6,401.0 828.2,403.9 832.0,417.7 806.5,415.1" fill="#c29000" stroke="#c29000" stroke-width="0.5"/><polygon points="806.5,415.1 832.0,417.7 834.9,431.9 808.8,429.5" fill="#c39300" stroke="#c39300" stroke-width="0.5"/><polygon points="808.8,429.5 834.9,431.9 837.1,446.3 810.4,444.2" fill="#c39400" stroke="#c39400" stroke-width="0.5"/><polygon points="810.4,444.2 837.1,446.3 838.4,460.8 811.4,458.9" fill="#be9100" stroke="#be9100" stroke-width="0.5"/><polygon points="811.4,458.9 838.4,460.8 838.8,475.4 811.7,473.7" fill="#bb9000" stroke="#bb9000" stroke-width="0.5"/><polygon points="811.7,473.7 838.8,475.4 838.4,490.0 811.4,488.5" fill="#b18800" stroke="#b18800" stroke-width="0.5"/><polygon points="811.4,488.5 838.4,490.0 837.1,504.4 810.4,503.1" fill="#ac8400" stroke="#ac8400" stroke-width="0.5"/><polygon points="810.4,503.1 837.1,504.4 834.9,518.6 808.8,517.4" fill="#9d7700" stroke="#9d7700" stroke-width="0.5"/><polygon points="808.8,517.4 834.9,518.6 832.0,532.4 806.5,531.3" fill="#977100" stroke="#977100" stroke-width="0.5"/><polygon points="806.5,531.3 832.0,532.4 828.2,545.8 803.6,544.8" fill="#856200" stroke="#856200" stroke-width="0.5"/><polygon points="803.6,544.8 828.2,545.8 823.6,558.8 800.1,557.7" fill="#7e5b00" stroke="#7e5b00" stroke-width="0.5"/><polygon points="800.1,557.7 823.6,558.8 818.3,571.2 796.1,570.1" fill="#6a4c00" stroke="#6a4c00" stroke-width="0.5"/><polygon points="796.1,570.1 818.3,571.2 812.2,582.8 791.5,581.7" fill="#634500" stroke="#634500" stroke-width="0.5"/><polygon points="791.5,581.7 812.2,582.8 805.6,593.3 786.4,592.7" fill="#503600" stroke="#503600" stroke-width="0.5"/><polygon points="786.4,592.7 805.6,593.3 798.3,603.0 780.8,602.8" fill="#4a3000" stroke="#4a3000" stroke-width="0.5"/><polygon points="780.8,602.8 798.3,603.0 790.4,611.9 774.8,612.1" fill="#3a2400" stroke="#3a2400" stroke-width="0.5"/><polygon points="774.8,612.1 790.4,611.9 782.0,620.0 768.5,620.5" fill="#341f00" stroke="#341f00" stroke-width="0.5"/><polygon points="768.5,620.5 782.0,620.0 773.2,627.2 761.8,627.9" fill="#291800" stroke="#291800" stroke-width="0.5"/><polygon points="761.8,627.9 773.2,627.2 764.1,633.5 754.8,633.5" fill="#261500" stroke="#261500" stroke-width="0.5"/><polygon points="754.8,633.5 764.1,633.5 754.6,638.1 747.6,637.8" fill="#241300" stroke="#241300" stroke-width="0.5"/><polygon points="747.6,637.8 754.6,638.1 745.0,641.0 740.3,640.9" fill="#231200" stroke="#231200" stroke-width="0.5"/><polygon points="740.3,640.9 745.0,641.0 735.1,642.9 732.8,642.9" fill="#231100" stroke="#231100" stroke-width="0.5"/><polygon points="732.8,642.9 735.1,642.9 725.2,643.7 725.2,643.7" fill="#231000" stroke="#231000" stroke-width="0.5"/><polygon points="725.2,291.4 725.2,291.4 737.4,293.6 735.1,293.3" fill="#431e00" stroke="#431e00" stroke-width="0.5"/><polygon points="735.1,293.3 737.4,293.6 749.4,296.8 745.0,296.4" fill="#492300" stroke="#492300" stroke-width="0.5"/><polygon points="745.0,296.4 749.4,296.8 761.3,301.1 754.6,300.5" fill="#572d00" stroke="#572d00" stroke-width="0.5"/><polygon points="754.6,300.5 761.3,301.1 772.9,307.9 764.1,306.3" fill="#5d3300" stroke="#5d3300" stroke-width="0.5"/><polygon points="764.1,306.3 772.9,307.9 784.1,315.4 773.2,313.7" fill="#6c3f00" stroke="#6c3f00" stroke-width="0.5"/><polygon points="773.2,313.7 784.1,315.4 794.9,324.0 782.0,322.1" fill="#724600" stroke="#724600" stroke-width="0.5"/><polygon points="782.0,322.1 794.9,324.0 805.1,333.8 790.4,331.2" fill="#805400" stroke="#805400" stroke-width="0.5"/><polygon points="790.4,331.2 805.1,333.8 814.8,344.3 798.3,341.7" fill="#865c00" stroke="#865c00" stroke-width="0.5"/><polygon points="798.3,341.7 814.8,344.3 823.7,355.5 805.6,352.9" fill="#936900" stroke="#936900" stroke-width="0.5"/><polygon points="805.6,352.9 823.7,355.5 831.9,367.3 812.2,364.8" fill="#977100" stroke="#977100" stroke-width="0.5"/><polygon points="812.2,364.8 831.9,367.3 839.3,379.5 818.3,377.4" fill="#a17c00" stroke="#a17c00" stroke-width="0.5"/><polygon points="818.3,377.4 839.3,379.5 845.9,393.0 823.6,390.4" fill="#a38300" stroke="#a38300" stroke-width="0.5"/><polygon points="823.6,390.4 845.9,393.0 851.5,406.8 828.2,403.9" fill="#a58b00" stroke="#a58b00" stroke-width="0.5"/><polygon points="828.2,403.9 851.5,406.8 856.1,420.9 832.0,417.7" fill="#a29000" stroke="#a29000" stroke-width="0.5"/><polygon points="832.0,417.7 856.1,420.9 859.8,435.2 834.9,431.9" fill="#a09400" stroke="#a09400" stroke-width="0.5"/><polygon points="834.9,431.9 859.8,435.2 862.4,449.6 837.1,446.3" fill="#9d9600" stroke="#9d9600" stroke-width="0.5"/><polygon points="837.1,446.3 862.4,449.6 864.0,464.1 838.4,460.8" fill="#989300" stroke="#989300" stroke-width="0.5"/><polygon points="838.4,460.8 864.0,464.1 864.5,478.6 838.8,475.4" fill="#949100" stroke="#949100" stroke-width="0.5"/><polygon points="838.8,475.4 864.5,478.6 864.0,492.9 838.4,490.0" fill="#8b8800" stroke="#8b8800" stroke-width="0.5"/><polygon points="838.4,490.0 864.0,492.9 862.4,507.0 837.1,504.4" fill="#888400" stroke="#888400" stroke-width="0.5"/><polygon points="837.1,504.4 862.4,507.0 859.8,520.8 834.9,518.6" fill="#7c7600" stroke="#7c7600" stroke-width="0.5"/><polygon points="834.9,518.6 859.8,520.8 856.1,534.2 832.0,532.4" fill="#786f00" stroke="#786f00" stroke-width="0.5"/><polygon points="832.0,532.4 856.1,534.2 851.5,547.1 828.2,545.8" fill="#6b5f00" stroke="#6b5f00" stroke-width="0.5"/><polygon points="828.2,545.8 851.5,547.1 845.9,559.5 823.6,558.8" fill="#675700" stroke="#675700" stroke-width="0.5"/><polygon points="823.6,558.8 845.9,559.5 839.3,571.4 818.3,571.2" fill="#594700" stroke="#594700" stroke-width="0.5"/><polygon points="818.3,571.2 839.3,571.4 831.9,582.8 812.2,582.8" fill="#534000" stroke="#534000" stroke-width="0.5"/><polygon points="812.2,582.8 831.9,582.8 823.7,593.7 805.6,593.3" fill="#443200" stroke="#443200" stroke-width="0.5"/><polygon points="805.6,593.3 823.7,593.7 814.8,603.9 798.3,603.0" fill="#3e2c00" stroke="#3e2c00" stroke-width="0.5"/><polygon points="798.3,603.0 814.8,603.9 805.1,612.3 790.4,611.9" fill="#322200" stroke="#322200" stroke-width="0.5"/><polygon points="790.4,611.9 805.1,612.3 794.9,620.0 782.0,620.0" fill="#2e1e00" stroke="#2e1e00" stroke-width="0.5"/><polygon points="782.0,620.0 794.9,620.0 784.1,626.9 773.2,627.2" fill="#261700" stroke="#261700" stroke-width="0.5"/><polygon points="773.2,627.2 784.1,626.9 772.9,633.0 764.1,633.5" fill="#241500" stroke="#241500" stroke-width="0.5"/><polygon points="764.1,633.5 772.9,633.0 761.3,638.3 754.6,638.1" fill="#241300" stroke="#241300" stroke-width="0.5"/><polygon points="754.6,638.1 761.3,638.3 749.4,641.2 745.0,641.0" fill="#231200" stroke="#231200" stroke-width="0.5"/><polygon points="745.0,641.0 749.4,641.2 737.4,642.9 735.1,642.9" fill="#231100" stroke="#231100" stroke-width="0.5"/><polygon points="735.1,642.9 737.4,642.9 725.2,643.7 725.2,643.7" fill="#231000" stroke="#231000" stroke-width="0.5"/><polygon points="725.2,291.4 725.2,291.4 739.5,293.8 737.4,293.6" fill="#431e00" stroke="#431e00" stroke-width="0.5"/><polygon points="737.4,293.6 739.5,293.8 753.6,297.2 749.4,296.8" fill="#482300" stroke="#482300" stroke-width="0.5"/><polygon points="749.4,296.8 753.6,297.2 767.5,302.4 761.3,301.1" fill="#552d00" stroke="#552d00" stroke-width="0.5"/><polygon points="761.3,301.1 767.5,302.4 781.1,309.2 772.9,307.9" fill="#5a3400" stroke="#5a3400" stroke-width="0.5"/><polygon points="772.9,307.9 781.1,309.2 794.2,317.0 784.1,315.4" fill="#684000" stroke="#684000" stroke-width="0.5"/><polygon points="784.1,315.4 794.2,317.0 806.8,326.1 794.9,324.0" fill="#6d4800" stroke="#6d4800" stroke-width="0.5"/><polygon points="794.9,324.0 806.8,326.1 818.9,336.0 805.1,333.8" fill="#7b5600" stroke="#7b5600" stroke-width="0.5"/><polygon points="805.1,333.8 818.9,336.0 830.2,346.4 814.8,344.3" fill="#805f00" stroke="#805f00" stroke-width="0.5"/><polygon points="814.8,344.3 830.2,346.4 840.6,357.4 823.7,355.5" fill="#8c6d00" stroke="#8c6d00" stroke-width="0.5"/><polygon points="823.7,355.5 840.6,357.4 850.3,370.0 831.9,367.3" fill="#8c7600" stroke="#8c7600" stroke-width="0.5"/><polygon points="831.9,367.3 850.3,370.0 858.9,383.0 839.3,379.5" fill="#8f8300" stroke="#8f8300" stroke-width="0.5"/><polygon points="839.3,379.5 858.9,383.0 866.6,396.2 845.9,393.0" fill="#8d8c00" stroke="#8d8c00" stroke-width="0.5"/><polygon points="845.9,393.0 866.6,396.2 873.2,409.7 851.5,406.8" fill="#8d9500" stroke="#8d9500" stroke-width="0.5"/><polygon points="851.5,406.8 873.2,409.7 878.6,423.3 856.1,420.9" fill="#889900" stroke="#889900" stroke-width="0.5"/><polygon points="856.1,420.9 878.6,423.3 882.9,437.2 859.8,435.2" fill="#839b00" stroke="#839b00" stroke-width="0.5"/><polygon points="859.8,435.2 882.9,437.2 886.0,451.3 862.4,449.6" fill="#7e9c00" stroke="#7e9c00" stroke-width="0.5"/><polygon points="862.4,449.6 886.0,451.3 887.8,465.5 864.0,464.1" fill="#779800" stroke="#779800" stroke-width="0.5"/><polygon points="864.0,464.1 887.8,465.5 888.4,479.9 864.5,478.6" fill="#749600" stroke="#749600" stroke-width="0.5"/><polygon points="864.5,478.6 888.4,479.9 887.8,494.2 864.0,492.9" fill="#6c8d00" stroke="#6c8d00" stroke-width="0.5"/><polygon points="864.0,492.9 887.8,494.2 886.0,508.3 862.4,507.0" fill="#6a8800" stroke="#6a8800" stroke-width="0.5"/><polygon points="862.4,507.0 886.0,508.3 882.9,522.2 859.8,520.8" fill="#627a00" stroke="#627a00" stroke-width="0.5"/><polygon points="859.8,520.8 882.9,522.2 878.6,535.8 856.1,534.2" fill="#617400" stroke="#617400" stroke-width="0.5"/><polygon points="856.1,534.2 878.6,535.8 873.2,549.0 851.5,547.1" fill="#586300" stroke="#586300" stroke-width="0.5"/><polygon points="851.5,547.1 873.2,549.0 866.6,561.4 845.9,559.5" fill="#575c00" stroke="#575c00" stroke-width="0.5"/><polygon points="845.9,559.5 866.6,561.4 858.9,572.8 839.3,571.4" fill="#4b4b00" stroke="#4b4b00" stroke-width="0.5"/><polygon points="839.3,571.4 858.9,572.8 850.3,583.5 831.9,582.8" fill="#494300" stroke="#494300" stroke-width="0.5"/><polygon points="831.9,582.8 850.3,583.5 840.6,593.7 823.7,593.7" fill="#3d3400" stroke="#3d3400" stroke-width="0.5"/><polygon points="823.7,593.7 840.6,593.7 830.2,603.5 814.8,603.9" fill="#3a2d00" stroke="#3a2d00" stroke-width="0.5"/><polygon points="814.8,603.9 830.2,603.5 818.9,612.7 805.1,612.3" fill="#2f2300" stroke="#2f2300" stroke-width="0.5"/><polygon points="805.1,612.3 818.9,612.7 806.8,620.4 794.9,620.0" fill="#2c1e00" stroke="#2c1e00" stroke-width="0.5"/><polygon points="794.9,620.0 806.8,620.4 794.2,626.9 784.1,626.9" fill="#251800" stroke="#251800" stroke-width="0.5"/><polygon points="784.1,626.9 794.2,626.9 781.1,632.7 772.9,633.0" fill="#241600" stroke="#241600" stroke-width="0.5"/><polygon points="772.9,633.0 781.1,632.7 767.5,637.9 761.3,638.3" fill="#241400" stroke="#241400" stroke-width="0.5"/><polygon points="761.3,638.3 767.5,637.9 753.6,641.3 749.4,641.2" fill="#241300" stroke="#241300" stroke-width="0.5"/><polygon points="749.4,641.2 753.6,641.3 739.5,642.9 737.4,642.9" fill="#231100" stroke="#231100" stroke-width="0.5"/><polygon points="737.4,642.9 739.5,642.9 725.2,643.7 725.2,643.7" fill="#231000" stroke="#231000" stroke-width="0.5"/><polygon points="725.2,291.4 725.2,291.4 741.4,294.1 739.5,293.8" fill="#411e00" stroke="#411e00" stroke-width="0.5"/><polygon points="739.5,293.8 741.4,294.1 757.4,297.4 753.6,297.2" fill="#452300" stroke="#452300" stroke-width="0.5"/><polygon points="753.6,297.2 757.4,297.4 773.2,303.4 767.5,302.4" fill="#4f2b00" stroke="#4f2b00" stroke-width="0.5"/><polygon points="767.5,302.4 773.2,303.4 788.6,310.3 781.1,309.2" fill="#533100" stroke="#533100" stroke-width="0.5"/><polygon points="781.1,309.2 788.6,310.3 803.5,318.7 794.2,317.0" fill="#5d3c00" stroke="#5d3c00" stroke-width="0.5"/><polygon points="794.2,317.0 803.5,318.7 817.8,327.9 806.8,326.1" fill="#624400" stroke="#624400" stroke-width="0.5"/><polygon points="806.8,326.1 817.8,327.9 831.4,337.6 818.9,336.0" fill="#6b5000" stroke="#6b5000" stroke-width="0.5"/><polygon points="818.9,336.0 831.4,337.6 844.2,348.3 830.2,346.4" fill="#6f5800" stroke="#6f5800" stroke-width="0.5"/><polygon points="830.2,346.4 844.2,348.3 856.1,360.4 840.6,357.4" fill="#716500" stroke="#716500" stroke-width="0.5"/><polygon points="840.6,357.4 856.1,360.4 867.0,372.7 850.3,370.0" fill="#6f6f00" stroke="#6f6f00" stroke-width="0.5"/><polygon points="850.3,370.0 867.0,372.7 876.9,385.1 858.9,383.0" fill="#6e7a00" stroke="#6e7a00" stroke-width="0.5"/><polygon points="858.9,383.0 876.9,385.1 885.5,397.7 866.6,396.2" fill="#677f00" stroke="#677f00" stroke-width="0.5"/><polygon points="866.6,396.2 885.5,397.7 893.0,411.4 873.2,409.7" fill="#628400" stroke="#628400" stroke-width="0.5"/><polygon points="873.2,409.7 893.0,411.4 899.2,425.7 878.6,423.3" fill="#5c8800" stroke="#5c8800" stroke-width="0.5"/><polygon points="878.6,423.3 899.2,425.7 904.0,440.0 882.9,437.2" fill="#568700" stroke="#568700" stroke-width="0.5"/><polygon points="882.9,437.2 904.0,440.0 907.5,454.4 886.0,451.3" fill="#528600" stroke="#528600" stroke-width="0.5"/><polygon points="886.0,451.3 907.5,454.4 909.6,468.8 887.8,465.5" fill="#4d8100" stroke="#4d8100" stroke-width="0.5"/><polygon points="887.8,465.5 909.6,468.8 910.3,483.0 888.4,479.9" fill="#4a7e00" stroke="#4a7e00" stroke-width="0.5"/><polygon points="888.4,479.9 910.3,483.0 909.6,497.1 887.8,494.2" fill="#457500" stroke="#457500" stroke-width="0.5"/><polygon points="887.8,494.2 909.6,497.1 907.5,510.9 886.0,508.3" fill="#447100" stroke="#447100" stroke-width="0.5"/><polygon points="886.0,508.3 907.5,510.9 904.0,524.2 882.9,522.2" fill="#3e6500" stroke="#3e6500" stroke-width="0.5"/><polygon points="882.9,522.2 904.0,524.2 899.2,537.2 878.6,535.8" fill="#3e6000" stroke="#3e6000" stroke-width="0.5"/><polygon points="878.6,535.8 899.2,537.2 893.0,549.7 873.2,549.0" fill="#385300" stroke="#385300" stroke-width="0.5"/><polygon points="873.2,549.0 893.0,549.7 885.5,561.9 866.6,561.4" fill="#394d00" stroke="#394d00" stroke-width="0.5"/><polygon points="866.6,561.4 885.5,561.9 876.9,573.9 858.9,572.8" fill="#344000" stroke="#344000" stroke-width="0.5"/><polygon points="858.9,572.8 876.9,573.9 867.0,585.0 850.3,583.5" fill="#343a00" stroke="#343a00" stroke-width="0.5"/><polygon points="850.3,583.5 867.0,585.0 856.1,594.6 840.6,593.7" fill="#2e2e00" stroke="#2e2e00" stroke-width="0.5"/><polygon points="840.6,593.7 856.1,594.6 844.2,603.7 830.2,603.5" fill="#2d2800" stroke="#2d2800" stroke-width="0.5"/><polygon points="830.2,603.5 844.2,603.7 831.4,612.4 818.9,612.7" fill="#282000" stroke="#282000" stroke-width="0.5"/><polygon points="818.9,612.7 831.4,612.4 817.8,620.7 806.8,620.4" fill="#261d00" stroke="#261d00" stroke-width="0.5"/><polygon points="806.8,620.4 817.8,620.7 803.5,627.1 794.2,626.9" fill="#251900" stroke="#251900" stroke-width="0.5"/><polygon points="794.2,626.9 803.5,627.1 788.6,632.6 781.1,632.7" fill="#241700" stroke="#241700" stroke-width="0.5"/><polygon points="781.1,632.7 788.6,632.6 773.2,637.5 767.5,637.9" fill="#241500" stroke="#241500" stroke-width="0.5"/><polygon points="767.5,637.9 773.2,637.5 757.4,641.5 753.6,641.3" fill="#241300" stroke="#241300" stroke-width="0.5"/><polygon points="753.6,641.3 757.4,641.5 741.4,642.9 739.5,642.9" fill="#231200" stroke="#231200" stroke-width="0.5"/><polygon points="739.5,642.9 741.4,642.9 725.2,643.7 725.2,643.7" fill="#231000" stroke="#231000" stroke-width="0.5"/><polygon points="725.2,291.4 725.2,291.4 743.1,294.2 741.4,294.1" fill="#411e00" stroke="#411e00" stroke-width="0.5"/><polygon points="741.4,294.1 743.1,294.2 760.8,297.7 757.4,297.4" fill="#442300" stroke="#442300" stroke-width="0.5"/><polygon points="757.4,297.4 760.8,297.7 778.2,304.3 773.2,303.4" fill="#4d2b00" stroke="#4d2b00" stroke-width="0.5"/><polygon points="773.2,303.4 778.2,304.3 795.2,311.5 788.6,310.3" fill="#503100" stroke="#503100" stroke-width="0.5"/><polygon points="788.6,310.3 795.2,311.5 811.7,320.1 803.5,318.7" fill="#593c00" stroke="#593c00" stroke-width="0.5"/><polygon points="803.5,318.7 811.7,320.1 827.6,329.3 817.8,327.9" fill="#5d4400" stroke="#5d4400" stroke-width="0.5"/><polygon points="817.8,327.9 827.6,329.3 842.6,339.1 831.4,337.6" fill="#655000" stroke="#655000" stroke-width="0.5"/><polygon points="831.4,337.6 842.6,339.1 856.8,350.8 844.2,348.3" fill="#625900" stroke="#625900" stroke-width="0.5"/><polygon points="844.2,348.3 856.8,350.8 870.0,362.4 856.1,360.4" fill="#636700" stroke="#636700" stroke-width="0.5"/><polygon points="856.1,360.4 870.0,362.4 882.0,374.0 867.0,372.7" fill="#5d6d00" stroke="#5d6d00" stroke-width="0.5"/><polygon points="867.0,372.7 882.0,374.0 892.9,386.7 876.9,385.1" fill="#577600" stroke="#577600" stroke-width="0.5"/><polygon points="876.9,385.1 892.9,386.7 902.5,400.5 885.5,397.7" fill="#507a00" stroke="#507a00" stroke-width="0.5"/><polygon points="885.5,397.7 902.5,400.5 910.7,414.4 893.0,411.4" fill="#4b7d00" stroke="#4b7d00" stroke-width="0.5"/><polygon points="893.0,411.4 910.7,414.4 917.6,427.5 899.2,425.7" fill="#457e00" stroke="#457e00" stroke-width="0.5"/><polygon points="899.2,425.7 917.6,427.5 922.9,440.6 904.0,440.0" fill="#407d00" stroke="#407d00" stroke-width="0.5"/><polygon points="904.0,440.0 922.9,440.6 926.8,454.1 907.5,454.4" fill="#3c7b00" stroke="#3c7b00" stroke-width="0.5"/><polygon points="907.5,454.4 926.8,454.1 929.1,467.8 909.6,468.8" fill="#377600" stroke="#377600" stroke-width="0.5"/><polygon points="909.6,468.8 929.1,467.8 929.9,481.7 910.3,483.0" fill="#357400" stroke="#357400" stroke-width="0.5"/><polygon points="910.3,483.0 929.9,481.7 929.1,495.8 909.6,497.1" fill="#316b00" stroke="#316b00" stroke-width="0.5"/><polygon points="909.6,497.1 929.1,495.8 926.8,510.0 907.5,510.9" fill="#306700" stroke="#306700" stroke-width="0.5"/><polygon points="907.5,510.9 926.8,510.0 922.9,524.1 904.0,524.2" fill="#2c5c00" stroke="#2c5c00" stroke-width="0.5"/><polygon points="904.0,524.2 922.9,524.1 917.6,538.1 899.2,537.2" fill="#2d5700" stroke="#2d5700" stroke-width="0.5"/><polygon points="899.2,537.2 917.6,538.1 910.7,551.8 893.0,549.7" fill="#294b00" stroke="#294b00" stroke-width="0.5"/><polygon points="893.0,549.7 910.7,551.8 902.5,563.3 885.5,561.9" fill="#2a4700" stroke="#2a4700" stroke-width="0.5"/><polygon points="885.5,561.9 902.5,563.3 892.9,574.3 876.9,573.9" fill="#273c00" stroke="#273c00" stroke-width="0.5"/><polygon points="876.9,573.9 892.9,574.3 882.0,585.3 867.0,585.0" fill="#283700" stroke="#283700" stroke-width="0.5"/><polygon points="867.0,585.0 882.0,585.3 870.0,596.0 856.1,594.6" fill="#262d00" stroke="#262d00" stroke-width="0.5"/><polygon points="856.1,594.6 870.0,596.0 856.8,604.4 844.2,603.7" fill="#272900" stroke="#272900" stroke-width="0.5"/><polygon points="844.2,603.7 856.8,604.4 842.6,612.5 831.4,612.4" fill="#252100" stroke="#252100" stroke-width="0.5"/><polygon points="831.4,612.4 842.6,612.5 827.6,620.4 817.8,620.7" fill="#261e00" stroke="#261e00" stroke-width="0.5"/><polygon points="817.8,620.7 827.6,620.4 811.7,627.4 803.5,627.1" fill="#251b00" stroke="#251b00" stroke-width="0.5"/><polygon points="803.5,627.1 811.7,627.4 795.2,632.6 788.6,632.6" fill="#241800" stroke="#241800" stroke-width="0.5"/><polygon points="788.6,632.6 795.2,632.6 778.2,637.3 773.2,637.5" fill="#241600" stroke="#241600" stroke-width="0.5"/><polygon points="773.2,637.5 778.2,637.3 760.8,641.6 757.4,641.5" fill="#241400" stroke="#241400" stroke-width="0.5"/><polygon points="757.4,641.5 760.8,641.6 743.1,643.0 741.4,642.9" fill="#231200" stroke="#231200" stroke-width="0.5"/><polygon points="741.4,642.9 743.1,643.0 725.2,643.7 725.2,643.7" fill="#231000" stroke="#231000" stroke-width="0.5"/><polygon points="725.2,291.4 725.2,291.4 744.6,294.4 743.1,294.2" fill="#3f1d00" stroke="#3f1d00" stroke-width="0.5"/><polygon points="743.1,294.2 744.6,294.4 763.7,298.3 760.8,297.7" fill="#422200" stroke="#422200" stroke-width="0.5"/><polygon points="760.8,297.7 763.7,298.3 782.6,305.0 778.2,304.3" fill="#472900" stroke="#472900" stroke-width="0.5"/><polygon points="778.2,304.3 782.6,305.0 801.1,312.6 795.2,311.5" fill="#492e00" stroke="#492e00" stroke-width="0.5"/><polygon points="795.2,311.5 801.1,312.6 818.9,321.3 811.7,320.1" fill="#4e3700" stroke="#4e3700" stroke-width="0.5"/><polygon points="811.7,320.1 818.9,321.3 836.1,330.3 827.6,329.3" fill="#503d00" stroke="#503d00" stroke-width="0.5"/><polygon points="827.6,329.3 836.1,330.3 852.4,341.2 842.6,339.1" fill="#514700" stroke="#514700" stroke-width="0.5"/><polygon points="842.6,339.1 852.4,341.2 867.7,352.4 856.8,350.8" fill="#4e4f00" stroke="#4e4f00" stroke-width="0.5"/><polygon points="856.8,350.8 867.7,352.4 882.0,363.5 870.0,362.4" fill="#495700" stroke="#495700" stroke-width="0.5"/><polygon points="870.0,362.4 882.0,363.5 895.0,375.9 882.0,374.0" fill="#415c00" stroke="#415c00" stroke-width="0.5"/><polygon points="882.0,374.0 895.0,375.9 906.8,389.3 892.9,386.7" fill="#3b5f00" stroke="#3b5f00" stroke-width="0.5"/><polygon points="892.9,386.7 906.8,389.3 917.2,402.0 902.5,400.5" fill="#356000" stroke="#356000" stroke-width="0.5"/><polygon points="902.5,400.5 917.2,402.0 926.1,414.0 910.7,414.4" fill="#2f6100" stroke="#2f6100" stroke-width="0.5"/><polygon points="910.7,414.4 926.1,414.0 933.5,426.6 917.6,427.5" fill="#2b6100" stroke="#2b6100" stroke-width="0.5"/><polygon points="917.6,427.5 933.5,426.6 939.3,440.6 922.9,440.6" fill="#265e00" stroke="#265e00" stroke-width="0.5"/><polygon points="922.9,440.6 939.3,440.6 943.5,454.5 926.8,454.1" fill="#225c01" stroke="#225c01" stroke-width="0.5"/><polygon points="926.8,454.1 943.5,454.5 946.0,468.4 929.1,467.8" fill="#1d5702" stroke="#1d5702" stroke-width="0.5"/><polygon points="929.1,467.8 946.0,468.4 946.9,482.3 929.9,481.7" fill="#1b5403" stroke="#1b5403" stroke-width="0.5"/><polygon points="929.9,481.7 946.9,482.3 946.0,496.1 929.1,495.8" fill="#194d03" stroke="#194d03" stroke-width="0.5"/><polygon points="929.1,495.8 946.0,496.1 943.5,509.8 926.8,510.0" fill="#194a02" stroke="#194a02" stroke-width="0.5"/><polygon points="926.8,510.0 943.5,509.8 939.3,523.2 922.9,524.1" fill="#184201" stroke="#184201" stroke-width="0.5"/><polygon points="922.9,524.1 939.3,523.2 933.5,536.5 917.6,538.1" fill="#193f00" stroke="#193f00" stroke-width="0.5"/><polygon points="917.6,538.1 933.5,536.5 926.1,550.1 910.7,551.8" fill="#183700" stroke="#183700" stroke-width="0.5"/><polygon points="910.7,551.8 926.1,550.1 917.2,563.7 902.5,563.3" fill="#1a3400" stroke="#1a3400" stroke-width="0.5"/><polygon points="902.5,563.3 917.2,563.7 906.8,575.8 892.9,574.3" fill="#192e00" stroke="#192e00" stroke-width="0.5"/><polygon points="892.9,574.3 906.8,575.8 895.0,585.8 882.0,585.3" fill="#1b2c00" stroke="#1b2c00" stroke-width="0.5"/><polygon points="882.0,585.3 895.0,585.8 882.0,595.8 870.0,596.0" fill="#1c2800" stroke="#1c2800" stroke-width="0.5"/><polygon points="870.0,596.0 882.0,595.8 867.7,605.4 856.8,604.4" fill="#202600" stroke="#202600" stroke-width="0.5"/><polygon points="856.8,604.4 867.7,605.4 852.4,612.9 842.6,612.5" fill="#222300" stroke="#222300" stroke-width="0.5"/><polygon points="842.6,612.5 852.4,612.9 836.1,620.3 827.6,620.4" fill="#241f00" stroke="#241f00" stroke-width="0.5"/><polygon points="827.6,620.4 836.1,620.3 818.9,627.4 811.7,627.4" fill="#251c00" stroke="#251c00" stroke-width="0.5"/><polygon points="811.7,627.4 818.9,627.4 801.1,632.7 795.2,632.6" fill="#241900" stroke="#241900" stroke-width="0.5"/><polygon points="795.2,632.6 801.1,632.7 782.6,637.2 778.2,637.3" fill="#241700" stroke="#241700" stroke-width="0.5"/><polygon points="778.2,637.3 782.6,637.2 763.7,641.4 760.8,641.6" fill="#241400" stroke="#241400" stroke-width="0.5"/><polygon points="760.8,641.6 763.7,641.4 744.6,643.0 743.1,643.0" fill="#231200" stroke="#231200" stroke-width="0.5"/><polygon points="743.1,643.0 744.6,643.0 725.2,643.7 725.2,643.7" fill="#231000" stroke="#231000" stroke-width="0.5"/><polygon points="725.2,291.4 725.2,291.4 745.8,294.5 744.6,294.4" fill="#3f1d00" stroke="#3f1d00" stroke-width="0.5"/><polygon points="744.6,294.4 745.8,294.5 766.2,298.8 763.7,298.3" fill="#402200" stroke="#402200" stroke-width="0.5"/><polygon points="763.7,298.3 766.2,298.8 786.3,305.5 782.6,305.0" fill="#452800" stroke="#452800" stroke-width="0.5"/><polygon points="782.6,305.0 786.3,305.5 805.9,313.4 801.1,312.6" fill="#462e00" stroke="#462e00" stroke-width="0.5"/><polygon points="801.1,312.6 805.9,313.4 824.9,322.1 818.9,321.3" fill="#4a3500" stroke="#4a3500" stroke-width="0.5"/><polygon points="818.9,321.3 824.9,322.1 843.2,331.4 836.1,330.3" fill="#4b3b00" stroke="#4b3b00" stroke-width="0.5"/><polygon points="836.1,330.3 843.2,331.4 860.5,342.6 852.4,341.2" fill="#494500" stroke="#494500" stroke-width="0.5"/><polygon points="852.4,341.2 860.5,342.6 876.8,353.4 867.7,352.4" fill="#444c00" stroke="#444c00" stroke-width="0.5"/><polygon points="867.7,352.4 876.8,353.4 892.0,364.7 882.0,363.5" fill="#3c5200" stroke="#3c5200" stroke-width="0.5"/><polygon points="882.0,363.5 892.0,364.7 905.9,377.9 895.0,375.9" fill="#345400" stroke="#345400" stroke-width="0.5"/><polygon points="895.0,375.9 905.9,377.9 918.4,390.1 906.8,389.3" fill="#2e5600" stroke="#2e5600" stroke-width="0.5"/><polygon points="906.8,389.3 918.4,390.1 929.5,401.3 917.2,402.0" fill="#285600" stroke="#285600" stroke-width="0.5"/><polygon points="917.2,402.0 929.5,401.3 939.0,414.4 926.1,414.0" fill="#235600" stroke="#235600" stroke-width="0.5"/><polygon points="926.1,414.0 939.0,414.4 946.9,427.8 933.5,426.6" fill="#1d5502" stroke="#1d5502" stroke-width="0.5"/><polygon points="933.5,426.6 946.9,427.8 953.0,442.4 939.3,440.6" fill="#175105" stroke="#175105" stroke-width="0.5"/><polygon points="939.3,440.6 953.0,442.4 957.5,456.4 943.5,454.5" fill="#134f06" stroke="#134f06" stroke-width="0.5"/><polygon points="943.5,454.5 957.5,456.4 960.2,470.2 946.0,468.4" fill="#0f4907" stroke="#0f4907" stroke-width="0.5"/><polygon points="946.0,468.4 960.2,470.2 961.1,483.8 946.9,482.3" fill="#0e4707" stroke="#0e4707" stroke-width="0.5"/><polygon points="946.9,482.3 961.1,483.8 960.2,497.3 946.0,496.1" fill="#0d4107" stroke="#0d4107" stroke-width="0.5"/><polygon points="946.0,496.1 960.2,497.3 957.5,510.8 943.5,509.8" fill="#0d3f06" stroke="#0d3f06" stroke-width="0.5"/><polygon points="943.5,509.8 957.5,510.8 953.0,524.5 939.3,523.2" fill="#0d3804" stroke="#0d3804" stroke-width="0.5"/><polygon points="939.3,523.2 953.0,524.5 946.9,536.8 933.5,536.5" fill="#0f3603" stroke="#0f3603" stroke-width="0.5"/><polygon points="933.5,536.5 946.9,536.8 939.0,549.3 926.1,550.1" fill="#103101" stroke="#103101" stroke-width="0.5"/><polygon points="926.1,550.1 939.0,549.3 929.5,562.3 917.2,563.7" fill="#133000" stroke="#133000" stroke-width="0.5"/><polygon points="917.2,563.7 929.5,562.3 918.4,575.4 906.8,575.8" fill="#142b00" stroke="#142b00" stroke-width="0.5"/><polygon points="906.8,575.8 918.4,575.4 905.9,586.9 895.0,585.8" fill="#172a00" stroke="#172a00" stroke-width="0.5"/><polygon points="895.0,585.8 905.9,586.9 892.0,596.1 882.0,595.8" fill="#192800" stroke="#192800" stroke-width="0.5"/><polygon points="882.0,595.8 892.0,596.1 876.8,605.5 867.7,605.4" fill="#1d2700" stroke="#1d2700" stroke-width="0.5"/><polygon points="867.7,605.4 876.8,605.5 860.5,613.5 852.4,612.9" fill="#202400" stroke="#202400" stroke-width="0.5"/><polygon points="852.4,612.9 860.5,613.5 843.2,620.4 836.1,620.3" fill="#232100" stroke="#232100" stroke-width="0.5"/><polygon points="836.1,620.3 843.2,620.4 824.9,627.2 818.9,627.4" fill="#251d00" stroke="#251d00" stroke-width="0.5"/><polygon points="818.9,627.4 824.9,627.2 805.9,632.8 801.1,632.7" fill="#251a00" stroke="#251a00" stroke-width="0.5"/><polygon points="801.1,632.7 805.9,632.8 786.3,637.1 782.6,637.2" fill="#241700" stroke="#241700" stroke-width="0.5"/><polygon points="782.6,637.2 786.3,637.1 766.2,641.2 763.7,641.4" fill="#241500" stroke="#241500" stroke-width="0.5"/><polygon points="763.7,641.4 766.2,641.2 745.8,643.0 744.6,643.0" fill="#231200" stroke="#231200" stroke-width="0.5"/><polygon points="744.6,643.0 745.8,643.0 725.2,643.7 725.2,643.7" fill="#231000" stroke="#231000" stroke-width="0.5"/><polygon points="725.2,291.4 725.2,291.4 746.8,294.6 745.8,294.5" fill="#3d1d00" stroke="#3d1d00" stroke-width="0.5"/><polygon points="745.8,294.5 746.8,294.6 768.2,299.2 766.2,298.8" fill="#3e2100" stroke="#3e2100" stroke-width="0.5"/><polygon points="766.2,298.8 768.2,299.2 789.2,305.9 786.3,305.5" fill="#3e2500" stroke="#3e2500" stroke-width="0.5"/><polygon points="786.3,305.5 789.2,305.9 809.7,314.1 805.9,313.4" fill="#3f2a00" stroke="#3f2a00" stroke-width="0.5"/><polygon points="805.9,313.4 809.7,314.1 829.7,322.8 824.9,322.1" fill="#3f2f00" stroke="#3f2f00" stroke-width="0.5"/><polygon points="824.9,322.1 829.7,322.8 848.8,332.6 843.2,331.4" fill="#3e3400" stroke="#3e3400" stroke-width="0.5"/><polygon points="843.2,331.4 848.8,332.6 867.0,343.6 860.5,342.6" fill="#393a00" stroke="#393a00" stroke-width="0.5"/><polygon points="860.5,342.6 867.0,343.6 884.1,353.9 876.8,353.4" fill="#323e00" stroke="#323e00" stroke-width="0.5"/><polygon points="876.8,353.4 884.1,353.9 899.9,366.4 892.0,364.7" fill="#2a4000" stroke="#2a4000" stroke-width="0.5"/><polygon points="892.0,364.7 899.9,366.4 914.5,378.9 905.9,377.9" fill="#244000" stroke="#244000" stroke-width="0.5"/><polygon points="905.9,377.9 914.5,378.9 927.6,389.6 918.4,390.1" fill="#1e3f00" stroke="#1e3f00" stroke-width="0.5"/><polygon points="918.4,390.1 927.6,389.6 939.2,402.0 929.5,401.3" fill="#193f00" stroke="#193f00" stroke-width="0.5"/><polygon points="929.5,401.3 939.2,402.0 949.2,415.1 939.0,414.4" fill="#133b02" stroke="#133b02" stroke-width="0.5"/><polygon points="939.0,414.4 949.2,415.1 957.4,430.0 946.9,427.8" fill="#0e3904" stroke="#0e3904" stroke-width="0.5"/><polygon points="946.9,427.8 957.4,430.0 963.9,443.7 953.0,442.4" fill="#0a3606" stroke="#0a3606" stroke-width="0.5"/><polygon points="953.0,442.4 963.9,443.7 968.6,458.0 957.5,456.4" fill="#073407" stroke="#073407" stroke-width="0.5"/><polygon points="957.5,456.4 968.6,458.0 971.4,472.0 960.2,470.2" fill="#053009" stroke="#053009" stroke-width="0.5"/><polygon points="960.2,470.2 971.4,472.0 972.3,485.5 961.1,483.8" fill="#042f0a" stroke="#042f0a" stroke-width="0.5"/><polygon points="961.1,483.8 972.3,485.5 971.4,498.8 960.2,497.3" fill="#042d0a" stroke="#042d0a" stroke-width="0.5"/><polygon points="960.2,497.3 971.4,498.8 968.6,511.7 957.5,510.8" fill="#042c08" stroke="#042c08" stroke-width="0.5"/><polygon points="957.5,510.8 968.6,511.7 963.9,524.1 953.0,524.5" fill="#062b06" stroke="#062b06" stroke-width="0.5"/><polygon points="953.0,524.5 963.9,524.1 957.4,537.2 946.9,536.8" fill="#082b05" stroke="#082b05" stroke-width="0.5"/><polygon points="946.9,536.8 957.4,537.2 949.2,549.8 939.0,549.3" fill="#0a2b03" stroke="#0a2b03" stroke-width="0.5"/><polygon points="939.0,549.3 949.2,549.8 939.2,561.7 929.5,562.3" fill="#0d2b01" stroke="#0d2b01" stroke-width="0.5"/><polygon points="929.5,562.3 939.2,561.7 927.6,574.3 918.4,575.4" fill="#112a00" stroke="#112a00" stroke-width="0.5"/><polygon points="918.4,575.4 927.6,574.3 914.5,587.2 905.9,586.9" fill="#142a00" stroke="#142a00" stroke-width="0.5"/><polygon points="905.9,586.9 914.5,587.2 899.9,596.7 892.0,596.1" fill="#172800" stroke="#172800" stroke-width="0.5"/><polygon points="892.0,596.1 899.9,596.7 884.1,605.5 876.8,605.5" fill="#1a2800" stroke="#1a2800" stroke-width="0.5"/><polygon points="876.8,605.5 884.1,605.5 867.0,614.1 860.5,613.5" fill="#1e2500" stroke="#1e2500" stroke-width="0.5"/><polygon points="860.5,613.5 867.0,614.1 848.8,620.6 843.2,620.4" fill="#222200" stroke="#222200" stroke-width="0.5"/><polygon points="843.2,620.4 848.8,620.6 829.7,627.1 824.9,627.2" fill="#241e00" stroke="#241e00" stroke-width="0.5"/><polygon points="824.9,627.2 829.7,627.1 809.7,633.0 805.9,632.8" fill="#251b00" stroke="#251b00" stroke-width="0.5"/><polygon points="805.9,632.8 809.7,633.0 789.2,637.1 786.3,637.1" fill="#241800" stroke="#241800" stroke-width="0.5"/><polygon points="786.3,637.1 789.2,637.1 768.2,641.1 766.2,641.2" fill="#241500" stroke="#241500" stroke-width="0.5"/><polygon points="766.2,641.2 768.2,641.1 746.8,643.1 745.8,643.0" fill="#231300" stroke="#231300" stroke-width="0.5"/><polygon points="745.8,643.0 746.8,643.1 725.2,643.7 725.2,643.7" fill="#231000" stroke="#231000" stroke-width="0.5"/><polygon points="725.2,291.4 725.2,291.4 747.5,294.7 746.8,294.6" fill="#3d1c00" stroke="#3d1c00" stroke-width="0.5"/><polygon points="746.8,294.6 747.5,294.7 769.6,299.5 768.2,299.2" fill="#3d2000" stroke="#3d2000" stroke-width="0.5"/><polygon points="768.2,299.2 769.6,299.5 791.3,306.2 789.2,305.9" fill="#3c2400" stroke="#3c2400" stroke-width="0.5"/><polygon points="789.2,305.9 791.3,306.2 812.5,314.5 809.7,314.1" fill="#3c2900" stroke="#3c2900" stroke-width="0.5"/><polygon points="809.7,314.1 812.5,314.5 833.1,323.2 829.7,322.8" fill="#3c2d00" stroke="#3c2d00" stroke-width="0.5"/><polygon points="829.7,322.8 833.1,323.2 852.8,333.5 848.8,332.6" fill="#393200" stroke="#393200" stroke-width="0.5"/><polygon points="848.8,332.6 852.8,333.5 871.6,344.1 867.0,343.6" fill="#333700" stroke="#333700" stroke-width="0.5"/><polygon points="867.0,343.6 871.6,344.1 889.3,354.4 884.1,353.9" fill="#2b3900" stroke="#2b3900" stroke-width="0.5"/><polygon points="884.1,353.9 889.3,354.4 905.7,367.4 899.9,366.4" fill="#233900" stroke="#233900" stroke-width="0.5"/><polygon points="899.9,366.4 905.7,367.4 920.7,378.8 914.5,378.9" fill="#1d3900" stroke="#1d3900" stroke-width="0.5"/><polygon points="914.5,378.9 920.7,378.8 934.3,389.5 927.6,389.6" fill="#183800" stroke="#183800" stroke-width="0.5"/><polygon points="927.6,389.6 934.3,389.5 946.2,402.7 939.2,402.0" fill="#123601" stroke="#123601" stroke-width="0.5"/><polygon points="939.2,402.0 946.2,402.7 956.5,417.2 949.2,415.1" fill="#0c3304" stroke="#0c3304" stroke-width="0.5"/><polygon points="949.2,415.1 956.5,417.2 965.0,430.9 957.4,430.0" fill="#083106" stroke="#083106" stroke-width="0.5"/><polygon points="957.4,430.0 965.0,430.9 971.7,445.7 963.9,443.7" fill="#052e09" stroke="#052e09" stroke-width="0.5"/><polygon points="963.9,443.7 971.7,445.7 976.6,459.1 968.6,458.0" fill="#032c0c" stroke="#032c0c" stroke-width="0.5"/><polygon points="968.6,458.0 976.6,459.1 979.5,473.0 971.4,472.0" fill="#012a0e" stroke="#012a0e" stroke-width="0.5"/><polygon points="971.4,472.0 979.5,473.0 980.4,487.4 972.3,485.5" fill="#002a0f" stroke="#002a0f" stroke-width="0.5"/><polygon points="972.3,485.5 980.4,487.4 979.5,500.7 971.4,498.8" fill="#00290f" stroke="#00290f" stroke-width="0.5"/><polygon points="971.4,498.8 979.5,500.7 976.6,512.9 968.6,511.7" fill="#01290e" stroke="#01290e" stroke-width="0.5"/><polygon points="968.6,511.7 976.6,512.9 971.7,525.3 963.9,524.1" fill="#02290b" stroke="#02290b" stroke-width="0.5"/><polygon points="963.9,524.1 971.7,525.3 965.0,537.1 957.4,537.2" fill="#042a08" stroke="#042a08" stroke-width="0.5"/><polygon points="957.4,537.2 965.0,537.1 956.5,549.9 949.2,549.8" fill="#072a05" stroke="#072a05" stroke-width="0.5"/><polygon points="949.2,549.8 956.5,549.9 946.2,561.9 939.2,561.7" fill="#0a2a03" stroke="#0a2a03" stroke-width="0.5"/><polygon points="939.2,561.7 946.2,561.9 934.3,573.7 927.6,574.3" fill="#0e2a01" stroke="#0e2a01" stroke-width="0.5"/><polygon points="927.6,574.3 934.3,573.7 920.7,586.2 914.5,587.2" fill="#122a00" stroke="#122a00" stroke-width="0.5"/><polygon points="914.5,587.2 920.7,586.2 905.7,597.3 899.9,596.7" fill="#152900" stroke="#152900" stroke-width="0.5"/><polygon points="899.9,596.7 905.7,597.3 889.3,605.7 884.1,605.5" fill="#182800" stroke="#182800" stroke-width="0.5"/><polygon points="884.1,605.5 889.3,605.7 871.6,614.5 867.0,614.1" fill="#1c2600" stroke="#1c2600" stroke-width="0.5"/><polygon points="867.0,614.1 871.6,614.5 852.8,620.7 848.8,620.6" fill="#212300" stroke="#212300" stroke-width="0.5"/><polygon points="848.8,620.6 852.8,620.7 833.1,627.0 829.7,627.1" fill="#231f00" stroke="#231f00" stroke-width="0.5"/><polygon points="829.7,627.1 833.1,627.0 812.5,633.1 809.7,633.0" fill="#251b00" stroke="#251b00" stroke-width="0.5"/><polygon points="809.7,633.0 812.5,633.1 791.3,637.1 789.2,637.1" fill="#241800" stroke="#241800" stroke-width="0.5"/><polygon points="789.2,637.1 791.3,637.1 769.6,641.0 768.2,641.1" fill="#241500" stroke="#241500" stroke-width="0.5"/><polygon points="768.2,641.1 769.6,641.0 747.5,643.1 746.8,643.1" fill="#231300" stroke="#231300" stroke-width="0.5"/><polygon points="746.8,643.1 747.5,643.1 725.2,643.7 725.2,643.7" fill="#231000" stroke="#231000" stroke-width="0.5"/><polygon points="725.2,291.4 725.2,291.4 747.9,294.7 747.5,294.7" fill="#3b1c00" stroke="#3b1c00" stroke-width="0.5"/><polygon points="747.5,294.7 747.9,294.7 770.4,299.6 769.6,299.5" fill="#3a1f00" stroke="#3a1f00" stroke-width="0.5"/><polygon points="769.6,299.5 770.4,299.6 792.6,306.4 791.3,306.2" fill="#372100" stroke="#372100" stroke-width="0.5"/><polygon points="791.3,306.2 792.6,306.4 814.2,314.8 812.5,314.5" fill="#362500" stroke="#362500" stroke-width="0.5"/><polygon points="812.5,314.5 814.2,314.8 835.2,323.4 833.1,323.2" fill="#332600" stroke="#332600" stroke-width="0.5"/><polygon points="833.1,323.2 835.2,323.4 855.3,334.0 852.8,333.5" fill="#2f2a00" stroke="#2f2a00" stroke-width="0.5"/><polygon points="852.8,333.5 855.3,334.0 874.4,344.4 871.6,344.1" fill="#282c00" stroke="#282c00" stroke-width="0.5"/><polygon points="871.6,344.1 874.4,344.4 892.4,355.1 889.3,354.4" fill="#202e00" stroke="#202e00" stroke-width="0.5"/><polygon points="889.3,354.4 892.4,355.1 909.2,367.9 905.7,367.4" fill="#1a2c00" stroke="#1a2c00" stroke-width="0.5"/><polygon points="905.7,367.4 909.2,367.9 924.5,378.7 920.7,378.8" fill="#152b00" stroke="#152b00" stroke-width="0.5"/><polygon points="920.7,378.8 924.5,378.7 938.3,390.2 934.3,389.5" fill="#112b00" stroke="#112b00" stroke-width="0.5"/><polygon points="934.3,389.5 938.3,390.2 950.5,403.3 946.2,402.7" fill="#0c2902" stroke="#0c2902" stroke-width="0.5"/><polygon points="946.2,402.7 950.5,403.3 961.0,418.0 956.5,417.2" fill="#082904" stroke="#082904" stroke-width="0.5"/><polygon points="956.5,417.2 961.0,418.0 969.7,432.4 965.0,430.9" fill="#052907" stroke="#052907" stroke-width="0.5"/><polygon points="965.0,430.9 969.7,432.4 976.5,445.9 971.7,445.7" fill="#02280b" stroke="#02280b" stroke-width="0.5"/><polygon points="971.7,445.7 976.5,445.9 981.4,459.2 976.6,459.1" fill="#00280f" stroke="#00280f" stroke-width="0.5"/><polygon points="976.6,459.1 981.4,459.2 984.4,470.3 979.5,473.0" fill="#002315" stroke="#002315" stroke-width="0.5"/><polygon points="979.5,473.0 984.4,470.3 985.4,485.3 980.4,487.4" fill="#001f1a" stroke="#001f1a" stroke-width="0.5"/><polygon points="980.4,487.4 985.4,485.3 984.4,496.7 979.5,500.7" fill="#001f1a" stroke="#001f1a" stroke-width="0.5"/><polygon points="979.5,500.7 984.4,496.7 981.4,513.7 976.6,512.9" fill="#002315" stroke="#002315" stroke-width="0.5"/><polygon points="976.6,512.9 981.4,513.7 976.5,526.1 971.7,525.3" fill="#00280f" stroke="#00280f" stroke-width="0.5"/><polygon points="971.7,525.3 976.5,526.1 969.7,538.0 965.0,537.1" fill="#02280b" stroke="#02280b" stroke-width="0.5"/><polygon points="965.0,537.1 969.7,538.0 961.0,549.6 956.5,549.9" fill="#052907" stroke="#052907" stroke-width="0.5"/><polygon points="956.5,549.9 961.0,549.6 950.5,562.3 946.2,561.9" fill="#082904" stroke="#082904" stroke-width="0.5"/><polygon points="946.2,561.9 950.5,562.3 938.3,573.5 934.3,573.7" fill="#0c2902" stroke="#0c2902" stroke-width="0.5"/><polygon points="934.3,573.7 938.3,573.5 924.5,585.8 920.7,586.2" fill="#102900" stroke="#102900" stroke-width="0.5"/><polygon points="920.7,586.2 924.5,585.8 909.2,597.8 905.7,597.3" fill="#132800" stroke="#132800" stroke-width="0.5"/><polygon points="905.7,597.3 909.2,597.8 892.4,605.8 889.3,605.7" fill="#172700" stroke="#172700" stroke-width="0.5"/><polygon points="889.3,605.7 892.4,605.8 874.4,614.4 871.6,614.5" fill="#1b2600" stroke="#1b2600" stroke-width="0.5"/><polygon points="871.6,614.5 874.4,614.4 855.3,620.9 852.8,620.7" fill="#202300" stroke="#202300" stroke-width="0.5"/><polygon points="852.8,620.7 855.3,620.9 835.2,627.0 833.1,627.0" fill="#231f00" stroke="#231f00" stroke-width="0.5"/><polygon points="833.1,627.0 835.2,627.0 814.2,633.2 812.5,633.1" fill="#241c00" stroke="#241c00" stroke-width="0.5"/><polygon points="812.5,633.1 814.2,633.2 792.6,637.1 791.3,637.1" fill="#241800" stroke="#241800" stroke-width="0.5"/><polygon points="791.3,637.1 792.6,637.1 770.4,641.0 769.6,641.0" fill="#241500" stroke="#241500" stroke-width="0.5"/><polygon points="769.6,641.0 770.4,641.0 747.9,643.1 747.5,643.1" fill="#231300" stroke="#231300" stroke-width="0.5"/><polygon points="747.5,643.1 747.9,643.1 725.2,643.7 725.2,643.7" fill="#231000" stroke="#231000" stroke-width="0.5"/><polygon points="725.2,291.4 725.2,291.4 748.1,294.7 747.9,294.7" fill="#3b1c00" stroke="#3b1c00" stroke-width="0.5"/><polygon points="747.9,294.7 748.1,294.7 770.7,299.7 770.4,299.6" fill="#391f00" stroke="#391f00" stroke-width="0.5"/><polygon points="770.4,299.6 770.7,299.7 793.0,306.5 792.6,306.4" fill="#352000" stroke="#352000" stroke-width="0.5"/><polygon points="792.6,306.4 793.0,306.5 814.8,314.9 814.2,314.8" fill="#332300" stroke="#332300" stroke-width="0.5"/><polygon points="814.2,314.8 814.8,314.9 835.9,323.5 835.2,323.4" fill="#302500" stroke="#302500" stroke-width="0.5"/><polygon points="835.2,323.4 835.9,323.5 856.1,334.1 855.3,334.0" fill="#2b2800" stroke="#2b2800" stroke-width="0.5"/><polygon points="855.3,334.0 856.1,334.1 875.4,344.5 874.4,344.4" fill="#242900" stroke="#242900" stroke-width="0.5"/><polygon points="874.4,344.4 875.4,344.5 893.5,355.4 892.4,355.1" fill="#1d2a00" stroke="#1d2a00" stroke-width="0.5"/><polygon points="892.4,355.1 893.5,355.4 910.3,368.1 909.2,367.9" fill="#172900" stroke="#172900" stroke-width="0.5"/><polygon points="909.2,367.9 910.3,368.1 925.8,378.6 924.5,378.7" fill="#132900" stroke="#132900" stroke-width="0.5"/><polygon points="924.5,378.7 925.8,378.6 939.7,390.4 938.3,390.2" fill="#0f2900" stroke="#0f2900" stroke-width="0.5"/><polygon points="938.3,390.2 939.7,390.4 951.9,403.8 950.5,403.3" fill="#0b2802" stroke="#0b2802" stroke-width="0.5"/><polygon points="950.5,403.3 951.9,403.8 962.5,418.2 961.0,418.0" fill="#072905" stroke="#072905" stroke-width="0.5"/><polygon points="961.0,418.0 962.5,418.2 971.2,432.8 969.7,432.4" fill="#042809" stroke="#042809" stroke-width="0.5"/><polygon points="969.7,432.4 971.2,432.8 978.1,445.5 976.5,445.9" fill="#01270d" stroke="#01270d" stroke-width="0.5"/><polygon points="976.5,445.9 978.1,445.5 983.0,458.5 981.4,459.2" fill="#002413" stroke="#002413" stroke-width="0.5"/><polygon points="981.4,459.2 983.0,458.5 986.0,475.0 984.4,470.3" fill="#001c1d" stroke="#001c1d" stroke-width="0.5"/><polygon points="984.4,470.3 986.0,475.0 987.0,495.0 985.4,485.3" fill="#001722" stroke="#001722" stroke-width="0.5"/><polygon points="985.4,485.3 987.0,495.0 986.0,498.7 984.4,496.7" fill="#001722" stroke="#001722" stroke-width="0.5"/><polygon points="984.4,496.7 986.0,498.7 983.0,511.2 981.4,513.7" fill="#001c1d" stroke="#001c1d" stroke-width="0.5"/><polygon points="981.4,513.7 983.0,511.2 978.1,526.9 976.5,526.1" fill="#002413" stroke="#002413" stroke-width="0.5"/><polygon points="976.5,526.1 978.1,526.9 971.2,538.0 969.7,538.0" fill="#01270d" stroke="#01270d" stroke-width="0.5"/><polygon points="969.7,538.0 971.2,538.0 962.5,549.6 961.0,549.6" fill="#042809" stroke="#042809" stroke-width="0.5"/><polygon points="961.0,549.6 962.5,549.6 951.9,562.5 950.5,562.3" fill="#072905" stroke="#072905" stroke-width="0.5"/><polygon points="950.5,562.3 951.9,562.5 939.7,573.4 938.3,573.5" fill="#0b2802" stroke="#0b2802" stroke-width="0.5"/><polygon points="938.3,573.5 939.7,573.4 925.8,585.6 924.5,585.8" fill="#0f2900" stroke="#0f2900" stroke-width="0.5"/><polygon points="924.5,585.8 925.8,585.6 910.3,598.0 909.2,597.8" fill="#132800" stroke="#132800" stroke-width="0.5"/><polygon points="909.2,597.8 910.3,598.0 893.5,605.9 892.4,605.8" fill="#162700" stroke="#162700" stroke-width="0.5"/><polygon points="892.4,605.8 893.5,605.9 875.4,614.3 874.4,614.4" fill="#1a2600" stroke="#1a2600" stroke-width="0.5"/><polygon points="874.4,614.4 875.4,614.3 856.1,620.9 855.3,620.9" fill="#1f2400" stroke="#1f2400" stroke-width="0.5"/><polygon points="855.3,620.9 856.1,620.9 835.9,627.0 835.2,627.0" fill="#222000" stroke="#222000" stroke-width="0.5"/><polygon points="835.2,627.0 835.9,627.0 814.8,633.3 814.2,633.2" fill="#241c00" stroke="#241c00" stroke-width="0.5"/><polygon points="814.2,633.2 814.8,633.3 793.0,637.1 792.6,637.1" fill="#241900" stroke="#241900" stroke-width="0.5"/><polygon points="792.6,637.1 793.0,637.1 770.7,640.9 770.4,641.0" fill="#241600" stroke="#241600" stroke-width="0.5"/><polygon points="770.4,641.0 770.7,640.9 748.1,643.1 747.9,643.1" fill="#231300" stroke="#231300" stroke-width="0.5"/><polygon points="747.9,643.1 748.1,643.1 725.2,643.7 725.2,643.7" fill="#231000" stroke="#231000" stroke-width="0.5"/><defs><radialGradient id="tipg"><stop offset="0" stop-color="#000a70"/><stop offset="1" stop-color="#003a30" stop-opacity="0"/></radialGradient></defs><ellipse cx="982" cy="487" rx="6" ry="16" fill="url(#tipg)"/><path d="M968,505l14,-4l-3,14zM962,520l14,-5l-4,12z" fill="#0a5a4a" opacity="0.35"/><g stroke="#6a8a98" stroke-width="1" fill="none"><path d="M940,400C944,392 952,392 955,402C956,410 950,416 946,410"/><path d="M953,537C950,552 944,570 934,584C931,590 936,596 944,590"/><path d="M951,540C947,556 940,572 930,582"/></g><g stroke="#eef23a" stroke-width="1.7" fill="none" stroke-linecap="round"><path d="M423,368C414,372 407,384 405,395"/><ellipse cx="416" cy="397.5" rx="4" ry="13.5" transform="rotate(22 416 397.5)"/><ellipse cx="414.5" cy="433" rx="4" ry="13.5" transform="rotate(22 414.5 433)"/><path d="M423,437C421,449 413,460 405,463"/><path d="M408,424l0.5,-1"/></g><g stroke="#eef23a" stroke-width="1.7" fill="none" stroke-linecap="round"><path d="M1128,212C1120,215 1113,228 1110.5,238"/><ellipse cx="1121" cy="240.5" rx="4" ry="13" transform="rotate(25 1121 240.5)"/><ellipse cx="1120" cy="264.5" rx="4" ry="13" transform="rotate(25 1120 264.5)"/><ellipse cx="1119" cy="299" rx="4" ry="12.5" transform="rotate(25 1119 299)"/><ellipse cx="1118" cy="324.5" rx="4" ry="13" transform="rotate(25 1118 324.5)"/><path d="M1126.5,328C1124,340 1116,350 1108.7,353"/><path d="M1112,291.7l0.5,-1"/></g><g fill="none" stroke-width="2" stroke-linecap="round"><path d="M295,748L252,744.5" stroke="#6f7ef0"/><path d="M250,744l4,-3l0,6z" fill="#6f7ef0" stroke="#6f7ef0" stroke-width="1"/><path d="M219,745L226,736L241.5,747.5L248.5,738" stroke="#6f7ef0"/><path d="M295,748L311,727L314.5,709M311,726L313.5,734" stroke="#86ef86"/><path d="M294.8,748L294.5,790M297.5,792L290.5,823M291,801.5L297.5,814" stroke="#ee8585"/></g></svg><div style="left:1248px;top:66px;width:23px;height:1px;background:#ACA899;"></div><div style="left:1248px;top:67px;width:23px;height:1px;background:#fff;"></div><div style="left:1248px;top:70px;width:23px;height:1px;background:#fff;"></div><div style="left:1248px;top:72px;width:23px;height:1px;background:#ACA899;"></div><svg style="left:1251px;top:79px" width="16" height="16" viewBox="0 0 16 16"><path d="M0 3h10l6 6h-10z" fill="#00E000"/><path d="M0.5 3.5l5.5 5h10" stroke="#004000" fill="none" stroke-width="1.3"/></svg><svg style="left:1251px;top:99px" width="16" height="16" viewBox="0 0 16 16"><path d="M1 2h14v4h-5v9h-4v-9h-5z" fill="#00E000"/><path d="M1 6h5M10 6h5M6 6v9" stroke="#004000" fill="none"/></svg><svg style="left:1251px;top:118px" width="16" height="16" viewBox="0 0 16 16"><path d="M1 1h4l3 4l3-4h4l-5 7v7h-4v-7z" fill="#00E000"/></svg><svg style="left:1251px;top:140px" width="16" height="16" viewBox="0 0 16 16"><path d="M1 5h6v-2h8v8h-8v-2h-6z" fill="#00E000"/><path d="M1 9h6M7 11h8" stroke="#004000"/></svg><svg style="left:1251px;top:159px" width="16" height="16" viewBox="0 0 16 16"><path d="M1 3h9l5 5v8h-4v-7l-2-2h-8z" fill="#00E000"/><path d="M1 7h8l2 2v7" stroke="#004000" fill="none"/></svg><div style="left:1251px;top:183px;width:17px;height:1px;background:#ACA899;"></div><div style="left:1251px;top:184px;width:17px;height:1px;background:#fff;"></div><svg style="left:1251px;top:189px" width="16" height="16" viewBox="0 0 16 16"><ellipse cx="8" cy="8" rx="7" ry="4" fill="#00E000"/></svg><svg style="left:1251px;top:210px" width="16" height="16" viewBox="0 0 16 16"><ellipse cx="8" cy="8" rx="6" ry="3.5" fill="none" stroke="#00E000" stroke-width="2"/></svg><svg style="left:1251px;top:230px" width="16" height="16" viewBox="0 0 16 16"><path d="M3 12q5-8 10 0" fill="none" stroke="#00E000" stroke-width="2.5"/></svg><div style="left:1251px;top:252px;width:17px;height:1px;background:#ACA899;"></div><div style="left:1251px;top:253px;width:17px;height:1px;background:#fff;"></div><svg style="left:1251px;top:257px" width="16" height="16" viewBox="0 0 16 16"><path d="M4 2h8v12h-8z" fill="#00E000"/><ellipse cx="4" cy="8" rx="3" ry="6" fill="#108020" stroke="#004000"/><path d="M4 2h8v12h-8" fill="none" stroke="#004000"/></svg><svg style="left:1251px;top:278px" width="16" height="16" viewBox="0 0 16 16"><path d="M3 3l9 8" stroke="#00E000" stroke-width="6" stroke-linecap="round"/><ellipse cx="4" cy="4" rx="3" ry="2.5" fill="#108020" stroke="#004000"/><path d="M8 5l6 5" stroke="#004000"/></svg><div style="left:1251px;top:300px;width:17px;height:1px;background:#ACA899;"></div><div style="left:1251px;top:301px;width:17px;height:1px;background:#fff;"></div><svg style="left:1251px;top:305px" width="16" height="16" viewBox="0 0 16 16"><circle cx="8" cy="8" r="6.5" fill="#108020" stroke="#004000"/><path d="M8 5v6M5 8h6" stroke="#fff"/></svg><div style="left:1251px;top:327px;width:17px;height:1px;background:#ACA899;"></div><div style="left:1251px;top:328px;width:17px;height:1px;background:#fff;"></div><svg style="left:1251px;top:332px" width="16" height="16" viewBox="0 0 16 16"><path d="M5 2q6 0 6 2t-6 2q6 0 6 2t-6 2q6 0 6 2t-6 2" fill="none" stroke="#000080"/></svg><svg style="left:1251px;top:353px" width="16" height="16" viewBox="0 0 16 16"><path d="M9 1q-6 2-6 5q0 2 9 1q-9 1-9 4q0 3 7 3q4 0 4-2" fill="none" stroke="#000080"/></svg><div style="left:1251px;top:374px;width:17px;height:1px;background:#ACA899;"></div><div style="left:1251px;top:375px;width:17px;height:1px;background:#fff;"></div><svg style="left:1251px;top:381px" width="16" height="16" viewBox="0 0 16 16"><rect x="1" y="1" width="14" height="14" fill="#000080"/><circle cx="8" cy="8" r="5" fill="#fff"/></svg><svg style="left:1251px;top:401px" width="16" height="16" viewBox="0 0 16 16"><rect x="0" y="3" width="16" height="11" fill="#000080"/><circle cx="8" cy="8.5" r="4" fill="#fff"/></svg><div style="left:1251px;top:423px;width:17px;height:1px;background:#ACA899;"></div><div style="left:1251px;top:424px;width:17px;height:1px;background:#fff;"></div><svg style="left:1251px;top:428px" width="16" height="16" viewBox="0 0 16 16"><path d="M1 13h13v-12h-11v9h8v-6h-5v3h3" fill="none" stroke="#000080" stroke-width="1.2"/></svg><svg style="left:1251px;top:448px" width="16" height="16" viewBox="0 0 16 16"><path d="M8 8q2 0 2-2q0-2-3-2q-4 0-4 4q0 5 5 5q6 0 6-6" fill="none" stroke="#000080" stroke-width="1.2"/><path d="M0 10h4" stroke="#000080"/></svg><svg style="left:1251px;top:470px" width="16" height="16" viewBox="0 0 16 16"><path d="M8 8q2 0 2-2q0-2-3-2q-4 0-4 4q0 5 5 5q6 0 6-6q0-7-7-7q-7 0-7 7" fill="none" stroke="#000080" stroke-width="1.2"/></svg><div style="left:1251px;top:492px;width:17px;height:1px;background:#ACA899;"></div><div style="left:1251px;top:493px;width:17px;height:1px;background:#fff;"></div><svg style="left:1251px;top:497px" width="16" height="16" viewBox="0 0 16 16"><rect x="3" y="3" width="10" height="11" rx="2" fill="none" stroke="#000080" stroke-width="1.5"/><path d="M6 1v15M8 3v11M10 1v15" stroke="#000080" stroke-width="1.5"/></svg><svg style="left:1251px;top:519px" width="16" height="16" viewBox="0 0 16 16"><rect x="0" y="7" width="16" height="7" fill="#20e0f0"/><path d="M4 5h8l2 9h-12z" fill="#0000e0"/><path d="M1 4h14v2" stroke="#008000" fill="none" stroke-width="1.5"/><path d="M0 14h16" stroke="#000080"/></svg><svg style="left:1251px;top:539px" width="16" height="16" viewBox="0 0 16 16"><path d="M1 9h5l5-5h4v11h-14z" fill="#ACA899"/><path d="M1 9h5l5-5h4" stroke="#fff" fill="none"/></svg><svg style="left:1251px;top:560px" width="16" height="16" viewBox="0 0 16 16"><rect x="0" y="4" width="16" height="9" fill="#f0f000"/><ellipse cx="8" cy="8.5" rx="5" ry="4" fill="#0000e0"/><path d="M0 3.5h16M0 13.5h16" stroke="#000080"/></svg><div style="left:5px;top:850px;width:1237px;height:84px;background:#fff;"></div><div style="left:5px;top:850px;width:1237px;height:1px;background:#ACA899;"></div><div style="left:5px;top:850px;width:1px;height:84px;background:#ACA899;"></div><div style="left:6px;top:851px;width:1236px;height:1px;background:#716F64;"></div><div style="left:6px;top:851px;width:1px;height:82px;background:#716F64;"></div><div style="left:5px;top:933px;width:1237px;height:1px;background:#fff;"></div><div style="left:1241px;top:850px;width:1px;height:84px;background:#fff;"></div><div style="left:6px;top:932px;width:1235px;height:1px;background:#ECE9D8;"></div><div style="left:1240px;top:851px;width:1px;height:82px;background:#ECE9D8;"></div><div style="left:6px;top:852px;width:1234px;height:15px;background:#ECE9D8;"></div><div style="left:6px;top:867px;width:1234px;height:1px;background:#716F64;"></div><div style="left:6px;top:852px;width:33px;height:1px;background:#fff;"></div><div style="left:6px;top:852px;width:1px;height:15px;background:#fff;"></div><div style="left:38px;top:852px;width:1px;height:15px;background:#716F64;"></div><div style="left:37px;top:853px;width:1px;height:13px;background:#ACA899;"></div><div style="left:7px;top:866px;width:31px;height:1px;background:#ACA899;"></div><span style="left:6px;top:854px;width:33px;text-align:center;color:#000">Port</span><div style="left:39px;top:852px;width:55px;height:1px;background:#fff;"></div><div style="left:39px;top:852px;width:1px;height:15px;background:#fff;"></div><div style="left:93px;top:852px;width:1px;height:15px;background:#716F64;"></div><div style="left:92px;top:853px;width:1px;height:13px;background:#ACA899;"></div><div style="left:40px;top:866px;width:53px;height:1px;background:#ACA899;"></div><span style="left:39px;top:854px;width:55px;text-align:center;color:#000">Mag(Src)</span><div style="left:94px;top:852px;width:53px;height:1px;background:#fff;"></div><div style="left:94px;top:852px;width:1px;height:15px;background:#fff;"></div><div style="left:146px;top:852px;width:1px;height:15px;background:#716F64;"></div><div style="left:145px;top:853px;width:1px;height:13px;background:#ACA899;"></div><div style="left:95px;top:866px;width:51px;height:1px;background:#ACA899;"></div><span style="left:94px;top:854px;width:53px;text-align:center;color:#000">Ang(Src)</span><div style="left:147px;top:852px;width:54px;height:1px;background:#fff;"></div><div style="left:147px;top:852px;width:1px;height:15px;background:#fff;"></div><div style="left:200px;top:852px;width:1px;height:15px;background:#716F64;"></div><div style="left:199px;top:853px;width:1px;height:13px;background:#ACA899;"></div><div style="left:148px;top:866px;width:52px;height:1px;background:#ACA899;"></div><span style="left:147px;top:854px;width:54px;text-align:center;color:#000">Mag(Inc)</span><div style="left:201px;top:852px;width:52px;height:1px;background:#fff;"></div><div style="left:201px;top:852px;width:1px;height:15px;background:#fff;"></div><div style="left:252px;top:852px;width:1px;height:15px;background:#716F64;"></div><div style="left:251px;top:853px;width:1px;height:13px;background:#ACA899;"></div><div style="left:202px;top:866px;width:50px;height:1px;background:#ACA899;"></div><span style="left:201px;top:854px;width:52px;text-align:center;color:#000">Ang(Inc)</span><div style="left:253px;top:852px;width:57px;height:1px;background:#fff;"></div><div style="left:253px;top:852px;width:1px;height:15px;background:#fff;"></div><div style="left:309px;top:852px;width:1px;height:15px;background:#716F64;"></div><div style="left:308px;top:853px;width:1px;height:13px;background:#ACA899;"></div><div style="left:254px;top:866px;width:55px;height:1px;background:#ACA899;"></div><span style="left:253px;top:854px;width:57px;text-align:center;color:#000">Mag(Ref)</span><div style="left:310px;top:852px;width:54px;height:1px;background:#fff;"></div><div style="left:310px;top:852px;width:1px;height:15px;background:#fff;"></div><div style="left:363px;top:852px;width:1px;height:15px;background:#716F64;"></div><div style="left:362px;top:853px;width:1px;height:13px;background:#ACA899;"></div><div style="left:311px;top:866px;width:52px;height:1px;background:#ACA899;"></div><span style="left:310px;top:854px;width:54px;text-align:center;color:#000">Ang(Ref)</span><div style="left:364px;top:852px;width:46px;height:1px;background:#fff;"></div><div style="left:364px;top:852px;width:1px;height:15px;background:#fff;"></div><div style="left:409px;top:852px;width:1px;height:15px;background:#716F64;"></div><div style="left:408px;top:853px;width:1px;height:13px;background:#ACA899;"></div><div style="left:365px;top:866px;width:44px;height:1px;background:#ACA899;"></div><span style="left:364px;top:854px;width:46px;text-align:center;color:#000">Mag(V)</span><div style="left:410px;top:852px;width:44px;height:1px;background:#fff;"></div><div style="left:410px;top:852px;width:1px;height:15px;background:#fff;"></div><div style="left:453px;top:852px;width:1px;height:15px;background:#716F64;"></div><div style="left:452px;top:853px;width:1px;height:13px;background:#ACA899;"></div><div style="left:411px;top:866px;width:42px;height:1px;background:#ACA899;"></div><span style="left:410px;top:854px;width:44px;text-align:center;color:#000">Ang(V)</span><div style="left:454px;top:852px;width:51px;height:1px;background:#fff;"></div><div style="left:454px;top:852px;width:1px;height:15px;background:#fff;"></div><div style="left:504px;top:852px;width:1px;height:15px;background:#716F64;"></div><div style="left:503px;top:853px;width:1px;height:13px;background:#ACA899;"></div><div style="left:455px;top:866px;width:49px;height:1px;background:#ACA899;"></div><span style="left:454px;top:854px;width:51px;text-align:center;color:#000">Mag(I)</span><div style="left:505px;top:852px;width:42px;height:1px;background:#fff;"></div><div style="left:505px;top:852px;width:1px;height:15px;background:#fff;"></div><div style="left:546px;top:852px;width:1px;height:15px;background:#716F64;"></div><div style="left:545px;top:853px;width:1px;height:13px;background:#ACA899;"></div><div style="left:506px;top:866px;width:40px;height:1px;background:#ACA899;"></div><span style="left:505px;top:854px;width:42px;text-align:center;color:#000">Ang(I)</span><div style="left:547px;top:852px;width:44px;height:1px;background:#fff;"></div><div style="left:547px;top:852px;width:1px;height:15px;background:#fff;"></div><div style="left:590px;top:852px;width:1px;height:15px;background:#716F64;"></div><div style="left:589px;top:853px;width:1px;height:13px;background:#ACA899;"></div><div style="left:548px;top:866px;width:42px;height:1px;background:#ACA899;"></div><span style="left:547px;top:854px;width:44px;text-align:center;color:#000">Re(Zs)</span><div style="left:591px;top:852px;width:41px;height:1px;background:#fff;"></div><div style="left:591px;top:852px;width:1px;height:15px;background:#fff;"></div><div style="left:631px;top:852px;width:1px;height:15px;background:#716F64;"></div><div style="left:630px;top:853px;width:1px;height:13px;background:#ACA899;"></div><div style="left:592px;top:866px;width:39px;height:1px;background:#ACA899;"></div><span style="left:591px;top:854px;width:41px;text-align:center;color:#000">Im(Zs)</span><div style="left:632px;top:852px;width:25px;height:1px;background:#fff;"></div><div style="left:632px;top:852px;width:1px;height:15px;background:#fff;"></div><div style="left:656px;top:852px;width:1px;height:15px;background:#716F64;"></div><div style="left:655px;top:853px;width:1px;height:13px;background:#ACA899;"></div><div style="left:633px;top:866px;width:23px;height:1px;background:#ACA899;"></div><span style="left:632px;top:854px;width:25px;text-align:center;color:#000">Zc</span><div style="left:657px;top:852px;width:33px;height:1px;background:#fff;"></div><div style="left:657px;top:852px;width:1px;height:15px;background:#fff;"></div><div style="left:689px;top:852px;width:1px;height:15px;background:#716F64;"></div><div style="left:688px;top:853px;width:1px;height:13px;background:#ACA899;"></div><div style="left:658px;top:866px;width:31px;height:1px;background:#ACA899;"></div><span style="left:657px;top:854px;width:33px;text-align:center;color:#000">Pinc</span><div style="left:690px;top:852px;width:65px;height:1px;background:#fff;"></div><div style="left:690px;top:852px;width:1px;height:15px;background:#fff;"></div><div style="left:754px;top:852px;width:1px;height:15px;background:#716F64;"></div><div style="left:753px;top:853px;width:1px;height:13px;background:#ACA899;"></div><div style="left:691px;top:866px;width:63px;height:1px;background:#ACA899;"></div><span style="left:690px;top:854px;width:65px;text-align:center;color:#000">Pref</span><div style="left:755px;top:852px;width:67px;height:1px;background:#fff;"></div><div style="left:755px;top:852px;width:1px;height:15px;background:#fff;"></div><div style="left:821px;top:852px;width:1px;height:15px;background:#716F64;"></div><div style="left:820px;top:853px;width:1px;height:13px;background:#ACA899;"></div><div style="left:756px;top:866px;width:65px;height:1px;background:#ACA899;"></div><span style="left:755px;top:854px;width:67px;text-align:center;color:#000">Pin</span><div style="left:822px;top:852px;width:67px;height:1px;background:#fff;"></div><div style="left:822px;top:852px;width:1px;height:15px;background:#fff;"></div><div style="left:888px;top:852px;width:1px;height:15px;background:#716F64;"></div><div style="left:887px;top:853px;width:1px;height:13px;background:#ACA899;"></div><div style="left:823px;top:866px;width:65px;height:1px;background:#ACA899;"></div><span style="left:822px;top:854px;width:67px;text-align:center;color:#000">Re(Zactive)</span><div style="left:889px;top:852px;width:66px;height:1px;background:#fff;"></div><div style="left:889px;top:852px;width:1px;height:15px;background:#fff;"></div><div style="left:954px;top:852px;width:1px;height:15px;background:#716F64;"></div><div style="left:953px;top:853px;width:1px;height:13px;background:#ACA899;"></div><div style="left:890px;top:866px;width:64px;height:1px;background:#ACA899;"></div><span style="left:889px;top:854px;width:66px;text-align:center;color:#000">Im(Zactive)</span><div style="left:955px;top:852px;width:285px;height:1px;background:#fff;"></div><div style="left:955px;top:852px;width:1px;height:15px;background:#fff;"></div><div style="left:1239px;top:852px;width:1px;height:15px;background:#716F64;"></div><div style="left:1238px;top:853px;width:1px;height:13px;background:#ACA899;"></div><div style="left:956px;top:866px;width:283px;height:1px;background:#ACA899;"></div><div style="left:6px;top:883px;width:1234px;height:1px;background:#EAE8DD;"></div><div style="left:6px;top:897px;width:1234px;height:1px;background:#EAE8DD;"></div><div style="left:6px;top:911px;width:1234px;height:1px;background:#EAE8DD;"></div><div style="left:6px;top:925px;width:1234px;height:1px;background:#EAE8DD;"></div><div style="left:6px;top:939px;width:1234px;height:1px;background:#EAE8DD;"></div><div style="left:39px;top:868px;width:1px;height:64px;background:#EAE8DD;"></div><div style="left:94px;top:868px;width:1px;height:64px;background:#EAE8DD;"></div><div style="left:147px;top:868px;width:1px;height:64px;background:#EAE8DD;"></div><div style="left:201px;top:868px;width:1px;height:64px;background:#EAE8DD;"></div><div style="left:253px;top:868px;width:1px;height:64px;background:#EAE8DD;"></div><div style="left:310px;top:868px;width:1px;height:64px;background:#EAE8DD;"></div><div style="left:364px;top:868px;width:1px;height:64px;background:#EAE8DD;"></div><div style="left:410px;top:868px;width:1px;height:64px;background:#EAE8DD;"></div><div style="left:454px;top:868px;width:1px;height:64px;background:#EAE8DD;"></div><div style="left:505px;top:868px;width:1px;height:64px;background:#EAE8DD;"></div><div style="left:547px;top:868px;width:1px;height:64px;background:#EAE8DD;"></div><div style="left:591px;top:868px;width:1px;height:64px;background:#EAE8DD;"></div><div style="left:632px;top:868px;width:1px;height:64px;background:#EAE8DD;"></div><div style="left:657px;top:868px;width:1px;height:64px;background:#EAE8DD;"></div><div style="left:690px;top:868px;width:1px;height:64px;background:#EAE8DD;"></div><div style="left:755px;top:868px;width:1px;height:64px;background:#EAE8DD;"></div><div style="left:822px;top:868px;width:1px;height:64px;background:#EAE8DD;"></div><div style="left:889px;top:868px;width:1px;height:64px;background:#EAE8DD;"></div><div style="left:955px;top:868px;width:1px;height:64px;background:#EAE8DD;"></div><span style="left:10px;top:871px;color:#000;">1</span><span style="left:10px;top:885px;color:#000;">Sum</span><span style="left:39px;top:871px;width:55px;text-align:center;color:#000">1</span><span style="left:94px;top:871px;width:53px;text-align:center;color:#000">0.000</span><span style="left:147px;top:871px;width:54px;text-align:center;color:#000">1</span><span style="left:201px;top:871px;width:52px;text-align:center;color:#000">0.000</span><span style="left:253px;top:871px;width:57px;text-align:center;color:#000">0.007049</span><span style="left:310px;top:871px;width:54px;text-align:center;color:#000">36.486</span><span style="left:364px;top:871px;width:46px;text-align:center;color:#000">1.006</span><span style="left:410px;top:871px;width:44px;text-align:center;color:#000">0.239</span><span style="left:454px;top:871px;width:51px;text-align:center;color:#000">0.01989</span><span style="left:505px;top:871px;width:42px;text-align:center;color:#000">-0.242</span><span style="left:547px;top:871px;width:44px;text-align:center;color:#000">50</span><span style="left:591px;top:871px;width:41px;text-align:center;color:#000">0</span><span style="left:632px;top:871px;width:25px;text-align:center;color:#000">50</span><span style="left:657px;top:871px;width:33px;text-align:center;color:#000">0.01</span><span style="left:657px;top:885px;width:33px;text-align:center;color:#000">0.01</span><span style="left:690px;top:871px;width:65px;text-align:center;color:#000">4.969e-007</span><span style="left:690px;top:885px;width:65px;text-align:center;color:#000">4.969e-007</span><span style="left:755px;top:871px;width:67px;text-align:center;color:#000">8.383e-005</span><span style="left:755px;top:885px;width:67px;text-align:center;color:#000">8.383e-005</span><span style="left:822px;top:871px;width:67px;text-align:center;color:#000">50.57</span><span style="left:889px;top:871px;width:66px;text-align:center;color:#000">0.4239</span><div style="left:0px;top:938px;width:1248px;height:1px;background:#ACA899;"></div><div style="left:0px;top:939px;width:1248px;height:1px;background:#fff;"></div><div style="left:107px;top:942px;width:205px;height:1px;background:#ACA899;"></div><div style="left:107px;top:942px;width:1px;height:13px;background:#ACA899;"></div><div style="left:311px;top:942px;width:1px;height:13px;background:#fff;"></div><span style="left:108px;top:944px;color:#000;">Angles : (76.6365, -20.6049, -91.6252)</span><div style="left:315px;top:942px;width:165px;height:1px;background:#ACA899;"></div><div style="left:315px;top:942px;width:1px;height:13px;background:#ACA899;"></div><div style="left:479px;top:942px;width:1px;height:13px;background:#fff;"></div><span style="left:316px;top:944px;color:#000;">Scale : (100%, 100%, 100%)</span><div style="left:483px;top:942px;width:55px;height:1px;background:#ACA899;"></div><div style="left:483px;top:942px;width:1px;height:13px;background:#ACA899;"></div><div style="left:537px;top:942px;width:1px;height:13px;background:#fff;"></div><span style="left:484px;top:944px;color:#000;">150%</span>
</body></html>
